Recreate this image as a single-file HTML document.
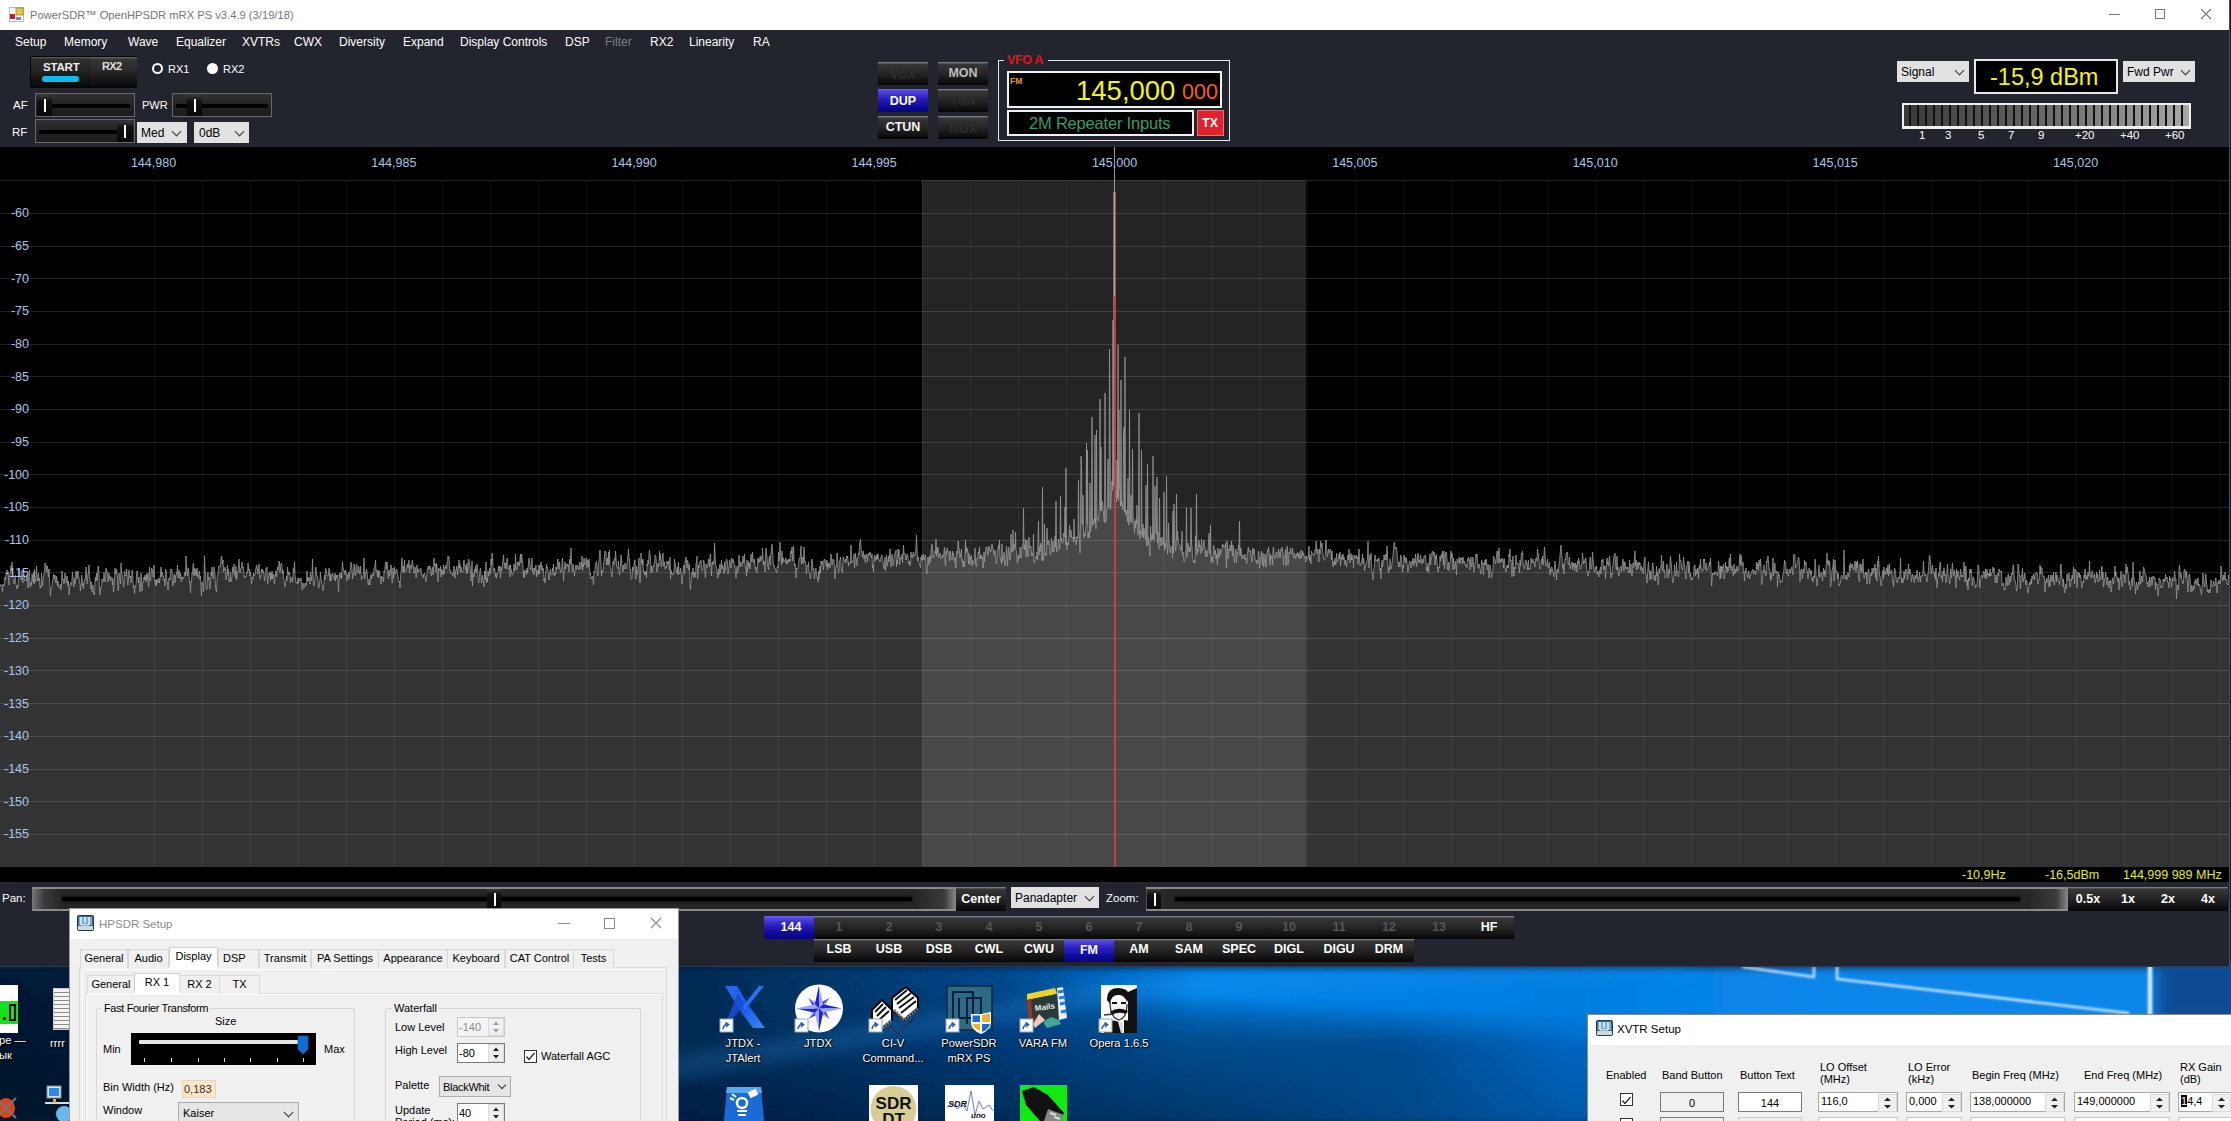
<!DOCTYPE html>
<html><head><meta charset="utf-8">
<style>
*{box-sizing:border-box}
html,body{margin:0;padding:0}
body{width:2231px;height:1121px;position:relative;overflow:hidden;background:#0b1d44;font-family:"Liberation Sans",sans-serif;font-size:12px;color:#fff}
.a{position:absolute}
.t{position:absolute;white-space:nowrap;line-height:1}
.btn{position:absolute;background:linear-gradient(#8a8a8a 0,#6a6a6a 1px,#363636 2px,#2c2c2c 35%,#1c1c1c 65%,#060606 100%);color:#fff;font-weight:bold;text-align:center;white-space:nowrap}
.btnb{position:absolute;background:linear-gradient(#6a60f0 0,#5548e0 2px,#2a20c0 40%,#0c0a9a 75%,#08067a 100%);color:#fff;font-weight:bold;text-align:center;white-space:nowrap}
.dim{color:#3c3c3c}
.combo{position:absolute;background:#e1e1e1;border:1px solid #adadad;color:#000;white-space:nowrap;overflow:hidden}
.chev{position:absolute;width:7px;height:7px;border-right:1px solid #333;border-bottom:1px solid #333;transform:rotate(45deg)}
.sl{position:absolute;border:1px solid #6a6a6a;background:linear-gradient(#303030,#242424 50%,#1c1c1c)}
.groove{position:absolute;height:4px;background:#000}
.thumb{position:absolute;background:linear-gradient(#3a3a3a,#111 30%,#080808)}
.thumb:after{content:"";position:absolute;left:7px;top:4px;width:2px;height:13px;background:#fff}
.win{position:absolute;background:#f0f0f0;border:1px solid #aaa;overflow:hidden;color:#000}
.wtitle{position:absolute;left:0;top:0;right:0;height:30px;background:#fff}
.tab{position:absolute;border:1px solid #d9d9d9;border-bottom:none;background:#f0f0f0;color:#000;white-space:nowrap;text-align:center}
.spin{position:absolute;background:#fff;border:1px solid #7a7a7a;color:#000}
.icon-lbl{position:absolute;color:#fff;text-align:center;font-size:11.2px;line-height:15px;text-shadow:0 0 2px #000,1px 1px 1px #000}
</style></head>
<body>
<!-- ===== DESKTOP ===== -->
<div id="desk" class="a" style="left:0;top:960px;width:2231px;height:161px;overflow:hidden">
<svg class="a" style="left:0;top:0" width="2231" height="161" viewBox="0 960 2231 161">
  <defs>
    <linearGradient id="dr" x1="-22.6" y1="1046.2" x2="166" y2="386" gradientUnits="userSpaceOnUse">
      <stop offset="0" stop-color="#06163a"/>
      <stop offset="0.24" stop-color="#0a2050"/>
      <stop offset="0.38" stop-color="#0a2c5e"/>
      <stop offset="0.50" stop-color="#063c80"/>
      <stop offset="0.566" stop-color="#0050a0"/>
      <stop offset="0.602" stop-color="#0058a8"/>
      <stop offset="0.66" stop-color="#0a6ac8"/>
      <stop offset="0.76" stop-color="#0a78d8"/>
      <stop offset="1" stop-color="#0a7ad8"/>
    </linearGradient>
    <filter id="bl"><feGaussianBlur stdDeviation="8"/></filter>
    <filter id="bl2"><feGaussianBlur stdDeviation="0.8"/></filter>
  </defs>
  <defs><linearGradient id="dg0" gradientUnits="userSpaceOnUse" x1="0" x2="2231" y1="0" y2="0"><stop offset="0.0000" stop-color="#001a38"/><stop offset="0.1546" stop-color="#002245"/><stop offset="0.3093" stop-color="#002a52"/><stop offset="0.3788" stop-color="#003a70"/><stop offset="0.4482" stop-color="#00498d"/><stop offset="0.4706" stop-color="#0057a5"/><stop offset="0.4931" stop-color="#0066c0"/><stop offset="0.5155" stop-color="#0075d4"/><stop offset="0.5379" stop-color="#0084e8"/><stop offset="0.5827" stop-color="#0082e6"/><stop offset="0.6275" stop-color="#0080e4"/><stop offset="0.6656" stop-color="#007fe2"/><stop offset="0.7037" stop-color="#007ee0"/><stop offset="0.7620" stop-color="#0683e6"/><stop offset="0.8068" stop-color="#0a86ea"/><stop offset="0.8965" stop-color="#0a86ea"/><stop offset="1.0000" stop-color="#0a86ea"/></linearGradient><linearGradient id="dg1" gradientUnits="userSpaceOnUse" x1="0" x2="2231" y1="0" y2="0"><stop offset="0.0000" stop-color="#001a37"/><stop offset="0.1546" stop-color="#002244"/><stop offset="0.3093" stop-color="#002a52"/><stop offset="0.3788" stop-color="#00396f"/><stop offset="0.4482" stop-color="#00488b"/><stop offset="0.4706" stop-color="#0055a2"/><stop offset="0.4931" stop-color="#0066c0"/><stop offset="0.5155" stop-color="#0075d4"/><stop offset="0.5379" stop-color="#0084e8"/><stop offset="0.5827" stop-color="#0082e6"/><stop offset="0.6275" stop-color="#0080e4"/><stop offset="0.6656" stop-color="#007fe2"/><stop offset="0.7037" stop-color="#007ee0"/><stop offset="0.7620" stop-color="#0683e6"/><stop offset="0.8068" stop-color="#0a86ea"/><stop offset="0.8965" stop-color="#0a86ea"/><stop offset="1.0000" stop-color="#0a86ea"/></linearGradient><linearGradient id="dg2" gradientUnits="userSpaceOnUse" x1="0" x2="2231" y1="0" y2="0"><stop offset="0.0000" stop-color="#001936"/><stop offset="0.1546" stop-color="#002244"/><stop offset="0.3093" stop-color="#002a52"/><stop offset="0.3788" stop-color="#00386e"/><stop offset="0.4482" stop-color="#00478a"/><stop offset="0.4706" stop-color="#00539f"/><stop offset="0.4931" stop-color="#0066c0"/><stop offset="0.5155" stop-color="#0075d4"/><stop offset="0.5379" stop-color="#0084e8"/><stop offset="0.5827" stop-color="#0082e6"/><stop offset="0.6275" stop-color="#0080e4"/><stop offset="0.6656" stop-color="#007fe2"/><stop offset="0.7037" stop-color="#007ee0"/><stop offset="0.7620" stop-color="#0683e6"/><stop offset="0.8068" stop-color="#0a86ea"/><stop offset="0.8965" stop-color="#0a86ea"/><stop offset="1.0000" stop-color="#0a86ea"/></linearGradient><linearGradient id="dg3" gradientUnits="userSpaceOnUse" x1="0" x2="2231" y1="0" y2="0"><stop offset="0.0000" stop-color="#001935"/><stop offset="0.1546" stop-color="#002143"/><stop offset="0.3093" stop-color="#002a51"/><stop offset="0.3788" stop-color="#00386d"/><stop offset="0.4482" stop-color="#004688"/><stop offset="0.4706" stop-color="#00519c"/><stop offset="0.4931" stop-color="#0066c0"/><stop offset="0.5155" stop-color="#0075d4"/><stop offset="0.5379" stop-color="#0084e8"/><stop offset="0.5827" stop-color="#0082e6"/><stop offset="0.6275" stop-color="#0080e4"/><stop offset="0.6656" stop-color="#007fe2"/><stop offset="0.7037" stop-color="#007ee0"/><stop offset="0.7620" stop-color="#0683e6"/><stop offset="0.8068" stop-color="#0a86ea"/><stop offset="0.8965" stop-color="#0a86ea"/><stop offset="1.0000" stop-color="#0a86ea"/></linearGradient><linearGradient id="dg4" gradientUnits="userSpaceOnUse" x1="0" x2="2231" y1="0" y2="0"><stop offset="0.0000" stop-color="#001935"/><stop offset="0.1546" stop-color="#002143"/><stop offset="0.3093" stop-color="#002a51"/><stop offset="0.3788" stop-color="#00376c"/><stop offset="0.4482" stop-color="#004486"/><stop offset="0.4706" stop-color="#004f98"/><stop offset="0.4931" stop-color="#0062b9"/><stop offset="0.5155" stop-color="#0073d1"/><stop offset="0.5379" stop-color="#0084e8"/><stop offset="0.5827" stop-color="#0082e6"/><stop offset="0.6275" stop-color="#0080e4"/><stop offset="0.6656" stop-color="#007fe2"/><stop offset="0.7037" stop-color="#007ee0"/><stop offset="0.7620" stop-color="#0683e6"/><stop offset="0.8068" stop-color="#0a86ea"/><stop offset="0.8965" stop-color="#0a86ea"/><stop offset="1.0000" stop-color="#0a86ea"/></linearGradient><linearGradient id="dg5" gradientUnits="userSpaceOnUse" x1="0" x2="2231" y1="0" y2="0"><stop offset="0.0000" stop-color="#001834"/><stop offset="0.1546" stop-color="#002142"/><stop offset="0.3093" stop-color="#002a51"/><stop offset="0.3788" stop-color="#00376b"/><stop offset="0.4482" stop-color="#004385"/><stop offset="0.4706" stop-color="#004d95"/><stop offset="0.4931" stop-color="#005daf"/><stop offset="0.5155" stop-color="#006cc4"/><stop offset="0.5379" stop-color="#007cdb"/><stop offset="0.5827" stop-color="#0082e5"/><stop offset="0.6275" stop-color="#0080e4"/><stop offset="0.6656" stop-color="#007fe2"/><stop offset="0.7037" stop-color="#007ee0"/><stop offset="0.7620" stop-color="#0683e6"/><stop offset="0.8068" stop-color="#0a86ea"/><stop offset="0.8965" stop-color="#0a86ea"/><stop offset="1.0000" stop-color="#0a86ea"/></linearGradient><linearGradient id="dg6" gradientUnits="userSpaceOnUse" x1="0" x2="2231" y1="0" y2="0"><stop offset="0.0000" stop-color="#001833"/><stop offset="0.1546" stop-color="#002142"/><stop offset="0.3093" stop-color="#002a51"/><stop offset="0.3788" stop-color="#00366a"/><stop offset="0.4482" stop-color="#004283"/><stop offset="0.4706" stop-color="#004b92"/><stop offset="0.4931" stop-color="#0057a5"/><stop offset="0.5155" stop-color="#0064b8"/><stop offset="0.5379" stop-color="#0073cc"/><stop offset="0.5827" stop-color="#0079d7"/><stop offset="0.6275" stop-color="#007ee1"/><stop offset="0.6656" stop-color="#007fe2"/><stop offset="0.7037" stop-color="#007ee0"/><stop offset="0.7620" stop-color="#0683e6"/><stop offset="0.8068" stop-color="#0a86ea"/><stop offset="0.8965" stop-color="#0a86ea"/><stop offset="1.0000" stop-color="#0a86ea"/></linearGradient><linearGradient id="dg7" gradientUnits="userSpaceOnUse" x1="0" x2="2231" y1="0" y2="0"><stop offset="0.0000" stop-color="#001832"/><stop offset="0.1546" stop-color="#002142"/><stop offset="0.3093" stop-color="#002a51"/><stop offset="0.3788" stop-color="#003569"/><stop offset="0.4482" stop-color="#004181"/><stop offset="0.4706" stop-color="#00498f"/><stop offset="0.4931" stop-color="#00519b"/><stop offset="0.5155" stop-color="#005dac"/><stop offset="0.5379" stop-color="#006abe"/><stop offset="0.5827" stop-color="#0070c9"/><stop offset="0.6275" stop-color="#0075d3"/><stop offset="0.6656" stop-color="#007bdd"/><stop offset="0.7037" stop-color="#007ee0"/><stop offset="0.7620" stop-color="#0683e6"/><stop offset="0.8068" stop-color="#0a86ea"/><stop offset="0.8965" stop-color="#0a86ea"/><stop offset="1.0000" stop-color="#0a86ea"/></linearGradient><linearGradient id="dg8" gradientUnits="userSpaceOnUse" x1="0" x2="2231" y1="0" y2="0"><stop offset="0.0000" stop-color="#001731"/><stop offset="0.1546" stop-color="#002141"/><stop offset="0.3093" stop-color="#002a51"/><stop offset="0.3788" stop-color="#003568"/><stop offset="0.4482" stop-color="#004080"/><stop offset="0.4706" stop-color="#00478c"/><stop offset="0.4931" stop-color="#004d93"/><stop offset="0.5155" stop-color="#00569f"/><stop offset="0.5379" stop-color="#0061af"/><stop offset="0.5827" stop-color="#0067bb"/><stop offset="0.6275" stop-color="#006dc5"/><stop offset="0.6656" stop-color="#0075d3"/><stop offset="0.7037" stop-color="#007adb"/><stop offset="0.7620" stop-color="#0683e6"/><stop offset="0.8068" stop-color="#0a86ea"/><stop offset="0.8965" stop-color="#0a86ea"/><stop offset="1.0000" stop-color="#0a86ea"/></linearGradient><linearGradient id="dg9" gradientUnits="userSpaceOnUse" x1="0" x2="2231" y1="0" y2="0"><stop offset="0.0000" stop-color="#001731"/><stop offset="0.1546" stop-color="#002141"/><stop offset="0.3093" stop-color="#002a51"/><stop offset="0.3788" stop-color="#003467"/><stop offset="0.4482" stop-color="#003e7e"/><stop offset="0.4706" stop-color="#004588"/><stop offset="0.4931" stop-color="#004b90"/><stop offset="0.5155" stop-color="#005299"/><stop offset="0.5379" stop-color="#005ba4"/><stop offset="0.5827" stop-color="#005fac"/><stop offset="0.6275" stop-color="#0065b8"/><stop offset="0.6656" stop-color="#006fca"/><stop offset="0.7037" stop-color="#0076d6"/><stop offset="0.7620" stop-color="#057fe1"/><stop offset="0.8068" stop-color="#0a86ea"/><stop offset="0.8965" stop-color="#0a86ea"/><stop offset="1.0000" stop-color="#0a86ea"/></linearGradient><linearGradient id="dg10" gradientUnits="userSpaceOnUse" x1="0" x2="2231" y1="0" y2="0"><stop offset="0.0000" stop-color="#001730"/><stop offset="0.1546" stop-color="#002040"/><stop offset="0.3093" stop-color="#002a50"/><stop offset="0.3788" stop-color="#003466"/><stop offset="0.4482" stop-color="#003d7c"/><stop offset="0.4706" stop-color="#004385"/><stop offset="0.4931" stop-color="#00488c"/><stop offset="0.5155" stop-color="#004f94"/><stop offset="0.5379" stop-color="#00569d"/><stop offset="0.5827" stop-color="#0059a2"/><stop offset="0.6275" stop-color="#005caa"/><stop offset="0.6656" stop-color="#0068c1"/><stop offset="0.7037" stop-color="#0072d1"/><stop offset="0.7620" stop-color="#047bdc"/><stop offset="0.8068" stop-color="#0882e5"/><stop offset="0.8965" stop-color="#0a86ea"/><stop offset="1.0000" stop-color="#0a86ea"/></linearGradient><linearGradient id="dg11" gradientUnits="userSpaceOnUse" x1="0" x2="2231" y1="0" y2="0"><stop offset="0.0000" stop-color="#00162f"/><stop offset="0.1546" stop-color="#002040"/><stop offset="0.3093" stop-color="#002a50"/><stop offset="0.3788" stop-color="#003365"/><stop offset="0.4482" stop-color="#003c7b"/><stop offset="0.4706" stop-color="#004182"/><stop offset="0.4931" stop-color="#004688"/><stop offset="0.5155" stop-color="#004c8f"/><stop offset="0.5379" stop-color="#005296"/><stop offset="0.5827" stop-color="#00549a"/><stop offset="0.6275" stop-color="#0056a0"/><stop offset="0.6656" stop-color="#0062b7"/><stop offset="0.7037" stop-color="#006ecc"/><stop offset="0.7620" stop-color="#0378d7"/><stop offset="0.8068" stop-color="#077fe0"/><stop offset="0.8965" stop-color="#0984e8"/><stop offset="1.0000" stop-color="#0a86ea"/></linearGradient><linearGradient id="dg12" gradientUnits="userSpaceOnUse" x1="0" x2="2231" y1="0" y2="0"><stop offset="0.0000" stop-color="#00162e"/><stop offset="0.1546" stop-color="#00203f"/><stop offset="0.3093" stop-color="#002a50"/><stop offset="0.3788" stop-color="#003264"/><stop offset="0.4482" stop-color="#003b79"/><stop offset="0.4706" stop-color="#003f7f"/><stop offset="0.4931" stop-color="#004484"/><stop offset="0.5155" stop-color="#00498a"/><stop offset="0.5379" stop-color="#004e8f"/><stop offset="0.5827" stop-color="#004f92"/><stop offset="0.6275" stop-color="#004f95"/><stop offset="0.6656" stop-color="#005bad"/><stop offset="0.7037" stop-color="#0068c5"/><stop offset="0.7620" stop-color="#0274d2"/><stop offset="0.8068" stop-color="#057bdb"/><stop offset="0.8965" stop-color="#0881e3"/><stop offset="1.0000" stop-color="#0a86ea"/></linearGradient><linearGradient id="dg13" gradientUnits="userSpaceOnUse" x1="0" x2="2231" y1="0" y2="0"><stop offset="0.0000" stop-color="#00162e"/><stop offset="0.1546" stop-color="#00203f"/><stop offset="0.3093" stop-color="#002a50"/><stop offset="0.3788" stop-color="#003163"/><stop offset="0.4482" stop-color="#003977"/><stop offset="0.4706" stop-color="#003e7c"/><stop offset="0.4931" stop-color="#004281"/><stop offset="0.5155" stop-color="#004786"/><stop offset="0.5379" stop-color="#004b8b"/><stop offset="0.5827" stop-color="#004b8d"/><stop offset="0.6275" stop-color="#004c90"/><stop offset="0.6656" stop-color="#0058a7"/><stop offset="0.7037" stop-color="#0064bf"/><stop offset="0.7620" stop-color="#006ac6"/><stop offset="0.8068" stop-color="#0378d6"/><stop offset="0.8965" stop-color="#067dde"/><stop offset="1.0000" stop-color="#0984e7"/></linearGradient><linearGradient id="dg14" gradientUnits="userSpaceOnUse" x1="0" x2="2231" y1="0" y2="0"><stop offset="0.0000" stop-color="#00162e"/><stop offset="0.1546" stop-color="#001f3e"/><stop offset="0.3093" stop-color="#00294f"/><stop offset="0.3788" stop-color="#003061"/><stop offset="0.4482" stop-color="#003874"/><stop offset="0.4706" stop-color="#003d79"/><stop offset="0.4931" stop-color="#00417e"/><stop offset="0.5155" stop-color="#004583"/><stop offset="0.5379" stop-color="#004a88"/><stop offset="0.5827" stop-color="#004a8c"/><stop offset="0.6275" stop-color="#004b8f"/><stop offset="0.6656" stop-color="#0057a6"/><stop offset="0.7037" stop-color="#0063bd"/><stop offset="0.7620" stop-color="#0069c4"/><stop offset="0.8068" stop-color="#006ec9"/><stop offset="0.8965" stop-color="#047ad9"/><stop offset="1.0000" stop-color="#0780e2"/></linearGradient><linearGradient id="dg15" gradientUnits="userSpaceOnUse" x1="0" x2="2231" y1="0" y2="0"><stop offset="0.0000" stop-color="#00152d"/><stop offset="0.1546" stop-color="#001f3d"/><stop offset="0.3093" stop-color="#00284e"/><stop offset="0.3788" stop-color="#002f60"/><stop offset="0.4482" stop-color="#003772"/><stop offset="0.4706" stop-color="#003b77"/><stop offset="0.4931" stop-color="#00407c"/><stop offset="0.5155" stop-color="#004481"/><stop offset="0.5379" stop-color="#004886"/><stop offset="0.5827" stop-color="#00498a"/><stop offset="0.6275" stop-color="#004b8e"/><stop offset="0.6656" stop-color="#0056a4"/><stop offset="0.7037" stop-color="#0062bb"/><stop offset="0.7620" stop-color="#0068c1"/><stop offset="0.8068" stop-color="#006dc6"/><stop offset="0.8965" stop-color="#006dc6"/><stop offset="1.0000" stop-color="#067ddd"/></linearGradient><linearGradient id="dg16" gradientUnits="userSpaceOnUse" x1="0" x2="2231" y1="0" y2="0"><stop offset="0.0000" stop-color="#00152d"/><stop offset="0.1546" stop-color="#001e3d"/><stop offset="0.3093" stop-color="#00274d"/><stop offset="0.3788" stop-color="#002e5e"/><stop offset="0.4482" stop-color="#00366f"/><stop offset="0.4706" stop-color="#003a74"/><stop offset="0.4931" stop-color="#003e79"/><stop offset="0.5155" stop-color="#00427e"/><stop offset="0.5379" stop-color="#004683"/><stop offset="0.5827" stop-color="#004888"/><stop offset="0.6275" stop-color="#004a8d"/><stop offset="0.6656" stop-color="#0056a3"/><stop offset="0.7037" stop-color="#0061b9"/><stop offset="0.7620" stop-color="#0067bf"/><stop offset="0.8068" stop-color="#006cc4"/><stop offset="0.8965" stop-color="#006cc4"/><stop offset="1.0000" stop-color="#0479d9"/></linearGradient><linearGradient id="dg17" gradientUnits="userSpaceOnUse" x1="0" x2="2231" y1="0" y2="0"><stop offset="0.0000" stop-color="#00152d"/><stop offset="0.1546" stop-color="#001d3c"/><stop offset="0.3093" stop-color="#00264c"/><stop offset="0.3788" stop-color="#002d5c"/><stop offset="0.4482" stop-color="#00356d"/><stop offset="0.4706" stop-color="#003972"/><stop offset="0.4931" stop-color="#003d77"/><stop offset="0.5155" stop-color="#00417c"/><stop offset="0.5379" stop-color="#004581"/><stop offset="0.5827" stop-color="#004787"/><stop offset="0.6275" stop-color="#004a8c"/><stop offset="0.6656" stop-color="#0055a2"/><stop offset="0.7037" stop-color="#0060b7"/><stop offset="0.7620" stop-color="#0066bd"/><stop offset="0.8068" stop-color="#006ac2"/><stop offset="0.8965" stop-color="#006ac2"/><stop offset="1.0000" stop-color="#006ac2"/></linearGradient><linearGradient id="dg18" gradientUnits="userSpaceOnUse" x1="0" x2="2231" y1="0" y2="0"><stop offset="0.0000" stop-color="#00152c"/><stop offset="0.1546" stop-color="#001d3c"/><stop offset="0.3093" stop-color="#00254b"/><stop offset="0.3788" stop-color="#002c5a"/><stop offset="0.4482" stop-color="#00346a"/><stop offset="0.4706" stop-color="#00386f"/><stop offset="0.4931" stop-color="#003c74"/><stop offset="0.5155" stop-color="#003f79"/><stop offset="0.5379" stop-color="#00437e"/><stop offset="0.5827" stop-color="#004685"/><stop offset="0.6275" stop-color="#00498c"/><stop offset="0.6656" stop-color="#0054a0"/><stop offset="0.7037" stop-color="#005fb5"/><stop offset="0.7620" stop-color="#0065bb"/><stop offset="0.8068" stop-color="#0069c0"/><stop offset="0.8965" stop-color="#0069c0"/><stop offset="1.0000" stop-color="#0069c0"/></linearGradient><linearGradient id="dg19" gradientUnits="userSpaceOnUse" x1="0" x2="2231" y1="0" y2="0"><stop offset="0.0000" stop-color="#00142c"/><stop offset="0.1546" stop-color="#001c3b"/><stop offset="0.3093" stop-color="#00244a"/><stop offset="0.3788" stop-color="#002b59"/><stop offset="0.4482" stop-color="#003368"/><stop offset="0.4706" stop-color="#00376d"/><stop offset="0.4931" stop-color="#003a72"/><stop offset="0.5155" stop-color="#003e77"/><stop offset="0.5379" stop-color="#00427c"/><stop offset="0.5827" stop-color="#004583"/><stop offset="0.6275" stop-color="#00498b"/><stop offset="0.6656" stop-color="#00539f"/><stop offset="0.7037" stop-color="#005eb3"/><stop offset="0.7620" stop-color="#0063b9"/><stop offset="0.8068" stop-color="#0068be"/><stop offset="0.8965" stop-color="#0068be"/><stop offset="1.0000" stop-color="#0068be"/></linearGradient><linearGradient id="dg20" gradientUnits="userSpaceOnUse" x1="0" x2="2231" y1="0" y2="0"><stop offset="0.0000" stop-color="#00142c"/><stop offset="0.1546" stop-color="#001c3a"/><stop offset="0.3093" stop-color="#002349"/><stop offset="0.3788" stop-color="#002a57"/><stop offset="0.4482" stop-color="#003265"/><stop offset="0.4706" stop-color="#00356a"/><stop offset="0.4931" stop-color="#00396f"/><stop offset="0.5155" stop-color="#003d74"/><stop offset="0.5379" stop-color="#004079"/><stop offset="0.5827" stop-color="#004482"/><stop offset="0.6275" stop-color="#00488a"/><stop offset="0.6656" stop-color="#00539d"/><stop offset="0.7037" stop-color="#005db1"/><stop offset="0.7620" stop-color="#0062b7"/><stop offset="0.8068" stop-color="#0067bb"/><stop offset="0.8965" stop-color="#0067bb"/><stop offset="1.0000" stop-color="#0067bb"/></linearGradient><linearGradient id="dg21" gradientUnits="userSpaceOnUse" x1="0" x2="2231" y1="0" y2="0"><stop offset="0.0000" stop-color="#00142b"/><stop offset="0.1546" stop-color="#001b3a"/><stop offset="0.3093" stop-color="#002248"/><stop offset="0.3788" stop-color="#002955"/><stop offset="0.4482" stop-color="#003163"/><stop offset="0.4706" stop-color="#003468"/><stop offset="0.4931" stop-color="#00386d"/><stop offset="0.5155" stop-color="#003b72"/><stop offset="0.5379" stop-color="#003f77"/><stop offset="0.5827" stop-color="#004380"/><stop offset="0.6275" stop-color="#004889"/><stop offset="0.6656" stop-color="#00529c"/><stop offset="0.7037" stop-color="#005caf"/><stop offset="0.7620" stop-color="#0061b5"/><stop offset="0.8068" stop-color="#0065b9"/><stop offset="0.8965" stop-color="#0065b9"/><stop offset="1.0000" stop-color="#0065b9"/></linearGradient><linearGradient id="dg22" gradientUnits="userSpaceOnUse" x1="0" x2="2231" y1="0" y2="0"><stop offset="0.0000" stop-color="#00142b"/><stop offset="0.1546" stop-color="#001a39"/><stop offset="0.3093" stop-color="#002147"/><stop offset="0.3788" stop-color="#002854"/><stop offset="0.4482" stop-color="#003060"/><stop offset="0.4706" stop-color="#003365"/><stop offset="0.4931" stop-color="#00366a"/><stop offset="0.5155" stop-color="#003a6f"/><stop offset="0.5379" stop-color="#003d74"/><stop offset="0.5827" stop-color="#00427e"/><stop offset="0.6275" stop-color="#004888"/><stop offset="0.6656" stop-color="#00519a"/><stop offset="0.7037" stop-color="#005bac"/><stop offset="0.7620" stop-color="#0060b2"/><stop offset="0.8068" stop-color="#0064b7"/><stop offset="0.8965" stop-color="#0064b7"/><stop offset="1.0000" stop-color="#0064b7"/></linearGradient><linearGradient id="dg23" gradientUnits="userSpaceOnUse" x1="0" x2="2231" y1="0" y2="0"><stop offset="0.0000" stop-color="#00142b"/><stop offset="0.1546" stop-color="#001a38"/><stop offset="0.3093" stop-color="#002046"/><stop offset="0.3788" stop-color="#002752"/><stop offset="0.4482" stop-color="#002e5d"/><stop offset="0.4706" stop-color="#003262"/><stop offset="0.4931" stop-color="#003567"/><stop offset="0.5155" stop-color="#00386c"/><stop offset="0.5379" stop-color="#003b71"/><stop offset="0.5827" stop-color="#00417d"/><stop offset="0.6275" stop-color="#004788"/><stop offset="0.6656" stop-color="#005199"/><stop offset="0.7037" stop-color="#005aaa"/><stop offset="0.7620" stop-color="#005fb0"/><stop offset="0.8068" stop-color="#0063b5"/><stop offset="0.8965" stop-color="#0063b5"/><stop offset="1.0000" stop-color="#0063b5"/></linearGradient><linearGradient id="dg24" gradientUnits="userSpaceOnUse" x1="0" x2="2231" y1="0" y2="0"><stop offset="0.0000" stop-color="#00132a"/><stop offset="0.1546" stop-color="#001938"/><stop offset="0.3093" stop-color="#001f45"/><stop offset="0.3788" stop-color="#002650"/><stop offset="0.4482" stop-color="#002d5b"/><stop offset="0.4706" stop-color="#003060"/><stop offset="0.4931" stop-color="#003465"/><stop offset="0.5155" stop-color="#00376a"/><stop offset="0.5379" stop-color="#003a6f"/><stop offset="0.5827" stop-color="#00407b"/><stop offset="0.6275" stop-color="#004787"/><stop offset="0.6656" stop-color="#005098"/><stop offset="0.7037" stop-color="#0059a8"/><stop offset="0.7620" stop-color="#005eae"/><stop offset="0.8068" stop-color="#0061b3"/><stop offset="0.8965" stop-color="#0061b3"/><stop offset="1.0000" stop-color="#0061b3"/></linearGradient><linearGradient id="dg25" gradientUnits="userSpaceOnUse" x1="0" x2="2231" y1="0" y2="0"><stop offset="0.0000" stop-color="#00132a"/><stop offset="0.1546" stop-color="#001937"/><stop offset="0.3093" stop-color="#001e44"/><stop offset="0.3788" stop-color="#00254e"/><stop offset="0.4482" stop-color="#002c58"/><stop offset="0.4706" stop-color="#002f5d"/><stop offset="0.4931" stop-color="#003262"/><stop offset="0.5155" stop-color="#003567"/><stop offset="0.5379" stop-color="#00386c"/><stop offset="0.5827" stop-color="#003f79"/><stop offset="0.6275" stop-color="#004686"/><stop offset="0.6656" stop-color="#004f96"/><stop offset="0.7037" stop-color="#0058a6"/><stop offset="0.7620" stop-color="#005dac"/><stop offset="0.8068" stop-color="#0060b0"/><stop offset="0.8965" stop-color="#0060b0"/><stop offset="1.0000" stop-color="#0060b0"/></linearGradient><filter id="dbl" x="-1%" y="-5%" width="102%" height="110%"><feGaussianBlur stdDeviation="2 4" edgeMode="duplicate"/></filter></defs><rect x="0" y="960" width="2231" height="161" fill="#001a38"/><g filter="url(#dbl)"><rect x="-20" y="967" width="2271" height="7" fill="url(#dg0)"/><rect x="-20" y="973" width="2271" height="7" fill="url(#dg1)"/><rect x="-20" y="979" width="2271" height="7" fill="url(#dg2)"/><rect x="-20" y="985" width="2271" height="7" fill="url(#dg3)"/><rect x="-20" y="991" width="2271" height="7" fill="url(#dg4)"/><rect x="-20" y="997" width="2271" height="7" fill="url(#dg5)"/><rect x="-20" y="1003" width="2271" height="7" fill="url(#dg6)"/><rect x="-20" y="1009" width="2271" height="7" fill="url(#dg7)"/><rect x="-20" y="1015" width="2271" height="7" fill="url(#dg8)"/><rect x="-20" y="1021" width="2271" height="7" fill="url(#dg9)"/><rect x="-20" y="1027" width="2271" height="7" fill="url(#dg10)"/><rect x="-20" y="1033" width="2271" height="7" fill="url(#dg11)"/><rect x="-20" y="1039" width="2271" height="7" fill="url(#dg12)"/><rect x="-20" y="1045" width="2271" height="7" fill="url(#dg13)"/><rect x="-20" y="1051" width="2271" height="7" fill="url(#dg14)"/><rect x="-20" y="1057" width="2271" height="7" fill="url(#dg15)"/><rect x="-20" y="1063" width="2271" height="7" fill="url(#dg16)"/><rect x="-20" y="1069" width="2271" height="7" fill="url(#dg17)"/><rect x="-20" y="1075" width="2271" height="7" fill="url(#dg18)"/><rect x="-20" y="1081" width="2271" height="7" fill="url(#dg19)"/><rect x="-20" y="1087" width="2271" height="7" fill="url(#dg20)"/><rect x="-20" y="1093" width="2271" height="7" fill="url(#dg21)"/><rect x="-20" y="1099" width="2271" height="7" fill="url(#dg22)"/><rect x="-20" y="1105" width="2271" height="7" fill="url(#dg23)"/><rect x="-20" y="1111" width="2271" height="7" fill="url(#dg24)"/><rect x="-20" y="1117" width="2271" height="7" fill="url(#dg25)"/></g>
  <!-- light streak -->
  <polygon points="640,1062 1150,978 1700,960 1700,972 1150,998 660,1082" fill="#3a9cf0" opacity="0.22" filter="url(#bl)"/>
  <!-- darker region right of logo -->
  <rect x="2156" y="955" width="90" height="70" fill="#0a4c96" filter="url(#bl)"/>
  <!-- logo edges -->
  <g filter="url(#bl2)" fill="none" stroke="#d8f0ff" stroke-linecap="square">
    <path d="M1743,967 L1814,977 L1814,967" stroke-width="2.5" stroke-opacity="0.85"/>
    <path d="M1837,967 L1837,979 L2128,1013" stroke-width="2.5" stroke-opacity="0.9"/>
    <path d="M2150,967 L2150,1013" stroke-width="4.5"/>
  </g>
</svg>

</div>

<!-- ===== MAIN WINDOW ===== -->
<div id="main" class="a" style="left:0;top:0;width:2229px;height:967px;background:#22252d;overflow:hidden">
  <!-- title bar -->
  <div class="a" style="left:0;top:0;width:2229px;height:30px;background:#fff"></div>
  <svg class="a" style="left:9px;top:7px" width="15" height="15" viewBox="0 0 15 15">
    <rect x="0.5" y="0.5" width="14" height="14" fill="#fff" stroke="#bbb"/>
    <rect x="7" y="1" width="7" height="7" fill="#e8c840" stroke="#a08820" stroke-width="0.8"/>
    <rect x="1" y="7" width="5" height="5" fill="#c02020"/>
    <rect x="7" y="10" width="5" height="3" fill="#5a8ad8"/>
  </svg>
  <div class="t" style="left:30px;top:9.5px;font-size:11.2px;color:#767676">PowerSDR™ OpenHPSDR mRX PS v3.4.9 (3/19/18)</div>
  <div class="a" style="left:2109px;top:14px;width:11px;height:1px;background:#777"></div>
  <div class="a" style="left:2155px;top:9px;width:10px;height:10px;border:1px solid #777"></div>
  <svg class="a" style="left:2200px;top:8px" width="12" height="12" viewBox="0 0 12 12"><path d="M1,1L11,11M11,1L1,11" stroke="#777" stroke-width="1.1"/></svg>

  <div class="t" style="left:15px;top:36px">Setup</div>
  <div class="t" style="left:64px;top:36px">Memory</div>
  <div class="t" style="left:128px;top:36px">Wave</div>
  <div class="t" style="left:176px;top:36px">Equalizer</div>
  <div class="t" style="left:242px;top:36px">XVTRs</div>
  <div class="t" style="left:294px;top:36px">CWX</div>
  <div class="t" style="left:339px;top:36px">Diversity</div>
  <div class="t" style="left:403px;top:36px">Expand</div>
  <div class="t" style="left:460px;top:36px">Display Controls</div>
  <div class="t" style="left:565px;top:36px">DSP</div>
  <div class="t" style="left:605px;top:36px;color:#7a7d84">Filter</div>
  <div class="t" style="left:650px;top:36px">RX2</div>
  <div class="t" style="left:689px;top:36px">Linearity</div>
  <div class="t" style="left:753px;top:36px">RA</div>

  <!-- START / RX2 -->
  <div class="a" style="left:30px;top:56px;width:107px;height:32px;background:#050505"></div>
  <div class="btn" style="left:31px;top:57px;width:60px;height:30px;background:linear-gradient(#5c5c5c 0,#4a4a4a 1px,#2e2e2e 2px,#262626 40%,#141414 75%,#080808 100%)"></div>
  <div class="btn" style="left:91px;top:57px;width:46px;height:30px;background:linear-gradient(#6a6a6a 0,#555 1px,#363636 2px,#2c2c2c 40%,#161616 75%,#0a0a0a 100%)"></div>
  <div class="t" style="left:43px;top:62px;font-size:11.5px;font-weight:bold;color:#ececec;letter-spacing:-0.2px">START</div>
  <div class="a" style="left:42px;top:76px;width:37px;height:6px;border-radius:3px;background:#0cbcec"></div>
  <div class="t" style="left:102px;top:61px;font-size:11px;font-weight:bold;color:#dedede;letter-spacing:-0.6px">RX2</div>
  <!-- radios -->
  <div class="a" style="left:152px;top:63px;width:11px;height:11px;border-radius:50%;border:2px solid #fff;background:#22252d"></div>
  <div class="t" style="left:168px;top:64px;font-size:11px;color:#fff">RX1</div>
  <div class="a" style="left:207px;top:63px;width:11px;height:11px;border-radius:50%;background:#fff"></div>
  <div class="t" style="left:223px;top:64px;font-size:11px;color:#fff">RX2</div>
  <!-- AF / PWR / RF -->
  <div class="t" style="left:13px;top:100px;font-size:11.5px">AF</div>
  <div class="sl" style="left:35px;top:93px;width:100px;height:24px"></div>
  <div class="groove" style="left:38px;top:104px;width:92px"></div>
  <div class="thumb" style="left:37px;top:95px;width:15px;height:21px"></div>
  <div class="t" style="left:142px;top:100px;font-size:11px">PWR</div>
  <div class="sl" style="left:172px;top:93px;width:100px;height:24px"></div>
  <div class="groove" style="left:176px;top:104px;width:92px"></div>
  <div class="thumb" style="left:187px;top:95px;width:15px;height:21px"></div>
  <div class="t" style="left:12px;top:127px;font-size:11.5px">RF</div>
  <div class="sl" style="left:35px;top:119px;width:100px;height:24px"></div>
  <div class="groove" style="left:39px;top:130px;width:92px"></div>
  <div class="thumb" style="left:117px;top:121px;width:16px;height:21px"></div>
  <div class="combo" style="left:137px;top:122px;width:50px;height:21px;border-color:#e1e1e1"><div class="t" style="left:3px;top:4px;font-size:12px">Med</div><div class="chev" style="left:35px;top:5px"></div></div>
  <div class="combo" style="left:194px;top:122px;width:55px;height:21px;border-color:#e1e1e1"><div class="t" style="left:4px;top:4px;font-size:12px">0dB</div><div class="chev" style="left:41px;top:5px"></div></div>

  <!-- VOX / DUP / CTUN / MON / TUN / MOX -->
  <div class="btn" style="left:878px;top:62px;width:50px;height:23px;padding-top:6px;font-size:12px;color:#2e2e2e">VOX</div>
  <div class="btnb" style="left:878px;top:89px;width:50px;height:23px;padding-top:5px;font-size:12.5px">DUP</div>
  <div class="btn" style="left:878px;top:116px;width:50px;height:23px;padding-top:4px;font-size:12.5px;color:#f4f4f4">CTUN</div>
  <div class="btn" style="left:938px;top:62px;width:50px;height:23px;padding-top:4px;font-size:12.5px;color:#bdbdbd">MON</div>
  <div class="btn" style="left:938px;top:89px;width:50px;height:23px;padding-top:5px;font-size:12px;color:#2c2c2c">TUN</div>
  <div class="btn" style="left:938px;top:116px;width:50px;height:23px;padding-top:6px;font-size:12px;color:#2c2c2c">MOX</div>

  <!-- VFO A -->
  <div class="a" style="left:998px;top:60px;width:232px;height:81px;border:1.5px solid #e6e6e6"></div>
  <div class="a" style="left:1004px;top:54px;width:44px;height:10px;background:#22252d"></div>
  <div class="t" style="left:1007px;top:54px;font-size:12.5px;font-weight:bold;color:#e8101c;letter-spacing:-0.3px">VFO A</div>
  <div class="a" style="left:1007px;top:71px;width:215px;height:37px;border:2px solid #f0f0f0;background:#000"></div>
  <div class="t" style="left:1010px;top:77px;font-size:8.5px;font-weight:bold;color:#e89a30">FM</div>
  <div class="t" style="left:1076px;top:77px;font-size:27.5px;color:#f2f21e">145,000</div>
  <div class="t" style="left:1182px;top:82px;font-size:21.5px;color:#ff5a1a">000</div>
  <div class="a" style="left:1007px;top:110px;width:187px;height:26px;border:2px solid #f0f0f0;background:#000"></div>
  <div class="t" style="left:1029px;top:115px;font-size:16.5px;color:#3c9a68;letter-spacing:-0.2px">2M Repeater Inputs</div>
  <div class="a" style="left:1197px;top:110px;width:27px;height:26px;background:#e4202a;border:1px solid #f07070"></div>
  <div class="t" style="left:1202px;top:117px;font-size:12.5px;font-weight:bold;color:#fff">TX</div>

  <!-- meter -->
  <div class="combo" style="left:1897px;top:61px;width:72px;height:21px;border-color:#e1e1e1"><div class="t" style="left:3px;top:4px;font-size:12px">Signal</div><div class="chev" style="left:58px;top:5px"></div></div>
  <div class="a" style="left:1974px;top:59px;width:144px;height:35px;border:2px solid #e8e8e8;background:#000"></div>
  <div class="t" style="left:1990px;top:66px;font-size:23.5px;color:#f2f21e">-15,9 dBm</div>
  <div class="combo" style="left:2123px;top:61px;width:72px;height:21px;border-color:#e1e1e1"><div class="t" style="left:3px;top:4px;font-size:12px">Fwd Pwr</div><div class="chev" style="left:58px;top:5px"></div></div>
  <div class="a" style="left:1902px;top:103px;width:289px;height:26px;background:#f0f0f0;padding:2px 2px 3px 2px">
    <div style="width:100%;height:100%;background:linear-gradient(90deg,#3a3a3a,#5e5e5e 40%,#8a8a8a 75%,#a8a8a8);position:relative">
      <div class="a" style="left:0;top:0;right:0;bottom:0;background:repeating-linear-gradient(90deg,transparent 0,transparent 6px,#111 6px,#111 8px);background-position:-1px 0"></div>
    </div>
  </div>
  <div class="t" style="left:1919px;top:130px;font-size:11.5px">1</div>
  <div class="t" style="left:1945px;top:130px;font-size:11.5px">3</div>
  <div class="t" style="left:1978px;top:130px;font-size:11.5px">5</div>
  <div class="t" style="left:2008px;top:130px;font-size:11.5px">7</div>
  <div class="t" style="left:2038px;top:130px;font-size:11.5px">9</div>
  <div class="t" style="left:2075px;top:130px;font-size:11.5px">+20</div>
  <div class="t" style="left:2120px;top:130px;font-size:11.5px">+40</div>
  <div class="t" style="left:2165px;top:130px;font-size:11.5px">+60</div>

<svg width="2229" height="720" viewBox="0 0 2229 720" style="position:absolute;left:0;top:147px;display:block">
<defs><clipPath id="pb"><rect x="922" y="0" width="384" height="720"/></clipPath></defs>
<rect x="0" y="0" width="2229" height="720" fill="#000"/>
<rect x="922" y="33.2" width="384" height="686.8" fill="#242424"/>
<defs><path id="sf" d="M0,437 0.5,439 1,439 1.5,438 2,440 2.5,445 3,437 3.5,439 4,439 4.5,434 5,430 5.5,433 6,428 6.5,428 7,423 7.5,424 8,424 8.5,432 9,438 9.5,428 10,428 10.5,426 11,419 11.5,424 12,415 12.5,428 13,431 13.5,434 14,437 14.5,434 15,430 15.5,428 16,438 16.5,439 17,442 17.5,438 18,440 18.5,431 19,430 19.5,421 20,429 20.5,429 21,433 21.5,433 22,423 22.5,432 23,436 23.5,422 24,427 24.5,433 25,434 25.5,433 26,434 26.5,428 27,433 27.5,430 28,441 28.5,430 29,428 29.5,423 30,440 30.5,440 31,435 31.5,438 32,427 32.5,429 33,435 33.5,425 34,437 34.5,422 35,433 35.5,435 36,429 36.5,419 37,430 37.5,434 38,431 38.5,426 39,434 39.5,431 40,441 40.5,439 41,441 41.5,426 42,434 42.5,439 43,434 43.5,429 44,428 44.5,423 45,416 45.5,418 46,418 46.5,425 47,419 47.5,419 48,426 48.5,430 49,422 49.5,433 50,441 50.5,449 51,441 51.5,441 52,439 52.5,434 53,433 53.5,427 54,429 54.5,432 55,428 55.5,434 56,436 56.5,429 57,433 57.5,439 58,434 58.5,438 59,441 59.5,440 60,439 60.5,437 61,443 61.5,438 62,424 62.5,433 63,432 63.5,434 64,437 64.5,434 65,426 65.5,430 66,435 66.5,436 67,429 67.5,435 68,439 68.5,434 69,448 69.5,442 70,439 70.5,436 71,438 71.5,437 72,432 72.5,425 73,431 73.5,439 74,440 74.5,431 75,437 75.5,428 76,424 76.5,425 77,432 77.5,427 78,424 78.5,429 79,430 79.5,436 80,437 80.5,444 81,439 81.5,428 82,429 82.5,439 83,436 83.5,442 84,434 84.5,434 85,431 85.5,431 86,420 86.5,429 87,437 87.5,432 88,427 88.5,425 89,418 89.5,431 90,434 90.5,434 91,442 91.5,435 92,445 92.5,443 93,438 93.5,447 94,446 94.5,448 95,433 95.5,430 96,434 96.5,426 97,433 97.5,433 98,419 98.5,421 99,428 99.5,441 100,448 100.5,442 101,440 101.5,441 102,432 102.5,435 103,435 103.5,434 104,425 104.5,432 105,435 105.5,432 106,421 106.5,425 107,424 107.5,427 108,435 108.5,431 109,426 109.5,432 110,429 110.5,434 111,432 111.5,431 112,430 112.5,438 113,432 113.5,445 114,440 114.5,432 115,421 115.5,427 116,426 116.5,422 117,426 117.5,432 118,444 118.5,442 119,426 119.5,430 120,432 120.5,437 121,416 121.5,425 122,426 122.5,431 123,431 123.5,440 124,435 124.5,424 125,429 125.5,428 126,429 126.5,422 127,426 127.5,437 128,438 128.5,432 129,423 129.5,430 130,431 130.5,429 131,436 131.5,433 132,423 132.5,424 133,434 133.5,441 134,438 134.5,447 135,440 135.5,440 136,437 136.5,429 137,424 137.5,424 138,433 138.5,436 139,430 139.5,439 140,445 140.5,438 141,426 141.5,430 142,444 142.5,437 143,435 143.5,433 144,430 144.5,433 145,428 145.5,430 146,435 146.5,427 147,433 147.5,430 148,426 148.5,440 149,434 149.5,420 150,433 150.5,434 151,429 151.5,421 152,422 152.5,423 153,430 153.5,430 154,418 154.5,434 155,433 155.5,439 156,433 156.5,438 157,432 157.5,435 158,436 158.5,433 159,431 159.5,436 160,431 160.5,428 161,420 161.5,430 162,425 162.5,427 163,429 163.5,429 164,434 164.5,432 165,439 165.5,422 166,423 166.5,426 167,436 167.5,435 168,443 168.5,435 169,431 169.5,431 170,433 170.5,422 171,423 171.5,422 172,423 172.5,437 173,439 173.5,435 174,427 174.5,427 175,436 175.5,429 176,429 176.5,425 177,426 177.5,418 178,431 178.5,427 179,423 179.5,425 180,432 180.5,426 181,429 181.5,435 182,430 182.5,430 183,432 183.5,431 184,430 184.5,426 185,425 185.5,429 186,409 186.5,420 187,425 187.5,429 188,421 188.5,421 189,428 189.5,436 190,435 190.5,446 191,434 191.5,435 192,426 192.5,427 193,418 193.5,416 194,429 194.5,421 195,427 195.5,428 196,422 196.5,429 197,421 197.5,430 198,430 198.5,431 199,425 199.5,424 200,433 200.5,429 201,442 201.5,449 202,435 202.5,435 203,439 203.5,445 204,428 204.5,409 205,423 205.5,426 206,439 206.5,443 207,442 207.5,428 208,425 208.5,433 209,430 209.5,440 210,442 210.5,436 211,425 211.5,429 212,420 212.5,426 213,431 213.5,432 214,420 214.5,426 215,426 215.5,440 216,443 216.5,445 217,432 217.5,428 218,428 218.5,420 219,419 219.5,419 220,420 220.5,418 221,411 221.5,409 222,412 222.5,417 223,413 223.5,425 224,422 224.5,423 225,420 225.5,423 226,433 226.5,430 227,426 227.5,418 228,428 228.5,422 229,435 229.5,433 230,431 230.5,425 231,435 231.5,431 232,431 232.5,420 233,424 233.5,425 234,417 234.5,428 235,424 235.5,431 236,419 236.5,433 237,431 237.5,425 238,424 238.5,421 239,412 239.5,421 240,426 240.5,423 241,421 241.5,421 242,415 242.5,419 243,421 243.5,420 244,427 244.5,431 245,430 245.5,429 246,430 246.5,425 247,426 247.5,426 248,416 248.5,421 249,424 249.5,422 250,429 250.5,425 251,429 251.5,437 252,432 252.5,430 253,432 253.5,426 254,429 254.5,428 255,428 255.5,423 256,421 256.5,418 257,419 257.5,424 258,427 258.5,423 259,417 259.5,426 260,432 260.5,429 261,429 261.5,422 262,425 262.5,422 263,426 263.5,424 264,427 264.5,434 265,433 265.5,428 266,421 266.5,422 267,420 267.5,437 268,434 268.5,430 269,426 269.5,428 270,425 270.5,434 271,426 271.5,432 272,424 272.5,432 273,427 273.5,427 274,433 274.5,437 275,428 275.5,429 276,424 276.5,430 277,425 277.5,420 278,423 278.5,422 279,414 279.5,415 280,425 280.5,422 281,417 281.5,416 282,420 282.5,427 283,423 283.5,428 284,434 284.5,437 285,440 285.5,435 286,433 286.5,429 287,434 287.5,420 288,425 288.5,428 289,425 289.5,426 290,429 290.5,436 291,431 291.5,431 292,430 292.5,435 293,428 293.5,421 294,425 294.5,415 295,428 295.5,432 296,436 296.5,436 297,435 297.5,437 298,431 298.5,436 299,431 299.5,433 300,433 300.5,434 301,431 301.5,436 302,443 302.5,443 303,436 303.5,438 304,441 304.5,440 305,436 305.5,437 306,439 306.5,436 307,424 307.5,434 308,431 308.5,434 309,430 309.5,435 310,437 310.5,425 311,430 311.5,434 312,428 312.5,412 313,428 313.5,438 314,439 314.5,435 315,432 315.5,422 316,420 316.5,429 317,429 317.5,429 318,433 318.5,441 319,441 319.5,437 320,432 320.5,425 321,432 321.5,433 322,437 322.5,440 323,444 323.5,441 324,435 324.5,428 325,433 325.5,421 326,423 326.5,424 327,429 327.5,429 328,429 328.5,428 329,421 329.5,424 330,434 330.5,427 331,434 331.5,430 332,427 332.5,426 333,428 333.5,430 334,431 334.5,433 335,426 335.5,434 336,428 336.5,431 337,428 337.5,428 338,434 338.5,445 339,434 339.5,426 340,430 340.5,431 341,426 341.5,432 342,422 342.5,415 343,421 343.5,422 344,424 344.5,424 345,428 345.5,423 346,425 346.5,428 347,434 347.5,428 348,429 348.5,425 349,432 349.5,427 350,425 350.5,421 351,415 351.5,418 352,422 352.5,432 353,427 353.5,428 354,417 354.5,421 355,427 355.5,429 356,420 356.5,417 357,420 357.5,426 358,425 358.5,419 359,421 359.5,427 360,425 360.5,419 361,427 361.5,433 362,430 362.5,430 363,429 363.5,425 364,411 364.5,431 365,432 365.5,425 366,426 366.5,422 367,425 367.5,429 368,437 368.5,438 369,432 369.5,433 370,438 370.5,428 371,428 371.5,432 372,427 372.5,426 373,428 373.5,429 374,422 374.5,420 375,419 375.5,413 376,424 376.5,423 377,423 377.5,430 378,423 378.5,431 379,426 379.5,424 380,429 380.5,431 381,437 381.5,429 382,431 382.5,430 383,434 383.5,435 384,424 384.5,425 385,421 385.5,415 386,415 386.5,422 387,415 387.5,420 388,427 388.5,432 389,423 389.5,429 390,427 390.5,422 391,418 391.5,424 392,436 392.5,436 393,421 393.5,431 394,426 394.5,420 395,427 395.5,425 396,424 396.5,422 397,423 397.5,427 398,428 398.5,434 399,435 399.5,434 400,441 400.5,432 401,425 401.5,418 402,411 402.5,422 403,425 403.5,419 404,426 404.5,413 405,424 405.5,424 406,424 406.5,424 407,418 407.5,417 408,421 408.5,419 409,413 409.5,426 410,420 410.5,418 411,419 411.5,422 412,415 412.5,413 413,418 413.5,419 414,426 414.5,426 415,420 415.5,422 416,431 416.5,430 417,418 417.5,425 418,422 418.5,425 419,424 419.5,423 420,423 420.5,421 421,422 421.5,428 422,428 422.5,428 423,431 423.5,427 424,428 424.5,426 425,427 425.5,432 426,435 426.5,429 427,428 427.5,421 428,420 428.5,419 429,423 429.5,419 430,419 430.5,422 431,427 431.5,429 432,422 432.5,420 433,428 433.5,424 434,411 434.5,419 435,417 435.5,417 436,425 436.5,416 437,420 437.5,429 438,435 438.5,421 439,423 439.5,422 440,424 440.5,419 441,430 441.5,422 442,426 442.5,424 443,428 443.5,418 444,427 444.5,425 445,420 445.5,421 446,418 446.5,422 447,416 447.5,415 448,409 448.5,411 449,410 449.5,421 450,424 450.5,423 451,427 451.5,426 452,426 452.5,427 453,429 453.5,421 454,419 454.5,427 455,431 455.5,426 456,422 456.5,423 457,419 457.5,428 458,423 458.5,422 459,413 459.5,421 460,417 460.5,425 461,420 461.5,423 462,426 462.5,425 463,425 463.5,417 464,413 464.5,419 465,418 465.5,423 466,419 466.5,427 467,416 467.5,426 468,424 468.5,412 469,413 469.5,417 470,419 470.5,423 471,434 471.5,431 472,414 472.5,439 473,428 473.5,426 474,430 474.5,422 475,425 475.5,419 476,425 476.5,426 477,417 477.5,420 478,431 478.5,436 479,435 479.5,428 480,423 480.5,421 481,429 481.5,436 482,431 482.5,428 483,433 483.5,436 484,440 484.5,424 485,433 485.5,431 486,415 486.5,436 487,431 487.5,435 488,424 488.5,428 489,429 489.5,421 490,426 490.5,427 491,412 491.5,418 492,406 492.5,409 493,421 493.5,424 494,423 494.5,421 495,424 495.5,430 496,426 496.5,431 497,427 497.5,427 498,425 498.5,419 499,424 499.5,419 500,419 500.5,431 501,420 501.5,424 502,421 502.5,417 503,414 503.5,408 504,416 504.5,416 505,421 505.5,416 506,422 506.5,417 507,411 507.5,412 508,422 508.5,423 509,422 509.5,418 510,430 510.5,418 511,423 511.5,423 512,428 512.5,428 513,428 513.5,423 514,417 514.5,420 515,424 515.5,407 516,420 516.5,422 517,423 517.5,415 518,418 518.5,415 519,419 519.5,417 520,412 520.5,407 521,416 521.5,407 522,411 522.5,414 523,420 523.5,430 524,424 524.5,431 525,423 525.5,424 526,423 526.5,428 527,421 527.5,426 528,421 528.5,416 529,411 529.5,413 530,419 530.5,423 531,420 531.5,416 532,411 532.5,425 533,421 533.5,427 534,428 534.5,421 535,424 535.5,420 536,418 536.5,430 537,424 537.5,423 538,428 538.5,424 539,418 539.5,427 540,418 540.5,420 541,415 541.5,423 542,419 542.5,424 543,421 543.5,424 544,434 544.5,431 545,436 545.5,426 546,424 546.5,417 547,421 547.5,420 548,425 548.5,427 549,433 549.5,429 550,424 550.5,422 551,428 551.5,428 552,428 552.5,421 553,424 553.5,417 554,429 554.5,428 555,425 555.5,428 556,420 556.5,423 557,423 557.5,413 558,412 558.5,419 559,422 559.5,415 560,421 560.5,426 561,425 561.5,424 562,416 562.5,411 563,421 563.5,434 564,426 564.5,421 565,415 565.5,422 566,419 566.5,417 567,418 567.5,417 568,420 568.5,418 569,425 569.5,412 570,417 570.5,415 571,401 571.5,416 572,422 572.5,425 573,417 573.5,422 574,424 574.5,429 575,423 575.5,421 576,418 576.5,423 577,420 577.5,418 578,419 578.5,422 579,423 579.5,417 580,415 580.5,422 581,421 581.5,417 582,409 582.5,424 583,416 583.5,420 584,411 584.5,418 585,417 585.5,417 586,411 586.5,411 587,421 587.5,413 588,414 588.5,420 589,412 589.5,421 590,428 590.5,426 591,432 591.5,431 592,430 592.5,429 593,433 593.5,438 594,424 594.5,425 595,423 595.5,417 596,416 596.5,414 597,420 597.5,429 598,427 598.5,416 599,415 599.5,406 600,403 600.5,408 601,418 601.5,429 602,423 602.5,425 603,425 603.5,416 604,415 604.5,407 605,404 605.5,405 606,405 606.5,418 607,416 607.5,411 608,418 608.5,405 609,417 609.5,403 610,419 610.5,421 611,423 611.5,428 612,430 612.5,421 613,414 613.5,415 614,418 614.5,411 615,414 615.5,404 616,410 616.5,418 617,420 617.5,421 618,422 618.5,414 619,424 619.5,428 620,424 620.5,418 621,408 621.5,413 622,419 622.5,420 623,425 623.5,418 624,421 624.5,422 625,416 625.5,419 626,419 626.5,422 627,417 627.5,414 628,407 628.5,402 629,412 629.5,412 630,423 630.5,422 631,432 631.5,432 632,432 632.5,420 633,424 633.5,423 634,418 634.5,413 635,413 635.5,432 636,432 636.5,419 637,428 637.5,425 638,422 638.5,419 639,411 639.5,431 640,436 640.5,429 641,406 641.5,416 642,413 642.5,418 643,412 643.5,425 644,424 644.5,428 645,425 645.5,428 646,424 646.5,431 647,417 647.5,419 648,413 648.5,417 649,408 649.5,403 650,409 650.5,409 651,426 651.5,419 652,423 652.5,425 653,419 653.5,420 654,417 654.5,416 655,409 655.5,408 656,410 656.5,419 657,425 657.5,419 658,416 658.5,420 659,419 659.5,404 660,413 660.5,407 661,414 661.5,420 662,414 662.5,411 663,406 663.5,419 664,418 664.5,415 665,422 665.5,422 666,419 666.5,421 667,414 667.5,417 668,417 668.5,414 669,418 669.5,423 670,410 670.5,432 671,423 671.5,427 672,426 672.5,428 673,428 673.5,427 674,424 674.5,412 675,416 675.5,418 676,422 676.5,426 677,425 677.5,420 678,428 678.5,415 679,426 679.5,427 680,426 680.5,421 681,424 681.5,430 682,437 682.5,431 683,427 683.5,418 684,419 684.5,427 685,414 685.5,415 686,410 686.5,416 687,421 687.5,413 688,415 688.5,423 689,420 689.5,417 690,438 690.5,443 691,435 691.5,429 692,425 692.5,428 693,421 693.5,430 694,431 694.5,425 695,429 695.5,430 696,416 696.5,416 697,409 697.5,432 698,429 698.5,418 699,421 699.5,415 700,416 700.5,414 701,413 701.5,420 702,424 702.5,423 703,422 703.5,413 704,414 704.5,421 705,426 705.5,431 706,417 706.5,421 707,420 707.5,420 708,417 708.5,412 709,414 709.5,420 710,409 710.5,407 711,420 711.5,429 712,416 712.5,418 713,414 713.5,416 714,417 714.5,396 715,405 715.5,417 716,420 716.5,420 717,424 717.5,431 718,430 718.5,422 719,428 719.5,420 720,417 720.5,426 721,419 721.5,413 722,422 722.5,418 723,420 723.5,422 724,427 724.5,415 725,423 725.5,424 726,414 726.5,412 727,413 727.5,416 728,427 728.5,424 729,420 729.5,413 730,416 730.5,417 731,421 731.5,411 732,416 732.5,414 733,412 733.5,413 734,416 734.5,420 735,419 735.5,427 736,431 736.5,426 737,419 737.5,426 738,424 738.5,421 739,408 739.5,413 740,420 740.5,415 741,415 741.5,419 742,419 742.5,414 743,409 743.5,416 744,415 744.5,407 745,418 745.5,421 746,421 746.5,429 747,413 747.5,425 748,420 748.5,414 749,420 749.5,416 750,422 750.5,416 751,407 751.5,414 752,415 752.5,405 753,412 753.5,414 754,416 754.5,412 755,418 755.5,423 756,420 756.5,426 757,425 757.5,418 758,411 758.5,416 759,412 759.5,415 760,409 760.5,409 761,414 761.5,410 762,412 762.5,401 763,411 763.5,418 764,414 764.5,415 765,425 765.5,410 766,401 766.5,407 767,409 767.5,418 768,420 768.5,423 769,411 769.5,409 770,418 770.5,409 771,406 771.5,401 772,397 772.5,403 773,413 773.5,419 774,418 774.5,420 775,422 775.5,422 776,424 776.5,426 777,421 777.5,419 778,421 778.5,405 779,414 779.5,410 780,395 780.5,406 781,409 781.5,418 782,404 782.5,416 783,411 783.5,411 784,415 784.5,414 785,415 785.5,412 786,411 786.5,417 787,413 787.5,417 788,415 788.5,412 789,414 789.5,412 790,415 790.5,404 791,405 791.5,407 792,400 792.5,414 793,405 793.5,399 794,411 794.5,419 795,417 795.5,418 796,431 796.5,421 797,422 797.5,422 798,421 798.5,416 799,413 799.5,411 800,412 800.5,406 801,399 801.5,417 802,411 802.5,410 803,417 803.5,412 804,400 804.5,415 805,414 805.5,415 806,422 806.5,427 807,419 807.5,418 808,420 808.5,415 809,425 809.5,426 810,430 810.5,432 811,426 811.5,414 812,412 812.5,415 813,423 813.5,421 814,425 814.5,432 815,426 815.5,422 816,421 816.5,429 817,431 817.5,431 818,435 818.5,424 819,432 819.5,425 820,419 820.5,426 821,414 821.5,417 822,416 822.5,414 823,420 823.5,423 824,413 824.5,412 825,414 825.5,414 826,417 826.5,420 827,413 827.5,423 828,416 828.5,420 829,417 829.5,416 830,421 830.5,412 831,407 831.5,411 832,418 832.5,416 833,412 833.5,414 834,413 834.5,425 835,432 835.5,422 836,419 836.5,420 837,406 837.5,410 838,420 838.5,426 839,423 839.5,414 840,413 840.5,410 841,416 841.5,424 842,423 842.5,426 843,411 843.5,410 844,413 844.5,414 845,415 845.5,412 846,416 846.5,409 847,411 847.5,409 848,413 848.5,419 849,416 849.5,417 850,415 850.5,416 851,398 851.5,412 852,416 852.5,416 853,414 853.5,413 854,407 854.5,421 855,416 855.5,406 856,411 856.5,413 857,419 857.5,411 858,411 858.5,406 859,408 859.5,398 860,395 860.5,392 861,400 861.5,404 862,407 862.5,410 863,404 863.5,405 864,412 864.5,408 865,414 865.5,416 866,407 866.5,411 867,409 867.5,415 868,407 868.5,409 869,406 869.5,408 870,405 870.5,405 871,410 871.5,411 872,407 872.5,421 873,418 873.5,425 874,411 874.5,408 875,414 875.5,411 876,409 876.5,413 877,407 877.5,412 878,407 878.5,412 879,413 879.5,413 880,415 880.5,411 881,411 881.5,408 882,408 882.5,411 883,415 883.5,419 884,422 884.5,418 885,410 885.5,424 886,418 886.5,408 887,415 887.5,419 888,413 888.5,409 889,415 889.5,408 890,402 890.5,410 891,420 891.5,416 892,407 892.5,411 893,418 893.5,419 894,411 894.5,408 895,406 895.5,406 896,403 896.5,420 897,413 897.5,417 898,402 898.5,410 899,403 899.5,418 900,412 900.5,410 901,412 901.5,412 902,407 902.5,416 903,407 903.5,398 904,407 904.5,406 905,407 905.5,409 906,413 906.5,411 907,407 907.5,409 908,409 908.5,417 909,416 909.5,414 910,419 910.5,416 911,405 911.5,410 912,408 912.5,411 913,406 913.5,405 914,409 914.5,408 915,409 915.5,405 916,400 916.5,388 917,401 917.5,414 918,410 918.5,410 919,415 919.5,418 920,418 920.5,421 921,410 921.5,414 922,408 922.5,413 923,409 923.5,407 924,413 924.5,411 925,410 925.5,408 926,419 926.5,425 927,427 927.5,418 928,410 928.5,416 929,418 929.5,409 930,409 930.5,415 931,404 931.5,401 932,397 932.5,401 933,411 933.5,409 934,408 934.5,407 935,404 935.5,406 936,392 936.5,409 937,401 937.5,406 938,400 938.5,411 939,410 939.5,409 940,406 940.5,407 941,411 941.5,412 942,411 942.5,408 943,410 943.5,410 944,404 944.5,400 945,415 945.5,419 946,404 946.5,408 947,401 947.5,403 948,405 948.5,405 949,405 949.5,414 950,404 950.5,406 951,412 951.5,411 952,413 952.5,404 953,408 953.5,406 954,412 954.5,415 955,410 955.5,420 956,421 956.5,408 957,404 957.5,407 958,394 958.5,395 959,402 959.5,404 960,411 960.5,408 961,406 961.5,402 962,414 962.5,412 963,420 963.5,414 964,416 964.5,420 965,407 965.5,393 966,406 966.5,400 967,404 967.5,402 968,406 968.5,417 969,406 969.5,417 970,417 970.5,410 971,412 971.5,408 972,419 972.5,413 973,416 973.5,417 974,414 974.5,414 975,401 975.5,417 976,419 976.5,420 977,411 977.5,412 978,408 978.5,405 979,407 979.5,400 980,412 980.5,408 981,412 981.5,408 982,411 982.5,410 983,421 983.5,418 984,405 984.5,415 985,410 985.5,407 986,400 986.5,400 987,400 987.5,406 988,408 988.5,403 989,399 989.5,402 990,402 990.5,405 991,404 991.5,401 992,397 992.5,399 993,402 993.5,404 994,408 994.5,408 995,403 995.5,411 996,414 996.5,417 997,410 997.5,403 998,402 998.5,398 999,402 999.5,393 1000,410 1000.5,412 1001,414 1001.5,417 1002,397 1002.5,415 1003,410 1003.5,411 1004,405 1004.5,413 1005,419 1005.5,416 1006,410 1006.5,399 1007,409 1007.5,419 1008,409 1008.5,400 1009,402 1009.5,411 1010,413 1010.5,412 1011,387 1011.5,404 1012,405 1012.5,405 1013,383 1013.5,404 1014,401 1014.5,397 1015,401 1015.5,385 1016,403 1016.5,404 1017,413 1017.5,416 1018,408 1018.5,408 1019,412 1019.5,410 1020,400 1020.5,402 1021,411 1021.5,411 1022,401 1022.5,397 1023,397 1023.5,361 1024,402 1024.5,398 1025,403 1025.5,392 1026,410 1026.5,401 1027,393 1027.5,407 1028,410 1028.5,408 1029,390 1029.5,401 1030,400 1030.5,399 1031,399 1031.5,409 1032,406 1032.5,409 1033,408 1033.5,387 1034,416 1034.5,414 1035,413 1035.5,413 1036,409 1036.5,411 1037,405 1037.5,413 1038,393 1038.5,374 1039,408 1039.5,400 1040,405 1040.5,396 1041,400 1041.5,398 1042,414 1042.5,340 1043,414 1043.5,411 1044,407 1044.5,377 1045,408 1045.5,409 1046,406 1046.5,408 1047,381 1047.5,397 1048,398 1048.5,394 1049,393 1049.5,399 1050,405 1050.5,408 1051,402 1051.5,391 1052,402 1052.5,405 1053,394 1053.5,405 1054,405 1054.5,399 1055,389 1055.5,400 1056,354 1056.5,403 1057,405 1057.5,401 1058,399 1058.5,392 1059,395 1059.5,403 1060,398 1060.5,349 1061,394 1061.5,391 1062,395 1062.5,396 1063,396 1063.5,386 1064,389 1064.5,390 1065,360 1065.5,398 1066,321 1066.5,398 1067,403 1067.5,395 1068,398 1068.5,394 1069,388 1069.5,378 1070,386 1070.5,390 1071,383 1071.5,391 1072,390 1072.5,391 1073,390 1073.5,395 1074,372 1074.5,392 1075,390 1075.5,393 1076,398 1076.5,394 1077,389 1077.5,391 1078,391 1078.5,333 1079,386 1079.5,389 1080,406 1080.5,375 1081,309 1081.5,319 1082,375 1082.5,378 1083,348 1083.5,384 1084,391 1084.5,386 1085,389 1085.5,383 1086,379 1086.5,296 1087,377 1087.5,303 1088,391 1088.5,385 1089,389 1089.5,391 1090,336 1090.5,385 1091,379 1091.5,375 1092,270 1092.5,379 1093,377 1093.5,377 1094,372 1094.5,376 1095,288 1095.5,375 1096,382 1096.5,283 1097,370 1097.5,373 1098,373 1098.5,374 1099,364 1099.5,356 1100,252 1100.5,364 1101,300 1101.5,364 1102,355 1102.5,354 1103,361 1103.5,366 1104,374 1104.5,376 1105,246 1105.5,336 1106,375 1106.5,364 1107,362 1107.5,362 1108,312 1108.5,352 1109,361 1109.5,202 1110,278 1110.5,363 1111,356 1111.5,346 1112,334 1112.5,344 1113,173 1113.5,339 1114,45 1114.5,300 1115,149 1115.5,340 1116,346 1116.5,355 1117,313 1117.5,351 1118,198 1118.5,354 1119,263 1119.5,340 1120,344 1120.5,359 1121,233 1121.5,359 1122,355 1122.5,359 1123,363 1123.5,288 1124,280 1124.5,365 1125,210 1125.5,368 1126,368 1126.5,363 1127,370 1127.5,375 1128,331 1128.5,378 1129,377 1129.5,263 1130,375 1130.5,371 1131,348 1131.5,373 1132,376 1132.5,302 1133,368 1133.5,372 1134,376 1134.5,386 1135,374 1135.5,381 1136,372 1136.5,377 1137,358 1137.5,388 1138,388 1138.5,385 1139,266 1139.5,387 1140,392 1140.5,384 1141,388 1141.5,303 1142,384 1142.5,390 1143,377 1143.5,391 1144,381 1144.5,387 1145,389 1145.5,393 1146,338 1146.5,399 1147,399 1147.5,317 1148,398 1148.5,390 1149,395 1149.5,403 1150,409 1150.5,379 1151,394 1151.5,392 1152,387 1152.5,392 1153,309 1153.5,392 1154,394 1154.5,390 1155,339 1155.5,361 1156,386 1156.5,387 1157,330 1157.5,396 1158,385 1158.5,397 1159,402 1159.5,351 1160,393 1160.5,391 1161,399 1161.5,396 1162,390 1162.5,397 1163,398 1163.5,398 1164,345 1164.5,404 1165,396 1165.5,401 1166,399 1166.5,329 1167,396 1167.5,407 1168,400 1168.5,376 1169,396 1169.5,398 1170,405 1170.5,406 1171,400 1171.5,400 1172,399 1172.5,411 1173,364 1173.5,406 1174,357 1174.5,391 1175,393 1175.5,404 1176,400 1176.5,347 1177,393 1177.5,384 1178,391 1178.5,397 1179,398 1179.5,398 1180,399 1180.5,403 1181,404 1181.5,402 1182,384 1182.5,408 1183,405 1183.5,410 1184,415 1184.5,415 1185,413 1185.5,404 1186,404 1186.5,360 1187,410 1187.5,400 1188,396 1188.5,399 1189,405 1189.5,400 1190,405 1190.5,402 1191,361 1191.5,396 1192,400 1192.5,409 1193,413 1193.5,416 1194,414 1194.5,413 1195,416 1195.5,389 1196,403 1196.5,347 1197,408 1197.5,402 1198,405 1198.5,397 1199,393 1199.5,400 1200,398 1200.5,407 1201,404 1201.5,392 1202,404 1202.5,402 1203,402 1203.5,396 1204,393 1204.5,399 1205,401 1205.5,410 1206,404 1206.5,403 1207,410 1207.5,407 1208,403 1208.5,395 1209,386 1209.5,406 1210,407 1210.5,378 1211,415 1211.5,412 1212,409 1212.5,411 1213,416 1213.5,398 1214,400 1214.5,406 1215,408 1215.5,403 1216,412 1216.5,407 1217,411 1217.5,418 1218,401 1218.5,409 1219,411 1219.5,408 1220,402 1220.5,408 1221,404 1221.5,403 1222,402 1222.5,397 1223,400 1223.5,398 1224,400 1224.5,400 1225,400 1225.5,396 1226,413 1226.5,421 1227,394 1227.5,399 1228,412 1228.5,406 1229,402 1229.5,404 1230,398 1230.5,400 1231,404 1231.5,394 1232,402 1232.5,409 1233,398 1233.5,403 1234,413 1234.5,416 1235,408 1235.5,402 1236,402 1236.5,416 1237,408 1237.5,405 1238,406 1238.5,398 1239,403 1239.5,374 1240,409 1240.5,403 1241,401 1241.5,407 1242,412 1242.5,410 1243,408 1243.5,411 1244,412 1244.5,410 1245,407 1245.5,413 1246,411 1246.5,417 1247,415 1247.5,406 1248,402 1248.5,400 1249,405 1249.5,404 1250,404 1250.5,403 1251,409 1251.5,410 1252,415 1252.5,403 1253,401 1253.5,407 1254,402 1254.5,406 1255,413 1255.5,413 1256,414 1256.5,416 1257,413 1257.5,417 1258,413 1258.5,404 1259,409 1259.5,421 1260,417 1260.5,412 1261,408 1261.5,404 1262,411 1262.5,418 1263,406 1263.5,420 1264,418 1264.5,414 1265,407 1265.5,413 1266,420 1266.5,414 1267,407 1267.5,403 1268,404 1268.5,400 1269,405 1269.5,412 1270,418 1270.5,407 1271,412 1271.5,410 1272,409 1272.5,418 1273,403 1273.5,400 1274,408 1274.5,409 1275,411 1275.5,411 1276,405 1276.5,405 1277,405 1277.5,411 1278,410 1278.5,402 1279,405 1279.5,405 1280,411 1280.5,406 1281,402 1281.5,404 1282,400 1282.5,403 1283,406 1283.5,418 1284,409 1284.5,410 1285,408 1285.5,402 1286,419 1286.5,413 1287,399 1287.5,402 1288,418 1288.5,415 1289,405 1289.5,407 1290,406 1290.5,401 1291,404 1291.5,407 1292,406 1292.5,401 1293,406 1293.5,411 1294,410 1294.5,406 1295,408 1295.5,412 1296,410 1296.5,407 1297,409 1297.5,405 1298,407 1298.5,411 1299,406 1299.5,409 1300,412 1300.5,406 1301,403 1301.5,411 1302,409 1302.5,404 1303,408 1303.5,406 1304,409 1304.5,411 1305,409 1305.5,415 1306,415 1306.5,409 1307,411 1307.5,412 1308,411 1308.5,408 1309,399 1309.5,414 1310,408 1310.5,412 1311,417 1311.5,404 1312,407 1312.5,406 1313,407 1313.5,408 1314,409 1314.5,406 1315,403 1315.5,404 1316,394 1316.5,395 1317,407 1317.5,402 1318,403 1318.5,414 1319,415 1319.5,402 1320,407 1320.5,394 1321,398 1321.5,401 1322,396 1322.5,404 1323,407 1323.5,412 1324,413 1324.5,413 1325,413 1325.5,398 1326,393 1326.5,401 1327,407 1327.5,410 1328,405 1328.5,402 1329,406 1329.5,404 1330,403 1330.5,402 1331,405 1331.5,413 1332,404 1332.5,415 1333,420 1333.5,417 1334,414 1334.5,418 1335,411 1335.5,418 1336,417 1336.5,406 1337,414 1337.5,415 1338,413 1338.5,409 1339,407 1339.5,412 1340,405 1340.5,419 1341,411 1341.5,413 1342,408 1342.5,412 1343,407 1343.5,413 1344,410 1344.5,414 1345,418 1345.5,413 1346,415 1346.5,420 1347,418 1347.5,409 1348,408 1348.5,413 1349,402 1349.5,409 1350,416 1350.5,412 1351,406 1351.5,413 1352,408 1352.5,412 1353,411 1353.5,421 1354,408 1354.5,409 1355,410 1355.5,409 1356,411 1356.5,408 1357,412 1357.5,410 1358,417 1358.5,410 1359,402 1359.5,412 1360,419 1360.5,417 1361,417 1361.5,416 1362,413 1362.5,407 1363,417 1363.5,411 1364,414 1364.5,424 1365,419 1365.5,420 1366,417 1366.5,415 1367,414 1367.5,411 1368,394 1368.5,413 1369,421 1369.5,414 1370,408 1370.5,413 1371,406 1371.5,420 1372,426 1372.5,428 1373,433 1373.5,423 1374,422 1374.5,416 1375,408 1375.5,414 1376,413 1376.5,414 1377,413 1377.5,412 1378,415 1378.5,411 1379,411 1379.5,420 1380,424 1380.5,421 1381,432 1381.5,419 1382,413 1382.5,420 1383,416 1383.5,415 1384,408 1384.5,411 1385,413 1385.5,407 1386,413 1386.5,412 1387,399 1387.5,408 1388,421 1388.5,426 1389,420 1389.5,423 1390,412 1390.5,416 1391,422 1391.5,421 1392,416 1392.5,413 1393,408 1393.5,403 1394,396 1394.5,395 1395,402 1395.5,400 1396,401 1396.5,401 1397,405 1397.5,412 1398,415 1398.5,420 1399,415 1399.5,415 1400,420 1400.5,408 1401,409 1401.5,412 1402,419 1402.5,425 1403,418 1403.5,421 1404,408 1404.5,414 1405,410 1405.5,414 1406,416 1406.5,411 1407,416 1407.5,421 1408,425 1408.5,421 1409,417 1409.5,414 1410,414 1410.5,419 1411,421 1411.5,420 1412,414 1412.5,417 1413,411 1413.5,419 1414,418 1414.5,412 1415,416 1415.5,407 1416,411 1416.5,420 1417,417 1417.5,410 1418,406 1418.5,410 1419,416 1419.5,413 1420,415 1420.5,408 1421,411 1421.5,417 1422,415 1422.5,412 1423,416 1423.5,415 1424,409 1424.5,410 1425,409 1425.5,408 1426,416 1426.5,424 1427,420 1427.5,424 1428,416 1428.5,426 1429,419 1429.5,412 1430,407 1430.5,418 1431,412 1431.5,412 1432,405 1432.5,404 1433,405 1433.5,409 1434,405 1434.5,409 1435,418 1435.5,409 1436,412 1436.5,407 1437,415 1437.5,420 1438,425 1438.5,420 1439,421 1439.5,421 1440,409 1440.5,414 1441,410 1441.5,407 1442,411 1442.5,404 1443,410 1443.5,418 1444,404 1444.5,422 1445,417 1445.5,406 1446,406 1446.5,405 1447,412 1447.5,423 1448,418 1448.5,415 1449,424 1449.5,418 1450,416 1450.5,411 1451,404 1451.5,411 1452,406 1452.5,412 1453,423 1453.5,411 1454,418 1454.5,422 1455,419 1455.5,414 1456,420 1456.5,428 1457,412 1457.5,412 1458,414 1458.5,416 1459,412 1459.5,410 1460,417 1460.5,411 1461,411 1461.5,413 1462,411 1462.5,417 1463,410 1463.5,414 1464,416 1464.5,414 1465,416 1465.5,419 1466,417 1466.5,421 1467,420 1467.5,412 1468,414 1468.5,410 1469,412 1469.5,413 1470,423 1470.5,414 1471,410 1471.5,419 1472,420 1472.5,414 1473,410 1473.5,419 1474,425 1474.5,421 1475,416 1475.5,413 1476,407 1476.5,410 1477,407 1477.5,416 1478,421 1478.5,421 1479,417 1479.5,419 1480,422 1480.5,425 1481,427 1481.5,413 1482,416 1482.5,415 1483,423 1483.5,428 1484,416 1484.5,418 1485,413 1485.5,418 1486,412 1486.5,413 1487,421 1487.5,423 1488,417 1488.5,420 1489,431 1489.5,424 1490,418 1490.5,420 1491,424 1491.5,431 1492,427 1492.5,426 1493,421 1493.5,409 1494,411 1494.5,412 1495,414 1495.5,417 1496,413 1496.5,409 1497,404 1497.5,405 1498,416 1498.5,406 1499,401 1499.5,411 1500,416 1500.5,412 1501,413 1501.5,415 1502,411 1502.5,413 1503,413 1503.5,421 1504,412 1504.5,412 1505,422 1505.5,422 1506,425 1506.5,421 1507,418 1507.5,421 1508,418 1508.5,421 1509,407 1509.5,410 1510,402 1510.5,414 1511,413 1511.5,419 1512,430 1512.5,415 1513,409 1513.5,425 1514,429 1514.5,420 1515,422 1515.5,418 1516,408 1516.5,415 1517,417 1517.5,416 1518,416 1518.5,417 1519,421 1519.5,426 1520,413 1520.5,419 1521,412 1521.5,406 1522,408 1522.5,404 1523,415 1523.5,418 1524,421 1524.5,422 1525,418 1525.5,413 1526,413 1526.5,416 1527,417 1527.5,423 1528,416 1528.5,413 1529,423 1529.5,421 1530,422 1530.5,421 1531,411 1531.5,415 1532,416 1532.5,415 1533,412 1533.5,416 1534,415 1534.5,416 1535,420 1535.5,413 1536,411 1536.5,411 1537,414 1537.5,402 1538,407 1538.5,408 1539,413 1539.5,419 1540,422 1540.5,422 1541,419 1541.5,412 1542,416 1542.5,409 1543,418 1543.5,418 1544,407 1544.5,400 1545,407 1545.5,416 1546,419 1546.5,419 1547,416 1547.5,412 1548,421 1548.5,421 1549,416 1549.5,415 1550,428 1550.5,422 1551,425 1551.5,420 1552,420 1552.5,423 1553,426 1553.5,426 1554,430 1554.5,420 1555,414 1555.5,419 1556,425 1556.5,433 1557,424 1557.5,422 1558,426 1558.5,424 1559,416 1559.5,416 1560,408 1560.5,403 1561,398 1561.5,406 1562,410 1562.5,419 1563,422 1563.5,417 1564,427 1564.5,417 1565,412 1565.5,413 1566,407 1566.5,407 1567,405 1567.5,406 1568,415 1568.5,418 1569,417 1569.5,410 1570,422 1570.5,420 1571,417 1571.5,416 1572,415 1572.5,423 1573,416 1573.5,420 1574,416 1574.5,421 1575,424 1575.5,416 1576,421 1576.5,418 1577,425 1577.5,414 1578,418 1578.5,411 1579,414 1579.5,414 1580,422 1580.5,422 1581,421 1581.5,417 1582,417 1582.5,406 1583,412 1583.5,417 1584,414 1584.5,416 1585,412 1585.5,412 1586,411 1586.5,421 1587,425 1587.5,425 1588,429 1588.5,424 1589,425 1589.5,418 1590,410 1590.5,411 1591,422 1591.5,422 1592,416 1592.5,405 1593,411 1593.5,418 1594,422 1594.5,425 1595,422 1595.5,420 1596,422 1596.5,419 1597,427 1597.5,427 1598,424 1598.5,428 1599,430 1599.5,424 1600,423 1600.5,420 1601,427 1601.5,413 1602,414 1602.5,415 1603,412 1603.5,423 1604,419 1604.5,422 1605,419 1605.5,432 1606,422 1606.5,419 1607,411 1607.5,417 1608,415 1608.5,419 1609,412 1609.5,409 1610,415 1610.5,422 1611,431 1611.5,426 1612,428 1612.5,421 1613,418 1613.5,413 1614,409 1614.5,408 1615,406 1615.5,414 1616,422 1616.5,423 1617,409 1617.5,423 1618,420 1618.5,427 1619,429 1619.5,424 1620,421 1620.5,420 1621,419 1621.5,425 1622,420 1622.5,416 1623,412 1623.5,417 1624,424 1624.5,415 1625,415 1625.5,418 1626,422 1626.5,420 1627,422 1627.5,420 1628,423 1628.5,426 1629,422 1629.5,413 1630,426 1630.5,422 1631,417 1631.5,427 1632,429 1632.5,425 1633,416 1633.5,421 1634,418 1634.5,409 1635,404 1635.5,419 1636,413 1636.5,423 1637,422 1637.5,415 1638,422 1638.5,418 1639,415 1639.5,418 1640,416 1640.5,421 1641,424 1641.5,419 1642,422 1642.5,421 1643,427 1643.5,425 1644,416 1644.5,413 1645,410 1645.5,426 1646,427 1646.5,429 1647,436 1647.5,428 1648,419 1648.5,415 1649,424 1649.5,423 1650,433 1650.5,425 1651,424 1651.5,432 1652,424 1652.5,416 1653,417 1653.5,423 1654,433 1654.5,430 1655,428 1655.5,434 1656,429 1656.5,419 1657,429 1657.5,425 1658,438 1658.5,437 1659,422 1659.5,426 1660,421 1660.5,421 1661,419 1661.5,408 1662,418 1662.5,424 1663,418 1663.5,414 1664,425 1664.5,423 1665,431 1665.5,431 1666,430 1666.5,419 1667,417 1667.5,420 1668,431 1668.5,430 1669,422 1669.5,427 1670,415 1670.5,409 1671,414 1671.5,419 1672,427 1672.5,435 1673,436 1673.5,432 1674,428 1674.5,418 1675,423 1675.5,429 1676,429 1676.5,415 1677,425 1677.5,424 1678,427 1678.5,430 1679,425 1679.5,407 1680,414 1680.5,413 1681,414 1681.5,421 1682,421 1682.5,423 1683,420 1683.5,410 1684,416 1684.5,420 1685,424 1685.5,429 1686,432 1686.5,420 1687,420 1687.5,416 1688,414 1688.5,426 1689,415 1689.5,421 1690,430 1690.5,426 1691,433 1691.5,431 1692,433 1692.5,431 1693,430 1693.5,429 1694,419 1694.5,419 1695,418 1695.5,429 1696,422 1696.5,425 1697,427 1697.5,421 1698,423 1698.5,432 1699,420 1699.5,418 1700,422 1700.5,412 1701,421 1701.5,424 1702,424 1702.5,423 1703,424 1703.5,412 1704,415 1704.5,412 1705,422 1705.5,422 1706,416 1706.5,423 1707,424 1707.5,423 1708,422 1708.5,418 1709,419 1709.5,415 1710,418 1710.5,411 1711,422 1711.5,439 1712,434 1712.5,426 1713,427 1713.5,426 1714,428 1714.5,426 1715,425 1715.5,424 1716,427 1716.5,426 1717,426 1717.5,429 1718,424 1718.5,414 1719,418 1719.5,422 1720,432 1720.5,419 1721,431 1721.5,419 1722,425 1722.5,420 1723,421 1723.5,417 1724,432 1724.5,431 1725,425 1725.5,415 1726,421 1726.5,419 1727,426 1727.5,420 1728,423 1728.5,424 1729,413 1729.5,411 1730,421 1730.5,407 1731,423 1731.5,424 1732,419 1732.5,423 1733,427 1733.5,429 1734,417 1734.5,422 1735,427 1735.5,422 1736,425 1736.5,423 1737,419 1737.5,424 1738,424 1738.5,422 1739,419 1739.5,414 1740,407 1740.5,418 1741,408 1741.5,413 1742,419 1742.5,419 1743,415 1743.5,426 1744,425 1744.5,434 1745,424 1745.5,425 1746,421 1746.5,426 1747,427 1747.5,431 1748,428 1748.5,424 1749,424 1749.5,432 1750,430 1750.5,428 1751,427 1751.5,425 1752,424 1752.5,422 1753,423 1753.5,427 1754,424 1754.5,424 1755,424 1755.5,428 1756,425 1756.5,415 1757,422 1757.5,416 1758,417 1758.5,424 1759,413 1759.5,415 1760,419 1760.5,412 1761,418 1761.5,438 1762,435 1762.5,434 1763,423 1763.5,424 1764,418 1764.5,426 1765,424 1765.5,425 1766,429 1766.5,414 1767,415 1767.5,412 1768,409 1768.5,415 1769,423 1769.5,422 1770,425 1770.5,434 1771,426 1771.5,432 1772,425 1772.5,424 1773,411 1773.5,429 1774,423 1774.5,416 1775,417 1775.5,426 1776,426 1776.5,425 1777,424 1777.5,440 1778,429 1778.5,425 1779,429 1779.5,428 1780,432 1780.5,436 1781,434 1781.5,434 1782,435 1782.5,432 1783,427 1783.5,427 1784,421 1784.5,413 1785,416 1785.5,415 1786,422 1786.5,427 1787,424 1787.5,422 1788,429 1788.5,429 1789,426 1789.5,422 1790,424 1790.5,426 1791,421 1791.5,421 1792,420 1792.5,426 1793,428 1793.5,409 1794,407 1794.5,408 1795,409 1795.5,421 1796,419 1796.5,418 1797,418 1797.5,416 1798,413 1798.5,410 1799,412 1799.5,419 1800,435 1800.5,427 1801,423 1801.5,422 1802,427 1802.5,432 1803,422 1803.5,422 1804,426 1804.5,413 1805,418 1805.5,417 1806,415 1806.5,422 1807,423 1807.5,426 1808,432 1808.5,427 1809,421 1809.5,422 1810,423 1810.5,428 1811,423 1811.5,426 1812,433 1812.5,431 1813,435 1813.5,429 1814,429 1814.5,431 1815,412 1815.5,416 1816,428 1816.5,433 1817,439 1817.5,433 1818,431 1818.5,426 1819,418 1819.5,427 1820,430 1820.5,427 1821,427 1821.5,425 1822,429 1822.5,434 1823,427 1823.5,421 1824,428 1824.5,423 1825,430 1825.5,429 1826,419 1826.5,416 1827,406 1827.5,417 1828,413 1828.5,415 1829,419 1829.5,414 1830,421 1830.5,440 1831,437 1831.5,433 1832,423 1832.5,422 1833,419 1833.5,412 1834,434 1834.5,427 1835,413 1835.5,421 1836,425 1836.5,424 1837,424 1837.5,432 1838,426 1838.5,428 1839,439 1839.5,437 1840,437 1840.5,435 1841,430 1841.5,428 1842,430 1842.5,431 1843,432 1843.5,427 1844,403 1844.5,422 1845,431 1845.5,432 1846,428 1846.5,432 1847,433 1847.5,426 1848,426 1848.5,427 1849,430 1849.5,418 1850,424 1850.5,416 1851,417 1851.5,421 1852,420 1852.5,417 1853,419 1853.5,423 1854,423 1854.5,419 1855,414 1855.5,417 1856,425 1856.5,415 1857,421 1857.5,414 1858,418 1858.5,429 1859,433 1859.5,435 1860,417 1860.5,424 1861,417 1861.5,422 1862,426 1862.5,423 1863,412 1863.5,426 1864,431 1864.5,431 1865,426 1865.5,425 1866,428 1866.5,425 1867,437 1867.5,427 1868,426 1868.5,422 1869,425 1869.5,437 1870,433 1870.5,428 1871,426 1871.5,429 1872,421 1872.5,424 1873,427 1873.5,421 1874,422 1874.5,424 1875,417 1875.5,431 1876,421 1876.5,429 1877,434 1877.5,414 1878,420 1878.5,409 1879,418 1879.5,429 1880,429 1880.5,435 1881,439 1881.5,438 1882,429 1882.5,426 1883,423 1883.5,432 1884,420 1884.5,428 1885,426 1885.5,427 1886,424 1886.5,421 1887,427 1887.5,422 1888,418 1888.5,429 1889,421 1889.5,417 1890,427 1890.5,425 1891,424 1891.5,423 1892,425 1892.5,435 1893,434 1893.5,440 1894,429 1894.5,421 1895,423 1895.5,424 1896,431 1896.5,434 1897,435 1897.5,436 1898,430 1898.5,431 1899,432 1899.5,430 1900,425 1900.5,411 1901,425 1901.5,436 1902,431 1902.5,432 1903,436 1903.5,434 1904,424 1904.5,432 1905,428 1905.5,424 1906,422 1906.5,425 1907,427 1907.5,433 1908,424 1908.5,417 1909,427 1909.5,423 1910,422 1910.5,426 1911,428 1911.5,435 1912,431 1912.5,427 1913,429 1913.5,430 1914,433 1914.5,436 1915,428 1915.5,431 1916,432 1916.5,431 1917,423 1917.5,428 1918,433 1918.5,435 1919,431 1919.5,425 1920,430 1920.5,435 1921,429 1921.5,430 1922,428 1922.5,429 1923,423 1923.5,414 1924,425 1924.5,426 1925,429 1925.5,428 1926,427 1926.5,434 1927,435 1927.5,431 1928,426 1928.5,423 1929,414 1929.5,408 1930,410 1930.5,417 1931,426 1931.5,427 1932,421 1932.5,418 1933,423 1933.5,425 1934,425 1934.5,430 1935,425 1935.5,433 1936,421 1936.5,432 1937,441 1937.5,434 1938,431 1938.5,426 1939,429 1939.5,422 1940,416 1940.5,415 1941,431 1941.5,430 1942,428 1942.5,435 1943,424 1943.5,428 1944,421 1944.5,427 1945,429 1945.5,427 1946,436 1946.5,433 1947,423 1947.5,417 1948,428 1948.5,428 1949,431 1949.5,437 1950,436 1950.5,422 1951,428 1951.5,431 1952,421 1952.5,416 1953,423 1953.5,429 1954,426 1954.5,423 1955,428 1955.5,432 1956,441 1956.5,422 1957,431 1957.5,427 1958,424 1958.5,428 1959,429 1959.5,433 1960,430 1960.5,422 1961,425 1961.5,430 1962,428 1962.5,429 1963,430 1963.5,424 1964,415 1964.5,423 1965,435 1965.5,420 1966,419 1966.5,429 1967,439 1967.5,433 1968,443 1968.5,431 1969,434 1969.5,428 1970,422 1970.5,426 1971,422 1971.5,424 1972,436 1972.5,439 1973,430 1973.5,430 1974,433 1974.5,435 1975,438 1975.5,441 1976,438 1976.5,439 1977,439 1977.5,430 1978,418 1978.5,419 1979,424 1979.5,436 1980,441 1980.5,434 1981,430 1981.5,428 1982,428 1982.5,431 1983,429 1983.5,424 1984,425 1984.5,426 1985,431 1985.5,422 1986,432 1986.5,429 1987,422 1987.5,428 1988,427 1988.5,430 1989,426 1989.5,429 1990,422 1990.5,428 1991,429 1991.5,426 1992,426 1992.5,425 1993,420 1993.5,424 1994,421 1994.5,427 1995,432 1995.5,436 1996,428 1996.5,430 1997,436 1997.5,430 1998,426 1998.5,429 1999,422 1999.5,423 2000,425 2000.5,424 2001,425 2001.5,424 2002,438 2002.5,439 2003,436 2003.5,436 2004,443 2004.5,442 2005,443 2005.5,437 2006,430 2006.5,434 2007,439 2007.5,436 2008,427 2008.5,427 2009,438 2009.5,436 2010,429 2010.5,435 2011,433 2011.5,426 2012,427 2012.5,428 2013,418 2013.5,418 2014,426 2014.5,433 2015,433 2015.5,435 2016,438 2016.5,444 2017,444 2017.5,435 2018,417 2018.5,418 2019,427 2019.5,428 2020,433 2020.5,442 2021,429 2021.5,428 2022,430 2022.5,421 2023,435 2023.5,431 2024,432 2024.5,426 2025,427 2025.5,436 2026,438 2026.5,433 2027,434 2027.5,445 2028,446 2028.5,444 2029,438 2029.5,435 2030,438 2030.5,437 2031,432 2031.5,437 2032,429 2032.5,432 2033,431 2033.5,427 2034,429 2034.5,433 2035,429 2035.5,426 2036,426 2036.5,425 2037,426 2037.5,428 2038,437 2038.5,433 2039,432 2039.5,432 2040,418 2040.5,427 2041,420 2041.5,422 2042,421 2042.5,427 2043,428 2043.5,430 2044,429 2044.5,433 2045,445 2045.5,435 2046,434 2046.5,431 2047,436 2047.5,434 2048,432 2048.5,428 2049,440 2049.5,433 2050,439 2050.5,428 2051,430 2051.5,434 2052,428 2052.5,433 2053,435 2053.5,425 2054,437 2054.5,438 2055,433 2055.5,428 2056,425 2056.5,435 2057,428 2057.5,430 2058,431 2058.5,434 2059,434 2059.5,438 2060,433 2060.5,419 2061,417 2061.5,426 2062,431 2062.5,432 2063,440 2063.5,432 2064,437 2064.5,446 2065,443 2065.5,442 2066,437 2066.5,442 2067,427 2067.5,434 2068,433 2068.5,431 2069,426 2069.5,433 2070,440 2070.5,439 2071,432 2071.5,434 2072,428 2072.5,432 2073,427 2073.5,420 2074,424 2074.5,437 2075,422 2075.5,424 2076,423 2076.5,431 2077,441 2077.5,431 2078,425 2078.5,429 2079,430 2079.5,426 2080,431 2080.5,428 2081,432 2081.5,439 2082,441 2082.5,436 2083,434 2083.5,436 2084,428 2084.5,431 2085,422 2085.5,428 2086,433 2086.5,432 2087,428 2087.5,432 2088,425 2088.5,429 2089,429 2089.5,414 2090,426 2090.5,428 2091,431 2091.5,430 2092,424 2092.5,425 2093,428 2093.5,431 2094,430 2094.5,427 2095,436 2095.5,434 2096,431 2096.5,425 2097,431 2097.5,427 2098,435 2098.5,433 2099,434 2099.5,423 2100,431 2100.5,432 2101,433 2101.5,425 2102,419 2102.5,432 2103,425 2103.5,440 2104,437 2104.5,432 2105,432 2105.5,425 2106,427 2106.5,436 2107,438 2107.5,430 2108,431 2108.5,438 2109,441 2109.5,434 2110,436 2110.5,433 2111,444 2111.5,445 2112,434 2112.5,431 2113,433 2113.5,437 2114,431 2114.5,427 2115,419 2115.5,429 2116,425 2116.5,431 2117,430 2117.5,432 2118,435 2118.5,431 2119,443 2119.5,436 2120,431 2120.5,432 2121,424 2121.5,436 2122,440 2122.5,439 2123,427 2123.5,430 2124,428 2124.5,432 2125,436 2125.5,429 2126,417 2126.5,426 2127,423 2127.5,420 2128,427 2128.5,428 2129,438 2129.5,434 2130,441 2130.5,443 2131,437 2131.5,431 2132,431 2132.5,439 2133,415 2133.5,430 2134,430 2134.5,435 2135,440 2135.5,447 2136,439 2136.5,435 2137,438 2137.5,443 2138,439 2138.5,435 2139,438 2139.5,429 2140,424 2140.5,437 2141,435 2141.5,430 2142,429 2142.5,435 2143,427 2143.5,420 2144,421 2144.5,424 2145,427 2145.5,428 2146,428 2146.5,432 2147,437 2147.5,436 2148,440 2148.5,434 2149,435 2149.5,430 2150,440 2150.5,434 2151,432 2151.5,430 2152,438 2152.5,433 2153,429 2153.5,431 2154,432 2154.5,430 2155,432 2155.5,443 2156,435 2156.5,438 2157,437 2157.5,442 2158,449 2158.5,447 2159,431 2159.5,432 2160,433 2160.5,433 2161,441 2161.5,439 2162,440 2162.5,440 2163,432 2163.5,433 2164,435 2164.5,432 2165,434 2165.5,427 2166,430 2166.5,432 2167,430 2167.5,435 2168,435 2168.5,436 2169,441 2169.5,429 2170,434 2170.5,431 2171,434 2171.5,440 2172,435 2172.5,430 2173,434 2173.5,433 2174,434 2174.5,424 2175,428 2175.5,433 2176,432 2176.5,452 2177,442 2177.5,438 2178,441 2178.5,443 2179,423 2179.5,418 2180,427 2180.5,431 2181,426 2181.5,431 2182,433 2182.5,435 2183,437 2183.5,435 2184,424 2184.5,422 2185,423 2185.5,426 2186,431 2186.5,424 2187,429 2187.5,438 2188,445 2188.5,436 2189,428 2189.5,427 2190,431 2190.5,437 2191,445 2191.5,439 2192,438 2192.5,444 2193,444 2193.5,439 2194,442 2194.5,436 2195,434 2195.5,436 2196,432 2196.5,437 2197,438 2197.5,436 2198,431 2198.5,439 2199,437 2199.5,438 2200,439 2200.5,444 2201,443 2201.5,448 2202,441 2202.5,434 2203,426 2203.5,434 2204,434 2204.5,440 2205,437 2205.5,427 2206,428 2206.5,435 2207,439 2207.5,445 2208,443 2208.5,446 2209,442 2209.5,443 2210,446 2210.5,442 2211,433 2211.5,437 2212,439 2212.5,440 2213,439 2213.5,434 2214,437 2214.5,438 2215,439 2215.5,431 2216,431 2216.5,441 2217,446 2217.5,441 2218,435 2218.5,437 2219,433 2219.5,434 2220,437 2220.5,432 2221,419 2221.5,422 2222,429 2222.5,434 2223,431 2223.5,428 2224,433 2224.5,430 2225,425 2225.5,433 2226,432 2226.5,433 2227,437 2227.5,437 2228,438 2228.5,428 2229,432 L2229,720 L0,720 Z"/></defs>
<use href="#sf" fill="#333333"/>
<g clip-path="url(#pb)"><use href="#sf" fill="#484848"/></g>
<path d="M154.5,33V720M202.5,33V720M250.5,33V720M298.5,33V720M346.5,33V720M394.5,33V720M442.5,33V720M490.5,33V720M538.5,33V720M586.5,33V720M634.5,33V720M682.5,33V720M730.5,33V720M778.5,33V720M826.5,33V720M874.5,33V720M922.5,33V720M970.5,33V720M1018.5,33V720M1066.5,33V720M1114.5,33V720M1163.5,33V720M1211.5,33V720M1259.5,33V720M1307.5,33V720M1355.5,33V720M1403.5,33V720M1451.5,33V720M1499.5,33V720M1547.5,33V720M1595.5,33V720M1643.5,33V720M1691.5,33V720M1739.5,33V720M1787.5,33V720M1835.5,33V720M1883.5,33V720M1931.5,33V720M1979.5,33V720M2027.5,33V720M2076.5,33V720M2124.5,33V720M2172.5,33V720M2220.5,33V720" stroke="#fff" stroke-opacity="0.05" stroke-width="1"/>
<path d="M0,33.5H2229M0,66.5H2229M0,99.5H2229M0,131.5H2229M0,164.5H2229M0,197.5H2229M0,229.5H2229M0,262.5H2229M0,295.5H2229M0,327.5H2229M0,360.5H2229M0,393.5H2229M0,425.5H2229M0,458.5H2229M0,491.5H2229M0,523.5H2229M0,556.5H2229M0,589.5H2229M0,622.5H2229M0,654.5H2229M0,687.5H2229" stroke="#fff" stroke-opacity="0.13" stroke-width="1"/>
<path d="M0,437 0.5,439 1,439 1.5,438 2,440 2.5,445 3,437 3.5,439 4,439 4.5,434 5,430 5.5,433 6,428 6.5,428 7,423 7.5,424 8,424 8.5,432 9,438 9.5,428 10,428 10.5,426 11,419 11.5,424 12,415 12.5,428 13,431 13.5,434 14,437 14.5,434 15,430 15.5,428 16,438 16.5,439 17,442 17.5,438 18,440 18.5,431 19,430 19.5,421 20,429 20.5,429 21,433 21.5,433 22,423 22.5,432 23,436 23.5,422 24,427 24.5,433 25,434 25.5,433 26,434 26.5,428 27,433 27.5,430 28,441 28.5,430 29,428 29.5,423 30,440 30.5,440 31,435 31.5,438 32,427 32.5,429 33,435 33.5,425 34,437 34.5,422 35,433 35.5,435 36,429 36.5,419 37,430 37.5,434 38,431 38.5,426 39,434 39.5,431 40,441 40.5,439 41,441 41.5,426 42,434 42.5,439 43,434 43.5,429 44,428 44.5,423 45,416 45.5,418 46,418 46.5,425 47,419 47.5,419 48,426 48.5,430 49,422 49.5,433 50,441 50.5,449 51,441 51.5,441 52,439 52.5,434 53,433 53.5,427 54,429 54.5,432 55,428 55.5,434 56,436 56.5,429 57,433 57.5,439 58,434 58.5,438 59,441 59.5,440 60,439 60.5,437 61,443 61.5,438 62,424 62.5,433 63,432 63.5,434 64,437 64.5,434 65,426 65.5,430 66,435 66.5,436 67,429 67.5,435 68,439 68.5,434 69,448 69.5,442 70,439 70.5,436 71,438 71.5,437 72,432 72.5,425 73,431 73.5,439 74,440 74.5,431 75,437 75.5,428 76,424 76.5,425 77,432 77.5,427 78,424 78.5,429 79,430 79.5,436 80,437 80.5,444 81,439 81.5,428 82,429 82.5,439 83,436 83.5,442 84,434 84.5,434 85,431 85.5,431 86,420 86.5,429 87,437 87.5,432 88,427 88.5,425 89,418 89.5,431 90,434 90.5,434 91,442 91.5,435 92,445 92.5,443 93,438 93.5,447 94,446 94.5,448 95,433 95.5,430 96,434 96.5,426 97,433 97.5,433 98,419 98.5,421 99,428 99.5,441 100,448 100.5,442 101,440 101.5,441 102,432 102.5,435 103,435 103.5,434 104,425 104.5,432 105,435 105.5,432 106,421 106.5,425 107,424 107.5,427 108,435 108.5,431 109,426 109.5,432 110,429 110.5,434 111,432 111.5,431 112,430 112.5,438 113,432 113.5,445 114,440 114.5,432 115,421 115.5,427 116,426 116.5,422 117,426 117.5,432 118,444 118.5,442 119,426 119.5,430 120,432 120.5,437 121,416 121.5,425 122,426 122.5,431 123,431 123.5,440 124,435 124.5,424 125,429 125.5,428 126,429 126.5,422 127,426 127.5,437 128,438 128.5,432 129,423 129.5,430 130,431 130.5,429 131,436 131.5,433 132,423 132.5,424 133,434 133.5,441 134,438 134.5,447 135,440 135.5,440 136,437 136.5,429 137,424 137.5,424 138,433 138.5,436 139,430 139.5,439 140,445 140.5,438 141,426 141.5,430 142,444 142.5,437 143,435 143.5,433 144,430 144.5,433 145,428 145.5,430 146,435 146.5,427 147,433 147.5,430 148,426 148.5,440 149,434 149.5,420 150,433 150.5,434 151,429 151.5,421 152,422 152.5,423 153,430 153.5,430 154,418 154.5,434 155,433 155.5,439 156,433 156.5,438 157,432 157.5,435 158,436 158.5,433 159,431 159.5,436 160,431 160.5,428 161,420 161.5,430 162,425 162.5,427 163,429 163.5,429 164,434 164.5,432 165,439 165.5,422 166,423 166.5,426 167,436 167.5,435 168,443 168.5,435 169,431 169.5,431 170,433 170.5,422 171,423 171.5,422 172,423 172.5,437 173,439 173.5,435 174,427 174.5,427 175,436 175.5,429 176,429 176.5,425 177,426 177.5,418 178,431 178.5,427 179,423 179.5,425 180,432 180.5,426 181,429 181.5,435 182,430 182.5,430 183,432 183.5,431 184,430 184.5,426 185,425 185.5,429 186,409 186.5,420 187,425 187.5,429 188,421 188.5,421 189,428 189.5,436 190,435 190.5,446 191,434 191.5,435 192,426 192.5,427 193,418 193.5,416 194,429 194.5,421 195,427 195.5,428 196,422 196.5,429 197,421 197.5,430 198,430 198.5,431 199,425 199.5,424 200,433 200.5,429 201,442 201.5,449 202,435 202.5,435 203,439 203.5,445 204,428 204.5,409 205,423 205.5,426 206,439 206.5,443 207,442 207.5,428 208,425 208.5,433 209,430 209.5,440 210,442 210.5,436 211,425 211.5,429 212,420 212.5,426 213,431 213.5,432 214,420 214.5,426 215,426 215.5,440 216,443 216.5,445 217,432 217.5,428 218,428 218.5,420 219,419 219.5,419 220,420 220.5,418 221,411 221.5,409 222,412 222.5,417 223,413 223.5,425 224,422 224.5,423 225,420 225.5,423 226,433 226.5,430 227,426 227.5,418 228,428 228.5,422 229,435 229.5,433 230,431 230.5,425 231,435 231.5,431 232,431 232.5,420 233,424 233.5,425 234,417 234.5,428 235,424 235.5,431 236,419 236.5,433 237,431 237.5,425 238,424 238.5,421 239,412 239.5,421 240,426 240.5,423 241,421 241.5,421 242,415 242.5,419 243,421 243.5,420 244,427 244.5,431 245,430 245.5,429 246,430 246.5,425 247,426 247.5,426 248,416 248.5,421 249,424 249.5,422 250,429 250.5,425 251,429 251.5,437 252,432 252.5,430 253,432 253.5,426 254,429 254.5,428 255,428 255.5,423 256,421 256.5,418 257,419 257.5,424 258,427 258.5,423 259,417 259.5,426 260,432 260.5,429 261,429 261.5,422 262,425 262.5,422 263,426 263.5,424 264,427 264.5,434 265,433 265.5,428 266,421 266.5,422 267,420 267.5,437 268,434 268.5,430 269,426 269.5,428 270,425 270.5,434 271,426 271.5,432 272,424 272.5,432 273,427 273.5,427 274,433 274.5,437 275,428 275.5,429 276,424 276.5,430 277,425 277.5,420 278,423 278.5,422 279,414 279.5,415 280,425 280.5,422 281,417 281.5,416 282,420 282.5,427 283,423 283.5,428 284,434 284.5,437 285,440 285.5,435 286,433 286.5,429 287,434 287.5,420 288,425 288.5,428 289,425 289.5,426 290,429 290.5,436 291,431 291.5,431 292,430 292.5,435 293,428 293.5,421 294,425 294.5,415 295,428 295.5,432 296,436 296.5,436 297,435 297.5,437 298,431 298.5,436 299,431 299.5,433 300,433 300.5,434 301,431 301.5,436 302,443 302.5,443 303,436 303.5,438 304,441 304.5,440 305,436 305.5,437 306,439 306.5,436 307,424 307.5,434 308,431 308.5,434 309,430 309.5,435 310,437 310.5,425 311,430 311.5,434 312,428 312.5,412 313,428 313.5,438 314,439 314.5,435 315,432 315.5,422 316,420 316.5,429 317,429 317.5,429 318,433 318.5,441 319,441 319.5,437 320,432 320.5,425 321,432 321.5,433 322,437 322.5,440 323,444 323.5,441 324,435 324.5,428 325,433 325.5,421 326,423 326.5,424 327,429 327.5,429 328,429 328.5,428 329,421 329.5,424 330,434 330.5,427 331,434 331.5,430 332,427 332.5,426 333,428 333.5,430 334,431 334.5,433 335,426 335.5,434 336,428 336.5,431 337,428 337.5,428 338,434 338.5,445 339,434 339.5,426 340,430 340.5,431 341,426 341.5,432 342,422 342.5,415 343,421 343.5,422 344,424 344.5,424 345,428 345.5,423 346,425 346.5,428 347,434 347.5,428 348,429 348.5,425 349,432 349.5,427 350,425 350.5,421 351,415 351.5,418 352,422 352.5,432 353,427 353.5,428 354,417 354.5,421 355,427 355.5,429 356,420 356.5,417 357,420 357.5,426 358,425 358.5,419 359,421 359.5,427 360,425 360.5,419 361,427 361.5,433 362,430 362.5,430 363,429 363.5,425 364,411 364.5,431 365,432 365.5,425 366,426 366.5,422 367,425 367.5,429 368,437 368.5,438 369,432 369.5,433 370,438 370.5,428 371,428 371.5,432 372,427 372.5,426 373,428 373.5,429 374,422 374.5,420 375,419 375.5,413 376,424 376.5,423 377,423 377.5,430 378,423 378.5,431 379,426 379.5,424 380,429 380.5,431 381,437 381.5,429 382,431 382.5,430 383,434 383.5,435 384,424 384.5,425 385,421 385.5,415 386,415 386.5,422 387,415 387.5,420 388,427 388.5,432 389,423 389.5,429 390,427 390.5,422 391,418 391.5,424 392,436 392.5,436 393,421 393.5,431 394,426 394.5,420 395,427 395.5,425 396,424 396.5,422 397,423 397.5,427 398,428 398.5,434 399,435 399.5,434 400,441 400.5,432 401,425 401.5,418 402,411 402.5,422 403,425 403.5,419 404,426 404.5,413 405,424 405.5,424 406,424 406.5,424 407,418 407.5,417 408,421 408.5,419 409,413 409.5,426 410,420 410.5,418 411,419 411.5,422 412,415 412.5,413 413,418 413.5,419 414,426 414.5,426 415,420 415.5,422 416,431 416.5,430 417,418 417.5,425 418,422 418.5,425 419,424 419.5,423 420,423 420.5,421 421,422 421.5,428 422,428 422.5,428 423,431 423.5,427 424,428 424.5,426 425,427 425.5,432 426,435 426.5,429 427,428 427.5,421 428,420 428.5,419 429,423 429.5,419 430,419 430.5,422 431,427 431.5,429 432,422 432.5,420 433,428 433.5,424 434,411 434.5,419 435,417 435.5,417 436,425 436.5,416 437,420 437.5,429 438,435 438.5,421 439,423 439.5,422 440,424 440.5,419 441,430 441.5,422 442,426 442.5,424 443,428 443.5,418 444,427 444.5,425 445,420 445.5,421 446,418 446.5,422 447,416 447.5,415 448,409 448.5,411 449,410 449.5,421 450,424 450.5,423 451,427 451.5,426 452,426 452.5,427 453,429 453.5,421 454,419 454.5,427 455,431 455.5,426 456,422 456.5,423 457,419 457.5,428 458,423 458.5,422 459,413 459.5,421 460,417 460.5,425 461,420 461.5,423 462,426 462.5,425 463,425 463.5,417 464,413 464.5,419 465,418 465.5,423 466,419 466.5,427 467,416 467.5,426 468,424 468.5,412 469,413 469.5,417 470,419 470.5,423 471,434 471.5,431 472,414 472.5,439 473,428 473.5,426 474,430 474.5,422 475,425 475.5,419 476,425 476.5,426 477,417 477.5,420 478,431 478.5,436 479,435 479.5,428 480,423 480.5,421 481,429 481.5,436 482,431 482.5,428 483,433 483.5,436 484,440 484.5,424 485,433 485.5,431 486,415 486.5,436 487,431 487.5,435 488,424 488.5,428 489,429 489.5,421 490,426 490.5,427 491,412 491.5,418 492,406 492.5,409 493,421 493.5,424 494,423 494.5,421 495,424 495.5,430 496,426 496.5,431 497,427 497.5,427 498,425 498.5,419 499,424 499.5,419 500,419 500.5,431 501,420 501.5,424 502,421 502.5,417 503,414 503.5,408 504,416 504.5,416 505,421 505.5,416 506,422 506.5,417 507,411 507.5,412 508,422 508.5,423 509,422 509.5,418 510,430 510.5,418 511,423 511.5,423 512,428 512.5,428 513,428 513.5,423 514,417 514.5,420 515,424 515.5,407 516,420 516.5,422 517,423 517.5,415 518,418 518.5,415 519,419 519.5,417 520,412 520.5,407 521,416 521.5,407 522,411 522.5,414 523,420 523.5,430 524,424 524.5,431 525,423 525.5,424 526,423 526.5,428 527,421 527.5,426 528,421 528.5,416 529,411 529.5,413 530,419 530.5,423 531,420 531.5,416 532,411 532.5,425 533,421 533.5,427 534,428 534.5,421 535,424 535.5,420 536,418 536.5,430 537,424 537.5,423 538,428 538.5,424 539,418 539.5,427 540,418 540.5,420 541,415 541.5,423 542,419 542.5,424 543,421 543.5,424 544,434 544.5,431 545,436 545.5,426 546,424 546.5,417 547,421 547.5,420 548,425 548.5,427 549,433 549.5,429 550,424 550.5,422 551,428 551.5,428 552,428 552.5,421 553,424 553.5,417 554,429 554.5,428 555,425 555.5,428 556,420 556.5,423 557,423 557.5,413 558,412 558.5,419 559,422 559.5,415 560,421 560.5,426 561,425 561.5,424 562,416 562.5,411 563,421 563.5,434 564,426 564.5,421 565,415 565.5,422 566,419 566.5,417 567,418 567.5,417 568,420 568.5,418 569,425 569.5,412 570,417 570.5,415 571,401 571.5,416 572,422 572.5,425 573,417 573.5,422 574,424 574.5,429 575,423 575.5,421 576,418 576.5,423 577,420 577.5,418 578,419 578.5,422 579,423 579.5,417 580,415 580.5,422 581,421 581.5,417 582,409 582.5,424 583,416 583.5,420 584,411 584.5,418 585,417 585.5,417 586,411 586.5,411 587,421 587.5,413 588,414 588.5,420 589,412 589.5,421 590,428 590.5,426 591,432 591.5,431 592,430 592.5,429 593,433 593.5,438 594,424 594.5,425 595,423 595.5,417 596,416 596.5,414 597,420 597.5,429 598,427 598.5,416 599,415 599.5,406 600,403 600.5,408 601,418 601.5,429 602,423 602.5,425 603,425 603.5,416 604,415 604.5,407 605,404 605.5,405 606,405 606.5,418 607,416 607.5,411 608,418 608.5,405 609,417 609.5,403 610,419 610.5,421 611,423 611.5,428 612,430 612.5,421 613,414 613.5,415 614,418 614.5,411 615,414 615.5,404 616,410 616.5,418 617,420 617.5,421 618,422 618.5,414 619,424 619.5,428 620,424 620.5,418 621,408 621.5,413 622,419 622.5,420 623,425 623.5,418 624,421 624.5,422 625,416 625.5,419 626,419 626.5,422 627,417 627.5,414 628,407 628.5,402 629,412 629.5,412 630,423 630.5,422 631,432 631.5,432 632,432 632.5,420 633,424 633.5,423 634,418 634.5,413 635,413 635.5,432 636,432 636.5,419 637,428 637.5,425 638,422 638.5,419 639,411 639.5,431 640,436 640.5,429 641,406 641.5,416 642,413 642.5,418 643,412 643.5,425 644,424 644.5,428 645,425 645.5,428 646,424 646.5,431 647,417 647.5,419 648,413 648.5,417 649,408 649.5,403 650,409 650.5,409 651,426 651.5,419 652,423 652.5,425 653,419 653.5,420 654,417 654.5,416 655,409 655.5,408 656,410 656.5,419 657,425 657.5,419 658,416 658.5,420 659,419 659.5,404 660,413 660.5,407 661,414 661.5,420 662,414 662.5,411 663,406 663.5,419 664,418 664.5,415 665,422 665.5,422 666,419 666.5,421 667,414 667.5,417 668,417 668.5,414 669,418 669.5,423 670,410 670.5,432 671,423 671.5,427 672,426 672.5,428 673,428 673.5,427 674,424 674.5,412 675,416 675.5,418 676,422 676.5,426 677,425 677.5,420 678,428 678.5,415 679,426 679.5,427 680,426 680.5,421 681,424 681.5,430 682,437 682.5,431 683,427 683.5,418 684,419 684.5,427 685,414 685.5,415 686,410 686.5,416 687,421 687.5,413 688,415 688.5,423 689,420 689.5,417 690,438 690.5,443 691,435 691.5,429 692,425 692.5,428 693,421 693.5,430 694,431 694.5,425 695,429 695.5,430 696,416 696.5,416 697,409 697.5,432 698,429 698.5,418 699,421 699.5,415 700,416 700.5,414 701,413 701.5,420 702,424 702.5,423 703,422 703.5,413 704,414 704.5,421 705,426 705.5,431 706,417 706.5,421 707,420 707.5,420 708,417 708.5,412 709,414 709.5,420 710,409 710.5,407 711,420 711.5,429 712,416 712.5,418 713,414 713.5,416 714,417 714.5,396 715,405 715.5,417 716,420 716.5,420 717,424 717.5,431 718,430 718.5,422 719,428 719.5,420 720,417 720.5,426 721,419 721.5,413 722,422 722.5,418 723,420 723.5,422 724,427 724.5,415 725,423 725.5,424 726,414 726.5,412 727,413 727.5,416 728,427 728.5,424 729,420 729.5,413 730,416 730.5,417 731,421 731.5,411 732,416 732.5,414 733,412 733.5,413 734,416 734.5,420 735,419 735.5,427 736,431 736.5,426 737,419 737.5,426 738,424 738.5,421 739,408 739.5,413 740,420 740.5,415 741,415 741.5,419 742,419 742.5,414 743,409 743.5,416 744,415 744.5,407 745,418 745.5,421 746,421 746.5,429 747,413 747.5,425 748,420 748.5,414 749,420 749.5,416 750,422 750.5,416 751,407 751.5,414 752,415 752.5,405 753,412 753.5,414 754,416 754.5,412 755,418 755.5,423 756,420 756.5,426 757,425 757.5,418 758,411 758.5,416 759,412 759.5,415 760,409 760.5,409 761,414 761.5,410 762,412 762.5,401 763,411 763.5,418 764,414 764.5,415 765,425 765.5,410 766,401 766.5,407 767,409 767.5,418 768,420 768.5,423 769,411 769.5,409 770,418 770.5,409 771,406 771.5,401 772,397 772.5,403 773,413 773.5,419 774,418 774.5,420 775,422 775.5,422 776,424 776.5,426 777,421 777.5,419 778,421 778.5,405 779,414 779.5,410 780,395 780.5,406 781,409 781.5,418 782,404 782.5,416 783,411 783.5,411 784,415 784.5,414 785,415 785.5,412 786,411 786.5,417 787,413 787.5,417 788,415 788.5,412 789,414 789.5,412 790,415 790.5,404 791,405 791.5,407 792,400 792.5,414 793,405 793.5,399 794,411 794.5,419 795,417 795.5,418 796,431 796.5,421 797,422 797.5,422 798,421 798.5,416 799,413 799.5,411 800,412 800.5,406 801,399 801.5,417 802,411 802.5,410 803,417 803.5,412 804,400 804.5,415 805,414 805.5,415 806,422 806.5,427 807,419 807.5,418 808,420 808.5,415 809,425 809.5,426 810,430 810.5,432 811,426 811.5,414 812,412 812.5,415 813,423 813.5,421 814,425 814.5,432 815,426 815.5,422 816,421 816.5,429 817,431 817.5,431 818,435 818.5,424 819,432 819.5,425 820,419 820.5,426 821,414 821.5,417 822,416 822.5,414 823,420 823.5,423 824,413 824.5,412 825,414 825.5,414 826,417 826.5,420 827,413 827.5,423 828,416 828.5,420 829,417 829.5,416 830,421 830.5,412 831,407 831.5,411 832,418 832.5,416 833,412 833.5,414 834,413 834.5,425 835,432 835.5,422 836,419 836.5,420 837,406 837.5,410 838,420 838.5,426 839,423 839.5,414 840,413 840.5,410 841,416 841.5,424 842,423 842.5,426 843,411 843.5,410 844,413 844.5,414 845,415 845.5,412 846,416 846.5,409 847,411 847.5,409 848,413 848.5,419 849,416 849.5,417 850,415 850.5,416 851,398 851.5,412 852,416 852.5,416 853,414 853.5,413 854,407 854.5,421 855,416 855.5,406 856,411 856.5,413 857,419 857.5,411 858,411 858.5,406 859,408 859.5,398 860,395 860.5,392 861,400 861.5,404 862,407 862.5,410 863,404 863.5,405 864,412 864.5,408 865,414 865.5,416 866,407 866.5,411 867,409 867.5,415 868,407 868.5,409 869,406 869.5,408 870,405 870.5,405 871,410 871.5,411 872,407 872.5,421 873,418 873.5,425 874,411 874.5,408 875,414 875.5,411 876,409 876.5,413 877,407 877.5,412 878,407 878.5,412 879,413 879.5,413 880,415 880.5,411 881,411 881.5,408 882,408 882.5,411 883,415 883.5,419 884,422 884.5,418 885,410 885.5,424 886,418 886.5,408 887,415 887.5,419 888,413 888.5,409 889,415 889.5,408 890,402 890.5,410 891,420 891.5,416 892,407 892.5,411 893,418 893.5,419 894,411 894.5,408 895,406 895.5,406 896,403 896.5,420 897,413 897.5,417 898,402 898.5,410 899,403 899.5,418 900,412 900.5,410 901,412 901.5,412 902,407 902.5,416 903,407 903.5,398 904,407 904.5,406 905,407 905.5,409 906,413 906.5,411 907,407 907.5,409 908,409 908.5,417 909,416 909.5,414 910,419 910.5,416 911,405 911.5,410 912,408 912.5,411 913,406 913.5,405 914,409 914.5,408 915,409 915.5,405 916,400 916.5,388 917,401 917.5,414 918,410 918.5,410 919,415 919.5,418 920,418 920.5,421 921,410 921.5,414 922,408 922.5,413 923,409 923.5,407 924,413 924.5,411 925,410 925.5,408 926,419 926.5,425 927,427 927.5,418 928,410 928.5,416 929,418 929.5,409 930,409 930.5,415 931,404 931.5,401 932,397 932.5,401 933,411 933.5,409 934,408 934.5,407 935,404 935.5,406 936,392 936.5,409 937,401 937.5,406 938,400 938.5,411 939,410 939.5,409 940,406 940.5,407 941,411 941.5,412 942,411 942.5,408 943,410 943.5,410 944,404 944.5,400 945,415 945.5,419 946,404 946.5,408 947,401 947.5,403 948,405 948.5,405 949,405 949.5,414 950,404 950.5,406 951,412 951.5,411 952,413 952.5,404 953,408 953.5,406 954,412 954.5,415 955,410 955.5,420 956,421 956.5,408 957,404 957.5,407 958,394 958.5,395 959,402 959.5,404 960,411 960.5,408 961,406 961.5,402 962,414 962.5,412 963,420 963.5,414 964,416 964.5,420 965,407 965.5,393 966,406 966.5,400 967,404 967.5,402 968,406 968.5,417 969,406 969.5,417 970,417 970.5,410 971,412 971.5,408 972,419 972.5,413 973,416 973.5,417 974,414 974.5,414 975,401 975.5,417 976,419 976.5,420 977,411 977.5,412 978,408 978.5,405 979,407 979.5,400 980,412 980.5,408 981,412 981.5,408 982,411 982.5,410 983,421 983.5,418 984,405 984.5,415 985,410 985.5,407 986,400 986.5,400 987,400 987.5,406 988,408 988.5,403 989,399 989.5,402 990,402 990.5,405 991,404 991.5,401 992,397 992.5,399 993,402 993.5,404 994,408 994.5,408 995,403 995.5,411 996,414 996.5,417 997,410 997.5,403 998,402 998.5,398 999,402 999.5,393 1000,410 1000.5,412 1001,414 1001.5,417 1002,397 1002.5,415 1003,410 1003.5,411 1004,405 1004.5,413 1005,419 1005.5,416 1006,410 1006.5,399 1007,409 1007.5,419 1008,409 1008.5,400 1009,402 1009.5,411 1010,413 1010.5,412 1011,387 1011.5,404 1012,405 1012.5,405 1013,383 1013.5,404 1014,401 1014.5,397 1015,401 1015.5,385 1016,403 1016.5,404 1017,413 1017.5,416 1018,408 1018.5,408 1019,412 1019.5,410 1020,400 1020.5,402 1021,411 1021.5,411 1022,401 1022.5,397 1023,397 1023.5,361 1024,402 1024.5,398 1025,403 1025.5,392 1026,410 1026.5,401 1027,393 1027.5,407 1028,410 1028.5,408 1029,390 1029.5,401 1030,400 1030.5,399 1031,399 1031.5,409 1032,406 1032.5,409 1033,408 1033.5,387 1034,416 1034.5,414 1035,413 1035.5,413 1036,409 1036.5,411 1037,405 1037.5,413 1038,393 1038.5,374 1039,408 1039.5,400 1040,405 1040.5,396 1041,400 1041.5,398 1042,414 1042.5,340 1043,414 1043.5,411 1044,407 1044.5,377 1045,408 1045.5,409 1046,406 1046.5,408 1047,381 1047.5,397 1048,398 1048.5,394 1049,393 1049.5,399 1050,405 1050.5,408 1051,402 1051.5,391 1052,402 1052.5,405 1053,394 1053.5,405 1054,405 1054.5,399 1055,389 1055.5,400 1056,354 1056.5,403 1057,405 1057.5,401 1058,399 1058.5,392 1059,395 1059.5,403 1060,398 1060.5,349 1061,394 1061.5,391 1062,395 1062.5,396 1063,396 1063.5,386 1064,389 1064.5,390 1065,360 1065.5,398 1066,321 1066.5,398 1067,403 1067.5,395 1068,398 1068.5,394 1069,388 1069.5,378 1070,386 1070.5,390 1071,383 1071.5,391 1072,390 1072.5,391 1073,390 1073.5,395 1074,372 1074.5,392 1075,390 1075.5,393 1076,398 1076.5,394 1077,389 1077.5,391 1078,391 1078.5,333 1079,386 1079.5,389 1080,406 1080.5,375 1081,309 1081.5,319 1082,375 1082.5,378 1083,348 1083.5,384 1084,391 1084.5,386 1085,389 1085.5,383 1086,379 1086.5,296 1087,377 1087.5,303 1088,391 1088.5,385 1089,389 1089.5,391 1090,336 1090.5,385 1091,379 1091.5,375 1092,270 1092.5,379 1093,377 1093.5,377 1094,372 1094.5,376 1095,288 1095.5,375 1096,382 1096.5,283 1097,370 1097.5,373 1098,373 1098.5,374 1099,364 1099.5,356 1100,252 1100.5,364 1101,300 1101.5,364 1102,355 1102.5,354 1103,361 1103.5,366 1104,374 1104.5,376 1105,246 1105.5,336 1106,375 1106.5,364 1107,362 1107.5,362 1108,312 1108.5,352 1109,361 1109.5,202 1110,278 1110.5,363 1111,356 1111.5,346 1112,334 1112.5,344 1113,173 1113.5,339 1114,45 1114.5,300 1115,149 1115.5,340 1116,346 1116.5,355 1117,313 1117.5,351 1118,198 1118.5,354 1119,263 1119.5,340 1120,344 1120.5,359 1121,233 1121.5,359 1122,355 1122.5,359 1123,363 1123.5,288 1124,280 1124.5,365 1125,210 1125.5,368 1126,368 1126.5,363 1127,370 1127.5,375 1128,331 1128.5,378 1129,377 1129.5,263 1130,375 1130.5,371 1131,348 1131.5,373 1132,376 1132.5,302 1133,368 1133.5,372 1134,376 1134.5,386 1135,374 1135.5,381 1136,372 1136.5,377 1137,358 1137.5,388 1138,388 1138.5,385 1139,266 1139.5,387 1140,392 1140.5,384 1141,388 1141.5,303 1142,384 1142.5,390 1143,377 1143.5,391 1144,381 1144.5,387 1145,389 1145.5,393 1146,338 1146.5,399 1147,399 1147.5,317 1148,398 1148.5,390 1149,395 1149.5,403 1150,409 1150.5,379 1151,394 1151.5,392 1152,387 1152.5,392 1153,309 1153.5,392 1154,394 1154.5,390 1155,339 1155.5,361 1156,386 1156.5,387 1157,330 1157.5,396 1158,385 1158.5,397 1159,402 1159.5,351 1160,393 1160.5,391 1161,399 1161.5,396 1162,390 1162.5,397 1163,398 1163.5,398 1164,345 1164.5,404 1165,396 1165.5,401 1166,399 1166.5,329 1167,396 1167.5,407 1168,400 1168.5,376 1169,396 1169.5,398 1170,405 1170.5,406 1171,400 1171.5,400 1172,399 1172.5,411 1173,364 1173.5,406 1174,357 1174.5,391 1175,393 1175.5,404 1176,400 1176.5,347 1177,393 1177.5,384 1178,391 1178.5,397 1179,398 1179.5,398 1180,399 1180.5,403 1181,404 1181.5,402 1182,384 1182.5,408 1183,405 1183.5,410 1184,415 1184.5,415 1185,413 1185.5,404 1186,404 1186.5,360 1187,410 1187.5,400 1188,396 1188.5,399 1189,405 1189.5,400 1190,405 1190.5,402 1191,361 1191.5,396 1192,400 1192.5,409 1193,413 1193.5,416 1194,414 1194.5,413 1195,416 1195.5,389 1196,403 1196.5,347 1197,408 1197.5,402 1198,405 1198.5,397 1199,393 1199.5,400 1200,398 1200.5,407 1201,404 1201.5,392 1202,404 1202.5,402 1203,402 1203.5,396 1204,393 1204.5,399 1205,401 1205.5,410 1206,404 1206.5,403 1207,410 1207.5,407 1208,403 1208.5,395 1209,386 1209.5,406 1210,407 1210.5,378 1211,415 1211.5,412 1212,409 1212.5,411 1213,416 1213.5,398 1214,400 1214.5,406 1215,408 1215.5,403 1216,412 1216.5,407 1217,411 1217.5,418 1218,401 1218.5,409 1219,411 1219.5,408 1220,402 1220.5,408 1221,404 1221.5,403 1222,402 1222.5,397 1223,400 1223.5,398 1224,400 1224.5,400 1225,400 1225.5,396 1226,413 1226.5,421 1227,394 1227.5,399 1228,412 1228.5,406 1229,402 1229.5,404 1230,398 1230.5,400 1231,404 1231.5,394 1232,402 1232.5,409 1233,398 1233.5,403 1234,413 1234.5,416 1235,408 1235.5,402 1236,402 1236.5,416 1237,408 1237.5,405 1238,406 1238.5,398 1239,403 1239.5,374 1240,409 1240.5,403 1241,401 1241.5,407 1242,412 1242.5,410 1243,408 1243.5,411 1244,412 1244.5,410 1245,407 1245.5,413 1246,411 1246.5,417 1247,415 1247.5,406 1248,402 1248.5,400 1249,405 1249.5,404 1250,404 1250.5,403 1251,409 1251.5,410 1252,415 1252.5,403 1253,401 1253.5,407 1254,402 1254.5,406 1255,413 1255.5,413 1256,414 1256.5,416 1257,413 1257.5,417 1258,413 1258.5,404 1259,409 1259.5,421 1260,417 1260.5,412 1261,408 1261.5,404 1262,411 1262.5,418 1263,406 1263.5,420 1264,418 1264.5,414 1265,407 1265.5,413 1266,420 1266.5,414 1267,407 1267.5,403 1268,404 1268.5,400 1269,405 1269.5,412 1270,418 1270.5,407 1271,412 1271.5,410 1272,409 1272.5,418 1273,403 1273.5,400 1274,408 1274.5,409 1275,411 1275.5,411 1276,405 1276.5,405 1277,405 1277.5,411 1278,410 1278.5,402 1279,405 1279.5,405 1280,411 1280.5,406 1281,402 1281.5,404 1282,400 1282.5,403 1283,406 1283.5,418 1284,409 1284.5,410 1285,408 1285.5,402 1286,419 1286.5,413 1287,399 1287.5,402 1288,418 1288.5,415 1289,405 1289.5,407 1290,406 1290.5,401 1291,404 1291.5,407 1292,406 1292.5,401 1293,406 1293.5,411 1294,410 1294.5,406 1295,408 1295.5,412 1296,410 1296.5,407 1297,409 1297.5,405 1298,407 1298.5,411 1299,406 1299.5,409 1300,412 1300.5,406 1301,403 1301.5,411 1302,409 1302.5,404 1303,408 1303.5,406 1304,409 1304.5,411 1305,409 1305.5,415 1306,415 1306.5,409 1307,411 1307.5,412 1308,411 1308.5,408 1309,399 1309.5,414 1310,408 1310.5,412 1311,417 1311.5,404 1312,407 1312.5,406 1313,407 1313.5,408 1314,409 1314.5,406 1315,403 1315.5,404 1316,394 1316.5,395 1317,407 1317.5,402 1318,403 1318.5,414 1319,415 1319.5,402 1320,407 1320.5,394 1321,398 1321.5,401 1322,396 1322.5,404 1323,407 1323.5,412 1324,413 1324.5,413 1325,413 1325.5,398 1326,393 1326.5,401 1327,407 1327.5,410 1328,405 1328.5,402 1329,406 1329.5,404 1330,403 1330.5,402 1331,405 1331.5,413 1332,404 1332.5,415 1333,420 1333.5,417 1334,414 1334.5,418 1335,411 1335.5,418 1336,417 1336.5,406 1337,414 1337.5,415 1338,413 1338.5,409 1339,407 1339.5,412 1340,405 1340.5,419 1341,411 1341.5,413 1342,408 1342.5,412 1343,407 1343.5,413 1344,410 1344.5,414 1345,418 1345.5,413 1346,415 1346.5,420 1347,418 1347.5,409 1348,408 1348.5,413 1349,402 1349.5,409 1350,416 1350.5,412 1351,406 1351.5,413 1352,408 1352.5,412 1353,411 1353.5,421 1354,408 1354.5,409 1355,410 1355.5,409 1356,411 1356.5,408 1357,412 1357.5,410 1358,417 1358.5,410 1359,402 1359.5,412 1360,419 1360.5,417 1361,417 1361.5,416 1362,413 1362.5,407 1363,417 1363.5,411 1364,414 1364.5,424 1365,419 1365.5,420 1366,417 1366.5,415 1367,414 1367.5,411 1368,394 1368.5,413 1369,421 1369.5,414 1370,408 1370.5,413 1371,406 1371.5,420 1372,426 1372.5,428 1373,433 1373.5,423 1374,422 1374.5,416 1375,408 1375.5,414 1376,413 1376.5,414 1377,413 1377.5,412 1378,415 1378.5,411 1379,411 1379.5,420 1380,424 1380.5,421 1381,432 1381.5,419 1382,413 1382.5,420 1383,416 1383.5,415 1384,408 1384.5,411 1385,413 1385.5,407 1386,413 1386.5,412 1387,399 1387.5,408 1388,421 1388.5,426 1389,420 1389.5,423 1390,412 1390.5,416 1391,422 1391.5,421 1392,416 1392.5,413 1393,408 1393.5,403 1394,396 1394.5,395 1395,402 1395.5,400 1396,401 1396.5,401 1397,405 1397.5,412 1398,415 1398.5,420 1399,415 1399.5,415 1400,420 1400.5,408 1401,409 1401.5,412 1402,419 1402.5,425 1403,418 1403.5,421 1404,408 1404.5,414 1405,410 1405.5,414 1406,416 1406.5,411 1407,416 1407.5,421 1408,425 1408.5,421 1409,417 1409.5,414 1410,414 1410.5,419 1411,421 1411.5,420 1412,414 1412.5,417 1413,411 1413.5,419 1414,418 1414.5,412 1415,416 1415.5,407 1416,411 1416.5,420 1417,417 1417.5,410 1418,406 1418.5,410 1419,416 1419.5,413 1420,415 1420.5,408 1421,411 1421.5,417 1422,415 1422.5,412 1423,416 1423.5,415 1424,409 1424.5,410 1425,409 1425.5,408 1426,416 1426.5,424 1427,420 1427.5,424 1428,416 1428.5,426 1429,419 1429.5,412 1430,407 1430.5,418 1431,412 1431.5,412 1432,405 1432.5,404 1433,405 1433.5,409 1434,405 1434.5,409 1435,418 1435.5,409 1436,412 1436.5,407 1437,415 1437.5,420 1438,425 1438.5,420 1439,421 1439.5,421 1440,409 1440.5,414 1441,410 1441.5,407 1442,411 1442.5,404 1443,410 1443.5,418 1444,404 1444.5,422 1445,417 1445.5,406 1446,406 1446.5,405 1447,412 1447.5,423 1448,418 1448.5,415 1449,424 1449.5,418 1450,416 1450.5,411 1451,404 1451.5,411 1452,406 1452.5,412 1453,423 1453.5,411 1454,418 1454.5,422 1455,419 1455.5,414 1456,420 1456.5,428 1457,412 1457.5,412 1458,414 1458.5,416 1459,412 1459.5,410 1460,417 1460.5,411 1461,411 1461.5,413 1462,411 1462.5,417 1463,410 1463.5,414 1464,416 1464.5,414 1465,416 1465.5,419 1466,417 1466.5,421 1467,420 1467.5,412 1468,414 1468.5,410 1469,412 1469.5,413 1470,423 1470.5,414 1471,410 1471.5,419 1472,420 1472.5,414 1473,410 1473.5,419 1474,425 1474.5,421 1475,416 1475.5,413 1476,407 1476.5,410 1477,407 1477.5,416 1478,421 1478.5,421 1479,417 1479.5,419 1480,422 1480.5,425 1481,427 1481.5,413 1482,416 1482.5,415 1483,423 1483.5,428 1484,416 1484.5,418 1485,413 1485.5,418 1486,412 1486.5,413 1487,421 1487.5,423 1488,417 1488.5,420 1489,431 1489.5,424 1490,418 1490.5,420 1491,424 1491.5,431 1492,427 1492.5,426 1493,421 1493.5,409 1494,411 1494.5,412 1495,414 1495.5,417 1496,413 1496.5,409 1497,404 1497.5,405 1498,416 1498.5,406 1499,401 1499.5,411 1500,416 1500.5,412 1501,413 1501.5,415 1502,411 1502.5,413 1503,413 1503.5,421 1504,412 1504.5,412 1505,422 1505.5,422 1506,425 1506.5,421 1507,418 1507.5,421 1508,418 1508.5,421 1509,407 1509.5,410 1510,402 1510.5,414 1511,413 1511.5,419 1512,430 1512.5,415 1513,409 1513.5,425 1514,429 1514.5,420 1515,422 1515.5,418 1516,408 1516.5,415 1517,417 1517.5,416 1518,416 1518.5,417 1519,421 1519.5,426 1520,413 1520.5,419 1521,412 1521.5,406 1522,408 1522.5,404 1523,415 1523.5,418 1524,421 1524.5,422 1525,418 1525.5,413 1526,413 1526.5,416 1527,417 1527.5,423 1528,416 1528.5,413 1529,423 1529.5,421 1530,422 1530.5,421 1531,411 1531.5,415 1532,416 1532.5,415 1533,412 1533.5,416 1534,415 1534.5,416 1535,420 1535.5,413 1536,411 1536.5,411 1537,414 1537.5,402 1538,407 1538.5,408 1539,413 1539.5,419 1540,422 1540.5,422 1541,419 1541.5,412 1542,416 1542.5,409 1543,418 1543.5,418 1544,407 1544.5,400 1545,407 1545.5,416 1546,419 1546.5,419 1547,416 1547.5,412 1548,421 1548.5,421 1549,416 1549.5,415 1550,428 1550.5,422 1551,425 1551.5,420 1552,420 1552.5,423 1553,426 1553.5,426 1554,430 1554.5,420 1555,414 1555.5,419 1556,425 1556.5,433 1557,424 1557.5,422 1558,426 1558.5,424 1559,416 1559.5,416 1560,408 1560.5,403 1561,398 1561.5,406 1562,410 1562.5,419 1563,422 1563.5,417 1564,427 1564.5,417 1565,412 1565.5,413 1566,407 1566.5,407 1567,405 1567.5,406 1568,415 1568.5,418 1569,417 1569.5,410 1570,422 1570.5,420 1571,417 1571.5,416 1572,415 1572.5,423 1573,416 1573.5,420 1574,416 1574.5,421 1575,424 1575.5,416 1576,421 1576.5,418 1577,425 1577.5,414 1578,418 1578.5,411 1579,414 1579.5,414 1580,422 1580.5,422 1581,421 1581.5,417 1582,417 1582.5,406 1583,412 1583.5,417 1584,414 1584.5,416 1585,412 1585.5,412 1586,411 1586.5,421 1587,425 1587.5,425 1588,429 1588.5,424 1589,425 1589.5,418 1590,410 1590.5,411 1591,422 1591.5,422 1592,416 1592.5,405 1593,411 1593.5,418 1594,422 1594.5,425 1595,422 1595.5,420 1596,422 1596.5,419 1597,427 1597.5,427 1598,424 1598.5,428 1599,430 1599.5,424 1600,423 1600.5,420 1601,427 1601.5,413 1602,414 1602.5,415 1603,412 1603.5,423 1604,419 1604.5,422 1605,419 1605.5,432 1606,422 1606.5,419 1607,411 1607.5,417 1608,415 1608.5,419 1609,412 1609.5,409 1610,415 1610.5,422 1611,431 1611.5,426 1612,428 1612.5,421 1613,418 1613.5,413 1614,409 1614.5,408 1615,406 1615.5,414 1616,422 1616.5,423 1617,409 1617.5,423 1618,420 1618.5,427 1619,429 1619.5,424 1620,421 1620.5,420 1621,419 1621.5,425 1622,420 1622.5,416 1623,412 1623.5,417 1624,424 1624.5,415 1625,415 1625.5,418 1626,422 1626.5,420 1627,422 1627.5,420 1628,423 1628.5,426 1629,422 1629.5,413 1630,426 1630.5,422 1631,417 1631.5,427 1632,429 1632.5,425 1633,416 1633.5,421 1634,418 1634.5,409 1635,404 1635.5,419 1636,413 1636.5,423 1637,422 1637.5,415 1638,422 1638.5,418 1639,415 1639.5,418 1640,416 1640.5,421 1641,424 1641.5,419 1642,422 1642.5,421 1643,427 1643.5,425 1644,416 1644.5,413 1645,410 1645.5,426 1646,427 1646.5,429 1647,436 1647.5,428 1648,419 1648.5,415 1649,424 1649.5,423 1650,433 1650.5,425 1651,424 1651.5,432 1652,424 1652.5,416 1653,417 1653.5,423 1654,433 1654.5,430 1655,428 1655.5,434 1656,429 1656.5,419 1657,429 1657.5,425 1658,438 1658.5,437 1659,422 1659.5,426 1660,421 1660.5,421 1661,419 1661.5,408 1662,418 1662.5,424 1663,418 1663.5,414 1664,425 1664.5,423 1665,431 1665.5,431 1666,430 1666.5,419 1667,417 1667.5,420 1668,431 1668.5,430 1669,422 1669.5,427 1670,415 1670.5,409 1671,414 1671.5,419 1672,427 1672.5,435 1673,436 1673.5,432 1674,428 1674.5,418 1675,423 1675.5,429 1676,429 1676.5,415 1677,425 1677.5,424 1678,427 1678.5,430 1679,425 1679.5,407 1680,414 1680.5,413 1681,414 1681.5,421 1682,421 1682.5,423 1683,420 1683.5,410 1684,416 1684.5,420 1685,424 1685.5,429 1686,432 1686.5,420 1687,420 1687.5,416 1688,414 1688.5,426 1689,415 1689.5,421 1690,430 1690.5,426 1691,433 1691.5,431 1692,433 1692.5,431 1693,430 1693.5,429 1694,419 1694.5,419 1695,418 1695.5,429 1696,422 1696.5,425 1697,427 1697.5,421 1698,423 1698.5,432 1699,420 1699.5,418 1700,422 1700.5,412 1701,421 1701.5,424 1702,424 1702.5,423 1703,424 1703.5,412 1704,415 1704.5,412 1705,422 1705.5,422 1706,416 1706.5,423 1707,424 1707.5,423 1708,422 1708.5,418 1709,419 1709.5,415 1710,418 1710.5,411 1711,422 1711.5,439 1712,434 1712.5,426 1713,427 1713.5,426 1714,428 1714.5,426 1715,425 1715.5,424 1716,427 1716.5,426 1717,426 1717.5,429 1718,424 1718.5,414 1719,418 1719.5,422 1720,432 1720.5,419 1721,431 1721.5,419 1722,425 1722.5,420 1723,421 1723.5,417 1724,432 1724.5,431 1725,425 1725.5,415 1726,421 1726.5,419 1727,426 1727.5,420 1728,423 1728.5,424 1729,413 1729.5,411 1730,421 1730.5,407 1731,423 1731.5,424 1732,419 1732.5,423 1733,427 1733.5,429 1734,417 1734.5,422 1735,427 1735.5,422 1736,425 1736.5,423 1737,419 1737.5,424 1738,424 1738.5,422 1739,419 1739.5,414 1740,407 1740.5,418 1741,408 1741.5,413 1742,419 1742.5,419 1743,415 1743.5,426 1744,425 1744.5,434 1745,424 1745.5,425 1746,421 1746.5,426 1747,427 1747.5,431 1748,428 1748.5,424 1749,424 1749.5,432 1750,430 1750.5,428 1751,427 1751.5,425 1752,424 1752.5,422 1753,423 1753.5,427 1754,424 1754.5,424 1755,424 1755.5,428 1756,425 1756.5,415 1757,422 1757.5,416 1758,417 1758.5,424 1759,413 1759.5,415 1760,419 1760.5,412 1761,418 1761.5,438 1762,435 1762.5,434 1763,423 1763.5,424 1764,418 1764.5,426 1765,424 1765.5,425 1766,429 1766.5,414 1767,415 1767.5,412 1768,409 1768.5,415 1769,423 1769.5,422 1770,425 1770.5,434 1771,426 1771.5,432 1772,425 1772.5,424 1773,411 1773.5,429 1774,423 1774.5,416 1775,417 1775.5,426 1776,426 1776.5,425 1777,424 1777.5,440 1778,429 1778.5,425 1779,429 1779.5,428 1780,432 1780.5,436 1781,434 1781.5,434 1782,435 1782.5,432 1783,427 1783.5,427 1784,421 1784.5,413 1785,416 1785.5,415 1786,422 1786.5,427 1787,424 1787.5,422 1788,429 1788.5,429 1789,426 1789.5,422 1790,424 1790.5,426 1791,421 1791.5,421 1792,420 1792.5,426 1793,428 1793.5,409 1794,407 1794.5,408 1795,409 1795.5,421 1796,419 1796.5,418 1797,418 1797.5,416 1798,413 1798.5,410 1799,412 1799.5,419 1800,435 1800.5,427 1801,423 1801.5,422 1802,427 1802.5,432 1803,422 1803.5,422 1804,426 1804.5,413 1805,418 1805.5,417 1806,415 1806.5,422 1807,423 1807.5,426 1808,432 1808.5,427 1809,421 1809.5,422 1810,423 1810.5,428 1811,423 1811.5,426 1812,433 1812.5,431 1813,435 1813.5,429 1814,429 1814.5,431 1815,412 1815.5,416 1816,428 1816.5,433 1817,439 1817.5,433 1818,431 1818.5,426 1819,418 1819.5,427 1820,430 1820.5,427 1821,427 1821.5,425 1822,429 1822.5,434 1823,427 1823.5,421 1824,428 1824.5,423 1825,430 1825.5,429 1826,419 1826.5,416 1827,406 1827.5,417 1828,413 1828.5,415 1829,419 1829.5,414 1830,421 1830.5,440 1831,437 1831.5,433 1832,423 1832.5,422 1833,419 1833.5,412 1834,434 1834.5,427 1835,413 1835.5,421 1836,425 1836.5,424 1837,424 1837.5,432 1838,426 1838.5,428 1839,439 1839.5,437 1840,437 1840.5,435 1841,430 1841.5,428 1842,430 1842.5,431 1843,432 1843.5,427 1844,403 1844.5,422 1845,431 1845.5,432 1846,428 1846.5,432 1847,433 1847.5,426 1848,426 1848.5,427 1849,430 1849.5,418 1850,424 1850.5,416 1851,417 1851.5,421 1852,420 1852.5,417 1853,419 1853.5,423 1854,423 1854.5,419 1855,414 1855.5,417 1856,425 1856.5,415 1857,421 1857.5,414 1858,418 1858.5,429 1859,433 1859.5,435 1860,417 1860.5,424 1861,417 1861.5,422 1862,426 1862.5,423 1863,412 1863.5,426 1864,431 1864.5,431 1865,426 1865.5,425 1866,428 1866.5,425 1867,437 1867.5,427 1868,426 1868.5,422 1869,425 1869.5,437 1870,433 1870.5,428 1871,426 1871.5,429 1872,421 1872.5,424 1873,427 1873.5,421 1874,422 1874.5,424 1875,417 1875.5,431 1876,421 1876.5,429 1877,434 1877.5,414 1878,420 1878.5,409 1879,418 1879.5,429 1880,429 1880.5,435 1881,439 1881.5,438 1882,429 1882.5,426 1883,423 1883.5,432 1884,420 1884.5,428 1885,426 1885.5,427 1886,424 1886.5,421 1887,427 1887.5,422 1888,418 1888.5,429 1889,421 1889.5,417 1890,427 1890.5,425 1891,424 1891.5,423 1892,425 1892.5,435 1893,434 1893.5,440 1894,429 1894.5,421 1895,423 1895.5,424 1896,431 1896.5,434 1897,435 1897.5,436 1898,430 1898.5,431 1899,432 1899.5,430 1900,425 1900.5,411 1901,425 1901.5,436 1902,431 1902.5,432 1903,436 1903.5,434 1904,424 1904.5,432 1905,428 1905.5,424 1906,422 1906.5,425 1907,427 1907.5,433 1908,424 1908.5,417 1909,427 1909.5,423 1910,422 1910.5,426 1911,428 1911.5,435 1912,431 1912.5,427 1913,429 1913.5,430 1914,433 1914.5,436 1915,428 1915.5,431 1916,432 1916.5,431 1917,423 1917.5,428 1918,433 1918.5,435 1919,431 1919.5,425 1920,430 1920.5,435 1921,429 1921.5,430 1922,428 1922.5,429 1923,423 1923.5,414 1924,425 1924.5,426 1925,429 1925.5,428 1926,427 1926.5,434 1927,435 1927.5,431 1928,426 1928.5,423 1929,414 1929.5,408 1930,410 1930.5,417 1931,426 1931.5,427 1932,421 1932.5,418 1933,423 1933.5,425 1934,425 1934.5,430 1935,425 1935.5,433 1936,421 1936.5,432 1937,441 1937.5,434 1938,431 1938.5,426 1939,429 1939.5,422 1940,416 1940.5,415 1941,431 1941.5,430 1942,428 1942.5,435 1943,424 1943.5,428 1944,421 1944.5,427 1945,429 1945.5,427 1946,436 1946.5,433 1947,423 1947.5,417 1948,428 1948.5,428 1949,431 1949.5,437 1950,436 1950.5,422 1951,428 1951.5,431 1952,421 1952.5,416 1953,423 1953.5,429 1954,426 1954.5,423 1955,428 1955.5,432 1956,441 1956.5,422 1957,431 1957.5,427 1958,424 1958.5,428 1959,429 1959.5,433 1960,430 1960.5,422 1961,425 1961.5,430 1962,428 1962.5,429 1963,430 1963.5,424 1964,415 1964.5,423 1965,435 1965.5,420 1966,419 1966.5,429 1967,439 1967.5,433 1968,443 1968.5,431 1969,434 1969.5,428 1970,422 1970.5,426 1971,422 1971.5,424 1972,436 1972.5,439 1973,430 1973.5,430 1974,433 1974.5,435 1975,438 1975.5,441 1976,438 1976.5,439 1977,439 1977.5,430 1978,418 1978.5,419 1979,424 1979.5,436 1980,441 1980.5,434 1981,430 1981.5,428 1982,428 1982.5,431 1983,429 1983.5,424 1984,425 1984.5,426 1985,431 1985.5,422 1986,432 1986.5,429 1987,422 1987.5,428 1988,427 1988.5,430 1989,426 1989.5,429 1990,422 1990.5,428 1991,429 1991.5,426 1992,426 1992.5,425 1993,420 1993.5,424 1994,421 1994.5,427 1995,432 1995.5,436 1996,428 1996.5,430 1997,436 1997.5,430 1998,426 1998.5,429 1999,422 1999.5,423 2000,425 2000.5,424 2001,425 2001.5,424 2002,438 2002.5,439 2003,436 2003.5,436 2004,443 2004.5,442 2005,443 2005.5,437 2006,430 2006.5,434 2007,439 2007.5,436 2008,427 2008.5,427 2009,438 2009.5,436 2010,429 2010.5,435 2011,433 2011.5,426 2012,427 2012.5,428 2013,418 2013.5,418 2014,426 2014.5,433 2015,433 2015.5,435 2016,438 2016.5,444 2017,444 2017.5,435 2018,417 2018.5,418 2019,427 2019.5,428 2020,433 2020.5,442 2021,429 2021.5,428 2022,430 2022.5,421 2023,435 2023.5,431 2024,432 2024.5,426 2025,427 2025.5,436 2026,438 2026.5,433 2027,434 2027.5,445 2028,446 2028.5,444 2029,438 2029.5,435 2030,438 2030.5,437 2031,432 2031.5,437 2032,429 2032.5,432 2033,431 2033.5,427 2034,429 2034.5,433 2035,429 2035.5,426 2036,426 2036.5,425 2037,426 2037.5,428 2038,437 2038.5,433 2039,432 2039.5,432 2040,418 2040.5,427 2041,420 2041.5,422 2042,421 2042.5,427 2043,428 2043.5,430 2044,429 2044.5,433 2045,445 2045.5,435 2046,434 2046.5,431 2047,436 2047.5,434 2048,432 2048.5,428 2049,440 2049.5,433 2050,439 2050.5,428 2051,430 2051.5,434 2052,428 2052.5,433 2053,435 2053.5,425 2054,437 2054.5,438 2055,433 2055.5,428 2056,425 2056.5,435 2057,428 2057.5,430 2058,431 2058.5,434 2059,434 2059.5,438 2060,433 2060.5,419 2061,417 2061.5,426 2062,431 2062.5,432 2063,440 2063.5,432 2064,437 2064.5,446 2065,443 2065.5,442 2066,437 2066.5,442 2067,427 2067.5,434 2068,433 2068.5,431 2069,426 2069.5,433 2070,440 2070.5,439 2071,432 2071.5,434 2072,428 2072.5,432 2073,427 2073.5,420 2074,424 2074.5,437 2075,422 2075.5,424 2076,423 2076.5,431 2077,441 2077.5,431 2078,425 2078.5,429 2079,430 2079.5,426 2080,431 2080.5,428 2081,432 2081.5,439 2082,441 2082.5,436 2083,434 2083.5,436 2084,428 2084.5,431 2085,422 2085.5,428 2086,433 2086.5,432 2087,428 2087.5,432 2088,425 2088.5,429 2089,429 2089.5,414 2090,426 2090.5,428 2091,431 2091.5,430 2092,424 2092.5,425 2093,428 2093.5,431 2094,430 2094.5,427 2095,436 2095.5,434 2096,431 2096.5,425 2097,431 2097.5,427 2098,435 2098.5,433 2099,434 2099.5,423 2100,431 2100.5,432 2101,433 2101.5,425 2102,419 2102.5,432 2103,425 2103.5,440 2104,437 2104.5,432 2105,432 2105.5,425 2106,427 2106.5,436 2107,438 2107.5,430 2108,431 2108.5,438 2109,441 2109.5,434 2110,436 2110.5,433 2111,444 2111.5,445 2112,434 2112.5,431 2113,433 2113.5,437 2114,431 2114.5,427 2115,419 2115.5,429 2116,425 2116.5,431 2117,430 2117.5,432 2118,435 2118.5,431 2119,443 2119.5,436 2120,431 2120.5,432 2121,424 2121.5,436 2122,440 2122.5,439 2123,427 2123.5,430 2124,428 2124.5,432 2125,436 2125.5,429 2126,417 2126.5,426 2127,423 2127.5,420 2128,427 2128.5,428 2129,438 2129.5,434 2130,441 2130.5,443 2131,437 2131.5,431 2132,431 2132.5,439 2133,415 2133.5,430 2134,430 2134.5,435 2135,440 2135.5,447 2136,439 2136.5,435 2137,438 2137.5,443 2138,439 2138.5,435 2139,438 2139.5,429 2140,424 2140.5,437 2141,435 2141.5,430 2142,429 2142.5,435 2143,427 2143.5,420 2144,421 2144.5,424 2145,427 2145.5,428 2146,428 2146.5,432 2147,437 2147.5,436 2148,440 2148.5,434 2149,435 2149.5,430 2150,440 2150.5,434 2151,432 2151.5,430 2152,438 2152.5,433 2153,429 2153.5,431 2154,432 2154.5,430 2155,432 2155.5,443 2156,435 2156.5,438 2157,437 2157.5,442 2158,449 2158.5,447 2159,431 2159.5,432 2160,433 2160.5,433 2161,441 2161.5,439 2162,440 2162.5,440 2163,432 2163.5,433 2164,435 2164.5,432 2165,434 2165.5,427 2166,430 2166.5,432 2167,430 2167.5,435 2168,435 2168.5,436 2169,441 2169.5,429 2170,434 2170.5,431 2171,434 2171.5,440 2172,435 2172.5,430 2173,434 2173.5,433 2174,434 2174.5,424 2175,428 2175.5,433 2176,432 2176.5,452 2177,442 2177.5,438 2178,441 2178.5,443 2179,423 2179.5,418 2180,427 2180.5,431 2181,426 2181.5,431 2182,433 2182.5,435 2183,437 2183.5,435 2184,424 2184.5,422 2185,423 2185.5,426 2186,431 2186.5,424 2187,429 2187.5,438 2188,445 2188.5,436 2189,428 2189.5,427 2190,431 2190.5,437 2191,445 2191.5,439 2192,438 2192.5,444 2193,444 2193.5,439 2194,442 2194.5,436 2195,434 2195.5,436 2196,432 2196.5,437 2197,438 2197.5,436 2198,431 2198.5,439 2199,437 2199.5,438 2200,439 2200.5,444 2201,443 2201.5,448 2202,441 2202.5,434 2203,426 2203.5,434 2204,434 2204.5,440 2205,437 2205.5,427 2206,428 2206.5,435 2207,439 2207.5,445 2208,443 2208.5,446 2209,442 2209.5,443 2210,446 2210.5,442 2211,433 2211.5,437 2212,439 2212.5,440 2213,439 2213.5,434 2214,437 2214.5,438 2215,439 2215.5,431 2216,431 2216.5,441 2217,446 2217.5,441 2218,435 2218.5,437 2219,433 2219.5,434 2220,437 2220.5,432 2221,419 2221.5,422 2222,429 2222.5,434 2223,431 2223.5,428 2224,433 2224.5,430 2225,425 2225.5,433 2226,432 2226.5,433 2227,437 2227.5,437 2228,438 2228.5,428 2229,432" fill="none" stroke="#989898" stroke-width="0.8"/>
<rect x="1114" y="45" width="2" height="675" fill="#b8443a"/>
<rect x="1114" y="45" width="1" height="104" fill="#a8a8a8"/>
<rect x="1114" y="0" width="1" height="45" fill="#9a9a9a"/>
<text x="153.5" y="19.5" text-anchor="middle" fill="#a9c3e8" font-family="Liberation Sans" font-size="12.5">144,980</text>
<text x="393.8" y="19.5" text-anchor="middle" fill="#a9c3e8" font-family="Liberation Sans" font-size="12.5">144,985</text>
<text x="634.0" y="19.5" text-anchor="middle" fill="#a9c3e8" font-family="Liberation Sans" font-size="12.5">144,990</text>
<text x="874.2" y="19.5" text-anchor="middle" fill="#a9c3e8" font-family="Liberation Sans" font-size="12.5">144,995</text>
<text x="1114.5" y="19.5" text-anchor="middle" fill="#a9c3e8" font-family="Liberation Sans" font-size="12.5">145,000</text>
<text x="1354.8" y="19.5" text-anchor="middle" fill="#a9c3e8" font-family="Liberation Sans" font-size="12.5">145,005</text>
<text x="1595.0" y="19.5" text-anchor="middle" fill="#a9c3e8" font-family="Liberation Sans" font-size="12.5">145,010</text>
<text x="1835.2" y="19.5" text-anchor="middle" fill="#a9c3e8" font-family="Liberation Sans" font-size="12.5">145,015</text>
<text x="2075.5" y="19.5" text-anchor="middle" fill="#a9c3e8" font-family="Liberation Sans" font-size="12.5">145,020</text>
<text x="29" y="70.2" text-anchor="end" fill="#a9c3e8" font-family="Liberation Sans" font-size="12.5">-60</text>
<text x="29" y="102.9" text-anchor="end" fill="#a9c3e8" font-family="Liberation Sans" font-size="12.5">-65</text>
<text x="29" y="135.6" text-anchor="end" fill="#a9c3e8" font-family="Liberation Sans" font-size="12.5">-70</text>
<text x="29" y="168.2" text-anchor="end" fill="#a9c3e8" font-family="Liberation Sans" font-size="12.5">-75</text>
<text x="29" y="200.9" text-anchor="end" fill="#a9c3e8" font-family="Liberation Sans" font-size="12.5">-80</text>
<text x="29" y="233.6" text-anchor="end" fill="#a9c3e8" font-family="Liberation Sans" font-size="12.5">-85</text>
<text x="29" y="266.3" text-anchor="end" fill="#a9c3e8" font-family="Liberation Sans" font-size="12.5">-90</text>
<text x="29" y="299.0" text-anchor="end" fill="#a9c3e8" font-family="Liberation Sans" font-size="12.5">-95</text>
<text x="29" y="331.7" text-anchor="end" fill="#a9c3e8" font-family="Liberation Sans" font-size="12.5">-100</text>
<text x="29" y="364.4" text-anchor="end" fill="#a9c3e8" font-family="Liberation Sans" font-size="12.5">-105</text>
<text x="29" y="397.0" text-anchor="end" fill="#a9c3e8" font-family="Liberation Sans" font-size="12.5">-110</text>
<text x="29" y="429.7" text-anchor="end" fill="#a9c3e8" font-family="Liberation Sans" font-size="12.5">-115</text>
<text x="29" y="462.4" text-anchor="end" fill="#a9c3e8" font-family="Liberation Sans" font-size="12.5">-120</text>
<text x="29" y="495.1" text-anchor="end" fill="#a9c3e8" font-family="Liberation Sans" font-size="12.5">-125</text>
<text x="29" y="527.8" text-anchor="end" fill="#a9c3e8" font-family="Liberation Sans" font-size="12.5">-130</text>
<text x="29" y="560.5" text-anchor="end" fill="#a9c3e8" font-family="Liberation Sans" font-size="12.5">-135</text>
<text x="29" y="593.1" text-anchor="end" fill="#a9c3e8" font-family="Liberation Sans" font-size="12.5">-140</text>
<text x="29" y="625.8" text-anchor="end" fill="#a9c3e8" font-family="Liberation Sans" font-size="12.5">-145</text>
<text x="29" y="658.5" text-anchor="end" fill="#a9c3e8" font-family="Liberation Sans" font-size="12.5">-150</text>
<text x="29" y="691.2" text-anchor="end" fill="#a9c3e8" font-family="Liberation Sans" font-size="12.5">-155</text>
</svg>
  <!-- readouts -->
  <div class="a" style="left:0;top:867px;width:2229px;height:15px;background:#000"></div>
  <div class="t" style="left:1962px;top:869px;font-size:12.5px;color:#e8e830">-10,9Hz</div>
  <div class="t" style="left:2045px;top:869px;font-size:12.5px;color:#e8e830">-16,5dBm</div>
  <div class="t" style="left:2123px;top:869px;font-size:12.5px;color:#e8e830">144,999 989 MHz</div>
  <!-- pan row -->
  <div class="t" style="left:2px;top:893px;font-size:11.5px">Pan:</div>
  <div class="a" style="left:32px;top:887px;width:924px;height:24px;border-top:2px solid #8a8a8a;border-bottom:2px solid #8a8a8a;background:linear-gradient(90deg,#777 0,#3a3a3a 12px,#262626 30px,#262626 calc(100% - 40px),#3a3a3a calc(100% - 12px),#888 100%)"></div>
  <div class="a" style="left:62px;top:897px;width:850px;height:4px;background:#000;box-shadow:0 0 3px #000"></div>
  <div class="thumb" style="left:487px;top:889px;width:14px;height:20px"></div>
  <div class="btn" style="left:956px;top:887px;width:50px;height:24px;padding-top:5px;font-size:12.5px">Center</div>
  <div class="combo" style="left:1011px;top:887px;width:88px;height:21px;border-color:#e1e1e1"><div class="t" style="left:3px;top:4px;font-size:12px">Panadapter</div><div class="chev" style="left:74px;top:5px"></div></div>
  <div class="t" style="left:1106px;top:893px;font-size:11.5px">Zoom:</div>
  <div class="a" style="left:1146px;top:887px;width:922px;height:24px;border-top:2px solid #8a8a8a;border-bottom:2px solid #8a8a8a;background:linear-gradient(90deg,#555 0,#3a3a3a 3px,#262626 20px,#262626 calc(100% - 40px),#3a3a3a calc(100% - 12px),#888 100%)"></div>
  <div class="a" style="left:1175px;top:897px;width:845px;height:4px;background:#000;box-shadow:0 0 3px #000"></div>
  <div class="thumb" style="left:1147px;top:889px;width:14px;height:20px"></div>
  <div class="btn" style="left:2068px;top:887px;width:40px;height:24px;padding-top:5px;font-size:12.5px">0.5x</div>
  <div class="btn" style="left:2108px;top:887px;width:40px;height:24px;padding-top:5px;font-size:12.5px">1x</div>
  <div class="btn" style="left:2148px;top:887px;width:40px;height:24px;padding-top:5px;font-size:12.5px">2x</div>
  <div class="btn" style="left:2188px;top:887px;width:40px;height:24px;padding-top:5px;font-size:12.5px">4x</div>
  <!-- band buttons -->
  <div class="btnb" style="left:764px;top:916px;width:50px;height:23px;padding-top:4px;padding-left:4px;font-size:12.5px">144</div>
  <div class="btn" style="color:#565656;left:814px;top:916px;width:50px;height:23px;padding-top:4px;font-size:12.5px">1</div>
  <div class="btn" style="color:#565656;left:864px;top:916px;width:50px;height:23px;padding-top:4px;font-size:12.5px">2</div>
  <div class="btn" style="color:#565656;left:914px;top:916px;width:50px;height:23px;padding-top:4px;font-size:12.5px">3</div>
  <div class="btn" style="color:#565656;left:964px;top:916px;width:50px;height:23px;padding-top:4px;font-size:12.5px">4</div>
  <div class="btn" style="color:#565656;left:1014px;top:916px;width:50px;height:23px;padding-top:4px;font-size:12.5px">5</div>
  <div class="btn" style="color:#565656;left:1064px;top:916px;width:50px;height:23px;padding-top:4px;font-size:12.5px">6</div>
  <div class="btn" style="color:#565656;left:1114px;top:916px;width:50px;height:23px;padding-top:4px;font-size:12.5px">7</div>
  <div class="btn" style="color:#565656;left:1164px;top:916px;width:50px;height:23px;padding-top:4px;font-size:12.5px">8</div>
  <div class="btn" style="color:#565656;left:1214px;top:916px;width:50px;height:23px;padding-top:4px;font-size:12.5px">9</div>
  <div class="btn" style="color:#565656;left:1264px;top:916px;width:50px;height:23px;padding-top:4px;font-size:12.5px">10</div>
  <div class="btn" style="color:#565656;left:1314px;top:916px;width:50px;height:23px;padding-top:4px;font-size:12.5px">11</div>
  <div class="btn" style="color:#565656;left:1364px;top:916px;width:50px;height:23px;padding-top:4px;font-size:12.5px">12</div>
  <div class="btn" style="color:#565656;left:1414px;top:916px;width:50px;height:23px;padding-top:4px;font-size:12.5px">13</div>
  <div class="btn" style="left:1464px;top:916px;width:50px;height:23px;padding-top:4px;font-size:12.5px">HF</div>
  <div class="btn" style="left:814px;top:939px;width:50px;height:23px;padding-top:3px;font-size:12.5px">LSB</div>
  <div class="btn" style="left:864px;top:939px;width:50px;height:23px;padding-top:3px;font-size:12.5px">USB</div>
  <div class="btn" style="left:914px;top:939px;width:50px;height:23px;padding-top:3px;font-size:12.5px">DSB</div>
  <div class="btn" style="left:964px;top:939px;width:50px;height:23px;padding-top:3px;font-size:12.5px">CWL</div>
  <div class="btn" style="left:1014px;top:939px;width:50px;height:23px;padding-top:3px;font-size:12.5px">CWU</div>
  <div class="btnb" style="left:1064px;top:939px;width:50px;height:23px;padding-top:4px;font-size:12.5px">FM</div>
  <div class="btn" style="left:1114px;top:939px;width:50px;height:23px;padding-top:3px;font-size:12.5px">AM</div>
  <div class="btn" style="left:1164px;top:939px;width:50px;height:23px;padding-top:3px;font-size:12.5px">SAM</div>
  <div class="btn" style="left:1214px;top:939px;width:50px;height:23px;padding-top:3px;font-size:12.5px">SPEC</div>
  <div class="btn" style="left:1264px;top:939px;width:50px;height:23px;padding-top:3px;font-size:12.5px">DIGL</div>
  <div class="btn" style="left:1314px;top:939px;width:50px;height:23px;padding-top:3px;font-size:12.5px">DIGU</div>
  <div class="btn" style="left:1364px;top:939px;width:50px;height:23px;padding-top:3px;font-size:12.5px">DRM</div>

</div>

<div class="a" style="left:2229px;top:0;width:1px;height:967px;background:#34506e"></div>
<div class="a" style="left:0;top:966px;width:2230px;height:1px;background:#2a3a58"></div>
<!-- left partial icons -->
<div class="a" style="left:0;top:985px;width:18px;height:48px;background:#fff"></div>
<div class="a" style="left:0;top:1001px;width:18px;height:23px;background:#18e018"></div>
<div class="a" style="left:9px;top:1004px;width:7px;height:17px;border:2px solid #000;border-left-width:2px"></div>
<div class="a" style="left:3px;top:1017px;width:3px;height:3px;background:#000"></div>
<div class="icon-lbl" style="left:-1px;top:1033px;width:40px;text-align:left">pe —<br>ык</div>
<div class="a" style="left:53px;top:988px;width:17px;height:42px;background:#f0f0f0;background-image:repeating-linear-gradient(#f2f2f2 0,#f2f2f2 3px,#8a8a8a 3px,#8a8a8a 4px);border:1px solid #ccc"></div>
<div class="icon-lbl" style="left:50px;top:1036px;width:30px;text-align:left">rrrr</div>
<svg class="a" style="left:0;top:1088px" width="18" height="33" viewBox="0 0 18 33"><ellipse cx="6" cy="20" rx="9" ry="10" fill="#e0401a"/><path d="M-2,12L16,30M-2,28L16,10" stroke="#777" stroke-width="2"/></svg>
<svg class="a" style="left:44px;top:1084px" width="26" height="37" viewBox="0 0 26 37"><rect x="3" y="2" width="14" height="12" fill="#cfe8ff" stroke="#888"/><rect x="5" y="4" width="10" height="8" fill="#2a8ae8"/><rect x="1" y="18" width="24" height="2" fill="#ddd"/><rect x="9" y="15" width="3" height="4" fill="#e0b040"/><circle cx="20" cy="30" r="8" fill="#6ab8f0"/></svg>

<!-- JTDX - JTAlert -->
<svg class="a" style="left:719px;top:984px" width="50" height="50" viewBox="0 0 50 50">
  <defs><linearGradient id="xg" x1="0" y1="0" x2="1" y2="1"><stop offset="0" stop-color="#2a6af0"/><stop offset="0.5" stop-color="#1a58e8"/><stop offset="1" stop-color="#3a88f8"/></linearGradient></defs>
  <path d="M6,2H18L30,22L46,44H34L22,28Z" fill="url(#xg)"/>
  <path d="M19,9L25,20L10,40L7,38Z" fill="#1a4ad0" opacity="0.9"/>
  <path d="M40,2H45L26,26L24,22Z" fill="#2a70f0"/>
  <rect x="1" y="35" width="13" height="13" fill="#fff" stroke="#9ab"/><path d="M4,45Q5,40 9,40M6.5,38.5L9.5,40.5L7,43" stroke="#2a5ab0" stroke-width="1.6" fill="none"/>
</svg>
<div class="icon-lbl" style="left:703px;top:1036px;width:80px">JTDX -<br>JTAlert</div>
<!-- JTDX -->
<svg class="a" style="left:794px;top:984px" width="50" height="50" viewBox="0 0 50 50">
  <circle cx="25" cy="24.5" r="24" fill="#fff"/>
  <path d="M25,24.5L30.0,24.5L35.6,35.1Z" fill="#2a30e0"/><path d="M25,24.5L25.0,29.5L35.6,35.1Z" fill="#a8acf4"/><path d="M25,24.5L25.0,29.5L14.4,35.1Z" fill="#2a30e0"/><path d="M25,24.5L20.0,24.5L14.4,35.1Z" fill="#a8acf4"/><path d="M25,24.5L20.0,24.5L14.4,13.9Z" fill="#2a30e0"/><path d="M25,24.5L25.0,19.5L14.4,13.9Z" fill="#a8acf4"/><path d="M25,24.5L25.0,19.5L35.6,13.9Z" fill="#2a30e0"/><path d="M25,24.5L30.0,24.5L35.6,13.9Z" fill="#a8acf4"/><path d="M25,24.5L20.8,20.3L25.0,1.5Z" fill="#1a22e0"/><path d="M25,24.5L29.2,20.3L25.0,1.5Z" fill="#a0a6f2"/><path d="M25,24.5L29.2,20.3L48.0,24.5Z" fill="#1a22e0"/><path d="M25,24.5L29.2,28.7L48.0,24.5Z" fill="#a0a6f2"/><path d="M25,24.5L29.2,28.7L25.0,47.5Z" fill="#1a22e0"/><path d="M25,24.5L20.8,28.7L25.0,47.5Z" fill="#a0a6f2"/><path d="M25,24.5L20.8,28.7L2.0,24.5Z" fill="#1a22e0"/><path d="M25,24.5L20.8,20.3L2.0,24.5Z" fill="#a0a6f2"/>
  <rect x="1" y="35" width="13" height="13" fill="#fff" stroke="#9ab"/><path d="M4,45Q5,40 9,40M6.5,38.5L9.5,40.5L7,43" stroke="#2a5ab0" stroke-width="1.6" fill="none"/>
</svg>
<div class="icon-lbl" style="left:778px;top:1036px;width:80px">JTDX</div>
<!-- CI-V -->
<svg class="a" style="left:868px;top:984px" width="52" height="50" viewBox="0 0 52 50">
  <path d="M24,14L38,3L50,14L50,24L36,36L24,26Z" fill="#fff" stroke="#000" stroke-width="2"/>
  <path d="M27,16L39,6M29,20L43,9M31,24L46,13M33,29L48,17" stroke="#111" stroke-width="2"/>
  <path d="M26,26L36,36L50,24" fill="none" stroke="#777" stroke-width="3" stroke-dasharray="2 1"/>
  <path d="M4,26L14,16L24,26L24,36L14,44L4,36Z" fill="#fff" stroke="#000" stroke-width="2"/>
  <path d="M7,28L15,20M9,32L18,23M11,36L21,27" stroke="#111" stroke-width="2"/>
  <path d="M6,36L14,44L24,36" fill="none" stroke="#888" stroke-width="3" stroke-dasharray="2 1"/>
  <path d="M22,42L30,50L46,34" stroke="#111" stroke-width="1" fill="none"/>
  <rect x="1" y="35" width="13" height="13" fill="#fff" stroke="#9ab"/><path d="M4,45Q5,40 9,40M6.5,38.5L9.5,40.5L7,43" stroke="#2a5ab0" stroke-width="1.6" fill="none"/>
</svg>
<div class="icon-lbl" style="left:853px;top:1036px;width:80px">CI-V<br>Command...</div>
<!-- PowerSDR -->
<svg class="a" style="left:945px;top:984px" width="50" height="50" viewBox="0 0 50 50">
  <rect x="2" y="2" width="45" height="44" fill="#2e6a82" stroke="#0e2a3a" stroke-width="1.5"/>
  <path d="M8,38V8H28V30M14,14V34H36V14H22V40" stroke="#0a1e48" stroke-width="2" fill="none"/>
  <path d="M26,30L36,30L46,28V38Q46,46 36,50Q26,46 26,38Z" fill="#fff"/>
  <path d="M27.5,31.5H35V38H27.5Z" fill="#1a6ad8"/><path d="M37,31L45,29.5V38H37Z" fill="#f4b030"/>
  <path d="M27.5,40H35V47Q29,45 27.5,40Z" fill="#f4b030"/><path d="M37,40H45Q44,45 37,48Z" fill="#1a6ad8"/>
  <rect x="1" y="35" width="13" height="13" fill="#fff" stroke="#9ab"/><path d="M4,45Q5,40 9,40M6.5,38.5L9.5,40.5L7,43" stroke="#2a5ab0" stroke-width="1.6" fill="none"/>
</svg>
<div class="icon-lbl" style="left:929px;top:1036px;width:80px">PowerSDR<br>mRX PS</div>
<!-- VARA FM -->
<svg class="a" style="left:1019px;top:984px" width="50" height="50" viewBox="0 0 50 50">
  <path d="M8,10L36,4L38,10L8,16Z" fill="#f0d020"/>
  <path d="M8,16L38,10L40,36L12,42Z" fill="#2a3a3c"/>
  <path d="M8,16L12,16L14,42L10,42Z" fill="#9a3a1a"/>
  <text x="16" y="26" font-family="Liberation Sans" font-weight="bold" font-size="8" fill="#e8f0e8" transform="rotate(-8 24 24)">Mails</text>
  <path d="M38,4L44,3L48,34L40,36Z" fill="#e8f0f8"/><path d="M39,8L45,7M40,14L46,13M41,20L46,19M42,28L47,27" stroke="#2a7ae0" stroke-width="3"/>
  <path d="M14,40L20,30L26,36L16,44Z" fill="#f0c8b8"/>
  <path d="M24,38L32,33L40,36L42,40L28,44Z" fill="#40a898"/>
  <rect x="1" y="35" width="13" height="13" fill="#fff" stroke="#9ab"/><path d="M4,45Q5,40 9,40M6.5,38.5L9.5,40.5L7,43" stroke="#2a5ab0" stroke-width="1.6" fill="none"/>
</svg>
<div class="icon-lbl" style="left:1003px;top:1036px;width:80px">VARA FM</div>
<!-- Opera -->
<svg class="a" style="left:1098px;top:984px" width="40" height="50" viewBox="0 0 40 50">
  <rect x="3" y="1" width="36" height="48" fill="#fff"/>
  <path d="M30,8L39,4V49H30Z" fill="#111"/>
  <path d="M9,16Q9,4 20,4Q32,4 31,14L29,18Q26,10 20,11Q13,11 12,20Z" fill="#111"/>
  <path d="M12,18Q12,34 21,36Q29,34 29,20" fill="#f2f2f2" stroke="#222" stroke-width="1.2"/>
  <path d="M14,19H19M23,19H28" stroke="#111" stroke-width="2"/>
  <path d="M12,28Q20,22 30,27L28,30Q20,27 14,31Z" fill="#111"/>
  <path d="M6,31L16,30" stroke="#333" stroke-width="1.5"/>
  <path d="M6,40Q14,34 21,38L24,49H6Z" fill="#111"/><path d="M26,36L39,38V49H26Z" fill="#111"/>
  <path d="M20,38L23,49H26L24,38Z" fill="#ddd"/>
  <rect x="1" y="35" width="13" height="13" fill="#fff" stroke="#9ab"/><path d="M4,45Q5,40 9,40M6.5,38.5L9.5,40.5L7,43" stroke="#2a5ab0" stroke-width="1.6" fill="none"/>
</svg>
<div class="icon-lbl" style="left:1079px;top:1036px;width:80px">Opera 1.6.5</div>
<!-- row 2 -->
<svg class="a" style="left:721px;top:1085px" width="46" height="36" viewBox="0 0 46 36">
  <path d="M6,2H40L43,36H3Z" fill="#1a6ad8"/><path d="M6,2H40L41,8H5Z" fill="#5aa8f0"/>
  <circle cx="21" cy="18" r="5" fill="none" stroke="#fff" stroke-width="2.5"/><path d="M11,9L15,12M9,13L13,15M28,8L34,5L36,9L30,12Z" stroke="#fff" stroke-width="2" fill="#fff"/>
  <path d="M16,26H26M17,30H25" stroke="#fff" stroke-width="2"/>
</svg>
<svg class="a" style="left:869px;top:1085px" width="49" height="36" viewBox="0 0 49 36">
  <rect x="0" y="0" width="49" height="36" fill="#fff"/>
  <circle cx="24.5" cy="24" r="23" fill="#d8cc98"/>
  <text x="24.5" y="24" text-anchor="middle" font-family="Liberation Sans" font-weight="bold" font-size="17" fill="#111">SDR</text>
  <text x="24.5" y="40" text-anchor="middle" font-family="Liberation Sans" font-weight="bold" font-size="17" fill="#111">DT</text>
</svg>
<svg class="a" style="left:945px;top:1085px" width="49" height="36" viewBox="0 0 49 36">
  <rect x="0" y="0" width="49" height="36" fill="#fff"/>
  <path d="M2,22L8,18L12,24L18,20L22,26L26,6L30,30L34,16L38,24L44,20L48,26" stroke="#4a5ad0" stroke-width="0.8" fill="none"/>
  <text x="3" y="22" font-family="Liberation Sans" font-style="italic" font-weight="bold" font-size="9" fill="#111">SDR</text>
  <text x="26" y="33" font-family="Liberation Sans" font-style="italic" font-weight="bold" font-size="8" fill="#111">uno</text>
</svg>
<svg class="a" style="left:1020px;top:1085px" width="47" height="36" viewBox="0 0 47 36">
  <rect x="0" y="0" width="47" height="36" fill="#10ea10"/>
  <path d="M2,6L14,2L28,10L44,28L40,36H20L6,20Z" fill="#111"/>
  <path d="M28,24L44,30L40,36H24Z" fill="#888"/><path d="M30,28L36,30M34,32L40,34" stroke="#ddd" stroke-width="2"/>
</svg>

<div class="win" style="left:69px;top:908px;width:610px;height:220px;border-color:#9a9a9a;font-size:11px">
  <div class="wtitle" style="height:30px"></div>
  <svg class="a" style="left:7px;top:6px" width="17" height="16" viewBox="0 0 17 16">
    <rect x="0.5" y="0.5" width="16" height="15" rx="1" fill="#3a6a8a" stroke="#223a50"/>
    <rect x="2" y="2" width="13" height="8" fill="#7ab0d0"/>
    <path d="M4,2V10M8,2V8M12,2V10M4,10H12" stroke="#fff" stroke-width="1.2" fill="none"/>
    <rect x="1" y="11" width="15" height="4" fill="#cfd8e0"/>
  </svg>
  <div class="t" style="left:29px;top:10px;font-size:11.5px;color:#8c8c8c">HPSDR Setup</div>
  <div class="a" style="left:488px;top:14px;width:12px;height:1px;background:#8a8a8a"></div>
  <div class="a" style="left:534px;top:9px;width:11px;height:11px;border:1px solid #8a8a8a"></div>
  <svg class="a" style="left:580px;top:8px" width="12" height="12" viewBox="0 0 12 12"><path d="M1,1L11,11M11,1L1,11" stroke="#8a8a8a" stroke-width="1.1"/></svg>
  <!-- main tabs -->
  <div class="a" style="left:9px;top:58px;width:588px;height:170px;border:1px solid #dcdcdc;background:#f0f0f0"></div>
  <div class="tab" style="left:10px;top:40px;width:48px;height:19px;padding-top:2px">General</div>
  <div class="tab" style="left:58px;top:40px;width:41px;height:19px;padding-top:2px">Audio</div>
  <div class="tab" style="left:99px;top:38px;width:49px;height:21px;padding-top:2px;background:#fff;border-color:#d0d0d0">Display</div>
  <div class="tab" style="left:148px;top:40px;width:41px;height:19px;padding-top:2px;text-align:left;padding-left:4px">DSP</div>
  <div class="tab" style="left:189px;top:40px;width:52px;height:19px;padding-top:2px">Transmit</div>
  <div class="tab" style="left:241px;top:40px;width:68px;height:19px;padding-top:2px">PA Settings</div>
  <div class="tab" style="left:308px;top:40px;width:70px;height:19px;padding-top:2px">Appearance</div>
  <div class="tab" style="left:377px;top:40px;width:58px;height:19px;padding-top:2px">Keyboard</div>
  <div class="tab" style="left:435px;top:40px;width:69px;height:19px;padding-top:2px">CAT Control</div>
  <div class="tab" style="left:503px;top:40px;width:41px;height:19px;padding-top:2px">Tests</div>
  <div class="a" style="left:99px;top:57px;width:49px;height:3px;background:#fff"></div>
  <!-- sub panel -->
  <div class="a" style="left:12px;top:60px;width:582px;height:170px;background:#f0f0f0;border-left:1px solid #fff;border-top:1px solid #fff"></div>
  <div class="a" style="left:15px;top:84px;width:578px;height:160px;border:1px solid #dcdcdc;background:#f0f0f0"></div>
  <div class="tab" style="left:17px;top:66px;width:48px;height:19px;padding-top:2px">General</div>
  <div class="tab" style="left:64px;top:64px;width:46px;height:21px;padding-top:2px;background:#fff;border-color:#d0d0d0">RX 1</div>
  <div class="tab" style="left:109px;top:66px;width:41px;height:19px;padding-top:2px">RX 2</div>
  <div class="tab" style="left:149px;top:66px;width:41px;height:19px;padding-top:2px">TX</div>
  <div class="a" style="left:64px;top:83px;width:46px;height:3px;background:#fff"></div>
  <div class="a" style="left:16px;top:85px;width:576px;height:160px;border-left:1px solid #fff;border-top:1px solid #fff"></div>
  <!-- FFT group -->
  <div class="a" style="left:26px;top:99px;width:259px;height:140px;border:1px solid #d5d5d5;border-radius:2px"></div>
  <div class="t" style="left:32px;top:94px;padding:0 2px;background:#f0f0f0;font-size:11px;letter-spacing:-0.35px">Fast Fourier Transform</div>
  <div class="t" style="left:145px;top:107px;font-size:11px">Size</div>
  <div class="t" style="left:33px;top:135px;font-size:11px">Min</div>
  <div class="t" style="left:254px;top:135px;font-size:11px">Max</div>
  <div class="a" style="left:61px;top:124px;width:185px;height:32px;background:#000"></div>
  <div class="a" style="left:69px;top:131px;width:161px;height:4px;background:#e6e6e6;border-radius:1px"></div>
  <svg class="a" style="left:227px;top:126px" width="12" height="20" viewBox="0 0 12 20"><path d="M1,1H11V14L6,19L1,14Z" fill="#0f6ed6" stroke="#0a58b0" stroke-width="0.8"/></svg>
  <svg class="a" style="left:61px;top:124px" width="185" height="32" viewBox="0 0 185 32"><path d="M13.5,28V32M40.5,28V32M67.5,28V32M93.5,28V32M119.5,28V32M146.5,28V32M172.5,28V32" stroke="#ddd" stroke-width="1" transform="translate(0,-3)"/></svg>
  <div class="t" style="left:33px;top:173px;font-size:11px">Bin Width (Hz)</div>
  <div class="a" style="left:112px;top:171px;width:34px;height:18px;background:#fde5c8;border:1px solid #e8d4bc"></div>
  <div class="t" style="left:114px;top:175px;font-size:11px;color:#333">0,183</div>
  <div class="t" style="left:33px;top:196px;font-size:11px">Window</div>
  <div class="combo" style="left:108px;top:193px;width:121px;height:22px;background:#e5e5e5;border-color:#adadad"><div class="t" style="left:4px;top:5px;font-size:11px">Kaiser</div><div class="chev" style="left:106px;top:6px"></div></div>
  <!-- Waterfall group -->
  <div class="a" style="left:315px;top:99px;width:256px;height:140px;border:1px solid #d5d5d5;border-radius:2px"></div>
  <div class="t" style="left:322px;top:94px;padding:0 2px;background:#f0f0f0;font-size:11px">Waterfall</div>
  <div class="t" style="left:325px;top:113px;font-size:11px">Low Level</div>
  <div class="spin" style="left:387px;top:108px;width:48px;height:20px;border-color:#c8c8c8;background:#f4f4f4"><div class="t" style="left:1px;top:4px;font-size:11px;color:#8a8a8a">-140</div></div>
  <div class="t" style="left:325px;top:136px;font-size:11px">High Level</div>
  <div class="spin" style="left:387px;top:134px;width:48px;height:20px"><div class="t" style="left:1px;top:4px;font-size:11px">-80</div></div>
  <svg class="a" style="left:418px;top:109px" width="16" height="18" viewBox="0 0 16 18"><rect x="0.5" y="0.5" width="15" height="17" fill="#f0f0f0" stroke="#dadada"/><path d="M5,7L8,3.5L11,7ZM5,11L8,14.5L11,11Z" fill="#9a9a9a"/></svg>
  <svg class="a" style="left:418px;top:135px" width="16" height="18" viewBox="0 0 16 18"><rect x="0.5" y="0.5" width="15" height="17" fill="#f0f0f0" stroke="#dadada"/><path d="M5,7L8,3.5L11,7ZM5,11L8,14.5L11,11Z" fill="#222"/></svg>
  <div class="a" style="left:454px;top:141px;width:13px;height:13px;border:1px solid #333;background:#fff"></div>
  <svg class="a" style="left:454px;top:141px" width="13" height="13" viewBox="0 0 13 13"><path d="M2.5,6.5L5,9.5L10.5,3" stroke="#222" stroke-width="1.2" fill="none"/></svg>
  <div class="t" style="left:471px;top:142px;font-size:11px">Waterfall AGC</div>
  <div class="t" style="left:325px;top:171px;font-size:11px">Palette</div>
  <div class="combo" style="left:369px;top:167px;width:72px;height:21px;background:#e5e5e5;border-color:#adadad"><div class="t" style="left:3px;top:5px;font-size:11px;letter-spacing:-0.3px">BlackWhit</div><div class="chev" style="left:59px;top:5px;width:6px;height:6px"></div></div>
  <div class="t" style="left:325px;top:195px;font-size:11px;line-height:12px">Update<br>Period (ms):</div>
  <div class="spin" style="left:387px;top:194px;width:48px;height:20px"><div class="t" style="left:1px;top:4px;font-size:11px">40</div></div>
  <svg class="a" style="left:418px;top:195px" width="16" height="18" viewBox="0 0 16 18"><rect x="0.5" y="0.5" width="15" height="17" fill="#f0f0f0" stroke="#dadada"/><path d="M5,7L8,3.5L11,7ZM5,11L8,14.5L11,11Z" fill="#222"/></svg>
</div>

<div class="win" style="left:1587px;top:1014px;width:660px;height:120px;border-color:#8a8a8a;font-size:11px">
  <div class="wtitle" style="height:30px"></div>
  <svg class="a" style="left:8px;top:5px" width="17" height="16" viewBox="0 0 17 16">
    <rect x="0.5" y="0.5" width="16" height="15" rx="1" fill="#3a6a8a" stroke="#223a50"/>
    <rect x="2" y="2" width="13" height="8" fill="#7ab0d0"/>
    <path d="M4,2V10M8,2V8M12,2V10M4,10H12" stroke="#fff" stroke-width="1.2" fill="none"/>
    <rect x="1" y="11" width="15" height="4" fill="#cfd8e0"/>
  </svg>
  <div class="t" style="left:29px;top:9px;font-size:11.5px;color:#000">XVTR Setup</div>
  <div class="t" style="left:18px;top:55px">Enabled</div>
  <div class="t" style="left:74px;top:55px">Band Button</div>
  <div class="t" style="left:152px;top:55px">Button Text</div>
  <div class="t" style="left:232px;top:46px;line-height:12px">LO Offset<br>(MHz)</div>
  <div class="t" style="left:320px;top:46px;line-height:12px">LO Error<br>(kHz)</div>
  <div class="t" style="left:384px;top:55px">Begin Freq (MHz)</div>
  <div class="t" style="left:496px;top:55px">End Freq (MHz)</div>
  <div class="t" style="left:592px;top:46px;line-height:12px">RX Gain<br>(dB)</div>
  <!-- row 1 -->
  <div class="a" style="left:32px;top:78px;width:13px;height:13px;border:1px solid #333;background:#fff"></div>
  <svg class="a" style="left:32px;top:79px" width="13" height="13" viewBox="0 0 13 13"><path d="M2.5,6.5L5,9.5L10.5,3" stroke="#222" stroke-width="1.2" fill="none"/></svg>
  <div class="a" style="left:72px;top:77px;width:64px;height:20px;border:1px solid #7a7a7a;background:#f0f0f0;text-align:center;padding-top:4px">0</div>
  <div class="a" style="left:150px;top:77px;width:64px;height:20px;border:1px solid #7a7a7a;background:#fff;text-align:center;padding-top:4px">144</div>
  <div class="spin" style="border-color:#a8a8a8;left:230px;top:77px;width:80px;height:20px;padding:2px 2px">116,0</div>
  <div class="spin" style="border-color:#a8a8a8;left:318px;top:77px;width:56px;height:20px;padding:2px 2px">0,000</div>
  <div class="spin" style="border-color:#a8a8a8;left:382px;top:77px;width:95px;height:20px;padding:2px 2px">138,000000</div>
  <div class="spin" style="border-color:#a8a8a8;left:486px;top:77px;width:96px;height:20px;padding:2px 2px">149,000000</div>
  <div class="spin" style="border-color:#a8a8a8;left:590px;top:77px;width:80px;height:20px;padding:2px 2px"><span style="background:#000;color:#fff">1</span>4,4</div>
  <svg class="a" style="left:290px;top:79px" width="19" height="18" viewBox="0 0 19 18"><rect x="0.5" y="0.5" width="18" height="17" fill="#f0f0f0" stroke="#dadada"/><path d="M6,7L9.5,3.5L13,7ZM6,11L9.5,14.5L13,11Z" fill="#222"/></svg>
  <svg class="a" style="left:354px;top:79px" width="19" height="18" viewBox="0 0 19 18"><rect x="0.5" y="0.5" width="18" height="17" fill="#f0f0f0" stroke="#dadada"/><path d="M6,7L9.5,3.5L13,7ZM6,11L9.5,14.5L13,11Z" fill="#222"/></svg>
  <svg class="a" style="left:457px;top:79px" width="19" height="18" viewBox="0 0 19 18"><rect x="0.5" y="0.5" width="18" height="17" fill="#f0f0f0" stroke="#dadada"/><path d="M6,7L9.5,3.5L13,7ZM6,11L9.5,14.5L13,11Z" fill="#222"/></svg>
  <svg class="a" style="left:562px;top:79px" width="19" height="18" viewBox="0 0 19 18"><rect x="0.5" y="0.5" width="18" height="17" fill="#f0f0f0" stroke="#dadada"/><path d="M6,7L9.5,3.5L13,7ZM6,11L9.5,14.5L13,11Z" fill="#222"/></svg>
  <svg class="a" style="left:624px;top:79px" width="19" height="18" viewBox="0 0 19 18"><rect x="0.5" y="0.5" width="18" height="17" fill="#f0f0f0" stroke="#dadada"/><path d="M6,7L9.5,3.5L13,7ZM6,11L9.5,14.5L13,11Z" fill="#222"/></svg>
  <!-- row 2 partial -->
  <div class="a" style="left:32px;top:103px;width:13px;height:13px;border:1px solid #333;background:#fff"></div>
  <div class="a" style="left:72px;top:102px;width:64px;height:20px;border:1px solid #7a7a7a;background:#f0f0f0"></div>
  <div class="a" style="left:150px;top:102px;width:64px;height:20px;border:1px solid #c8c8c8;background:#f0f0f0"></div>
  <div class="spin" style="left:230px;top:102px;width:80px;height:20px;border-color:#c8c8c8"></div>
  <div class="spin" style="border-color:#a8a8a8;left:318px;top:102px;width:56px;height:20px;border-color:#c8c8c8"></div>
  <div class="spin" style="border-color:#a8a8a8;left:382px;top:102px;width:95px;height:20px;border-color:#c8c8c8"></div>
  <div class="spin" style="border-color:#a8a8a8;left:486px;top:102px;width:96px;height:20px;border-color:#c8c8c8"></div>
  <div class="spin" style="border-color:#a8a8a8;left:590px;top:102px;width:80px;height:20px;border-color:#c8c8c8"></div>
</div>

</body></html>
